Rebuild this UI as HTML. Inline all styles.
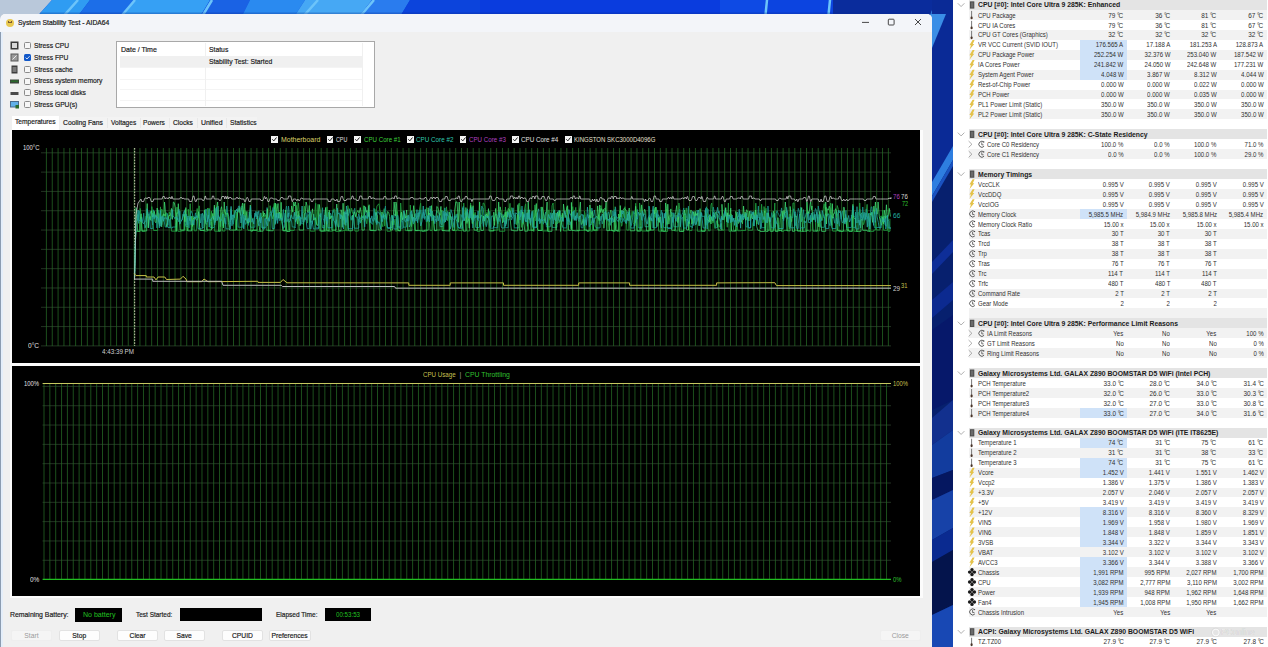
<!DOCTYPE html>
<html><head><meta charset="utf-8"><style>
html,body{margin:0;padding:0;width:1268px;height:647px;overflow:hidden;background:#0a3ede}
body{position:relative;font-family:"Liberation Sans",sans-serif;}
</style></head><body>
<svg style="position:absolute;left:0;top:0" width="953" height="20"><rect x="0" y="0" width="953" height="20" fill="#0a3ede"/><polygon points="0,0 52,0 34,20 0,20" fill="#b9c8da"/><polygon points="52,0 90,0 75,20 34,20" fill="#2f9cf2"/><polygon points="90,0 135,0 120,20 75,20" fill="#1c6ee8"/><polygon points="135,0 210,0 198,20 120,20" fill="#36a0f4"/><polygon points="210,0 250,0 240,20 198,20" fill="#1a62e4"/><polygon points="250,0 305,0 292,20 240,20" fill="#2a8af0"/><polygon points="305,0 372,0 356,20 292,20" fill="#46a8f4"/><polygon points="372,0 410,0 398,20 356,20" fill="#2a7cee"/><polygon points="410,0 480,0 480,20 398,20" fill="#0c44dc"/><rect x="480" y="0" width="240" height="20" fill="#0a3cde"/><rect x="720" y="0" width="45" height="20" fill="#0e4ae4"/><rect x="765" y="0" width="68" height="20" fill="#0c44e0"/><rect x="833" y="0" width="120" height="20" fill="#0a2c9c"/><polygon points="936,0 946,0 937,20 928,20" fill="#3a8ee6"/><path d="M78,0 L60,20 M135,0 L118,20 M212,0 L200,20 M318,0 L300,20 M374,0 L357,20 M767,0 L765,20 M830,0 L828,20" stroke="#6cc4fa" stroke-width="2.5"/><rect x="40" y="12.5" width="913" height="1.5" fill="#0a2a90" opacity="0.3"/></svg><svg style="position:absolute;left:932px;top:0" width="21" height="647"><rect x="0" y="0" width="21" height="647" fill="#0a2a96"/><polygon points="0,14 14,14 0,48" fill="#3a8ee6"/><polygon points="0,190 21,150 21,647 0,647" fill="#07206e"/><polygon points="0,182 21,146 21,160 0,196" fill="#2e7ee0"/><polygon points="0,196 21,160 21,166 0,202" fill="#1a52c0"/><polygon points="0,262 21,240 21,252 0,274" fill="#0e2e98"/><polygon points="0,300 21,282 21,300 0,318" fill="#0c2a90"/><polygon points="0,330 21,315 21,400 0,410" fill="#06186a"/><polygon points="0,418 21,400 21,430 0,445" fill="#12308e"/><polygon points="0,445 21,430 21,470 0,478" fill="#123c9e"/><polygon points="0,478 21,470 21,490 0,500" fill="#051760"/><polygon points="0,500 21,490 21,528 0,540" fill="#1742a8"/><polygon points="0,540 21,528 21,550 0,562" fill="#0a2a90"/><polygon points="0,562 21,550 21,605 0,615" fill="#04144c"/><polygon points="0,615 21,605 21,647 0,647" fill="#1848b4"/></svg><div style="position:absolute;left:0px;top:14px;width:932px;height:633px;background:#f0f0f0;border-top-left-radius:5px;border-top-right-radius:5px;border-left:1px solid #8c9cb0;box-sizing:border-box;"></div><div style="position:absolute;left:0px;top:14px;width:932px;height:18px;background:#f3f5f9;border-top-left-radius:5px;border-top-right-radius:5px;"></div><div style="position:absolute;left:1px;top:32px;width:1.6px;height:615px;background:#e4eefa;"></div><div style="position:absolute;left:6px;top:19px;width:8px;height:8px;border-radius:50%;background:#e8c850;"></div><div style="position:absolute;left:8px;top:21px;width:4px;height:2px;border-bottom:1.2px solid #7a5a30;border-left:0.8px solid #7a5a30;border-right:0.8px solid #7a5a30;box-sizing:border-box"></div><svg style="position:absolute;left:0;top:0" width="1268" height="647"><line x1="862" y1="22.4" x2="869" y2="22.4" stroke="#333" stroke-width="0.9"/><rect x="888.3" y="19.2" width="5.8" height="5.8" rx="0.8" fill="none" stroke="#333" stroke-width="0.9"/><path d="M915 19 L921 25 M921 19 L915 25" stroke="#333" stroke-width="0.9"/></svg><div style="position:absolute;left:24.3px;top:42.1px;width:7px;height:7px;border-radius:1.5px;border:0.8px solid #8a8a8a;box-sizing:border-box;background:#f6f6f6"></div><div style="position:absolute;left:24.3px;top:53.9px;width:7px;height:7px;border-radius:1.5px;background:#1258c8;"></div><svg style="position:absolute;left:24.3px;top:53.9px" width="7" height="7"><path d="M1.6 3.6 L3 5 L5.6 2.2" fill="none" stroke="#fff" stroke-width="0.8"/></svg><div style="position:absolute;left:24.3px;top:65.7px;width:7px;height:7px;border-radius:1.5px;border:0.8px solid #8a8a8a;box-sizing:border-box;background:#f6f6f6"></div><div style="position:absolute;left:24.3px;top:77.5px;width:7px;height:7px;border-radius:1.5px;border:0.8px solid #8a8a8a;box-sizing:border-box;background:#f6f6f6"></div><div style="position:absolute;left:24.3px;top:89.3px;width:7px;height:7px;border-radius:1.5px;border:0.8px solid #8a8a8a;box-sizing:border-box;background:#f6f6f6"></div><div style="position:absolute;left:24.3px;top:101.1px;width:7px;height:7px;border-radius:1.5px;border:0.8px solid #8a8a8a;box-sizing:border-box;background:#f6f6f6"></div><svg style="position:absolute;left:10px;top:41.1px" width="10" height="9"><rect x="0.5" y="0.5" width="8" height="8" fill="#3a3a3a"/><rect x="2" y="2" width="5" height="5" fill="#d8d8d8"/></svg><svg style="position:absolute;left:10px;top:52.9px" width="10" height="9"><rect x="0.5" y="0.5" width="8" height="8" fill="#5a5a5a"/><rect x="1.5" y="1.5" width="6" height="6" fill="#9a9a9a"/><path d="M2.5 6.5 L6.5 2.5" stroke="#fff" stroke-width="0.8"/></svg><svg style="position:absolute;left:10px;top:64.7px" width="10" height="9"><rect x="1.5" y="0.5" width="6" height="8" fill="#3e3e3e"/><rect x="2.5" y="2" width="4" height="5" fill="#7a7a7a"/></svg><svg style="position:absolute;left:10px;top:76.5px" width="10" height="9"><rect x="0" y="2.5" width="9" height="4" fill="#3a463a"/><rect x="1" y="3.5" width="7" height="1.5" fill="#2a6a2a"/></svg><svg style="position:absolute;left:10px;top:88.3px" width="10" height="9"><rect x="0.5" y="4" width="8" height="3" fill="#4a4a4a"/></svg><svg style="position:absolute;left:10px;top:100.1px" width="10" height="9"><rect x="0" y="1" width="9" height="6.5" fill="#4a6a8a"/><rect x="1" y="2" width="7" height="4.5" fill="#60b0e8"/><rect x="5.5" y="5" width="3.5" height="3.5" fill="#2a6a2a"/></svg><div style="position:absolute;left:116.4px;top:41.4px;width:258.6px;height:66.4px;background:#fff;border:1px solid #a8a8a8;box-sizing:border-box"></div><div style="position:absolute;left:120.2px;top:56.3px;width:241.8px;height:10.7px;background:#f0f0f0;"></div><div style="position:absolute;left:120.2px;top:67.2px;width:241.8px;height:0.6px;background:#f4f4f4;"></div><div style="position:absolute;left:120.2px;top:78.7px;width:241.8px;height:0.6px;background:#f4f4f4;"></div><div style="position:absolute;left:120.2px;top:89.3px;width:241.8px;height:0.6px;background:#f4f4f4;"></div><div style="position:absolute;left:120.2px;top:100px;width:241.8px;height:0.6px;background:#f4f4f4;"></div><div style="position:absolute;left:204.6px;top:43px;width:0.7px;height:63px;background:#f0f0f0;"></div><div style="position:absolute;left:361.8px;top:43px;width:0.7px;height:63px;background:#f0f0f0;"></div><div style="position:absolute;left:60px;top:116.5px;width:197px;height:13.6px;background:#f3f3f3;"></div><div style="position:absolute;left:12.2px;top:115.6px;width:47px;height:15px;background:#ffffff;"></div><div style="position:absolute;left:107px;top:118px;width:0.6px;height:10px;background:#e8e8e8;"></div><div style="position:absolute;left:139.5px;top:118px;width:0.6px;height:10px;background:#e8e8e8;"></div><div style="position:absolute;left:169px;top:118px;width:0.6px;height:10px;background:#e8e8e8;"></div><div style="position:absolute;left:196.5px;top:118px;width:0.6px;height:10px;background:#e8e8e8;"></div><div style="position:absolute;left:225.5px;top:118px;width:0.6px;height:10px;background:#e8e8e8;"></div><div style="position:absolute;left:9.5px;top:130px;width:913px;height:468px;background:#fcfcfc;"></div><div style="position:absolute;left:12.2px;top:130.1px;width:907.9px;height:232.6px;background:#000;"></div><div style="position:absolute;left:12.2px;top:365.8px;width:907.9px;height:230.7px;background:#000;"></div><svg style="position:absolute;left:0;top:0" width="1268" height="647" shape-rendering="auto"><line x1="41" y1="152.80" x2="891" y2="152.80" stroke="#2e442e" stroke-width="0.75"/><line x1="41" y1="172.11" x2="891" y2="172.11" stroke="#2e442e" stroke-width="0.75"/><line x1="41" y1="191.42" x2="891" y2="191.42" stroke="#2e442e" stroke-width="0.75"/><line x1="41" y1="210.73" x2="891" y2="210.73" stroke="#2e442e" stroke-width="0.75"/><line x1="41" y1="230.04" x2="891" y2="230.04" stroke="#2e442e" stroke-width="0.75"/><line x1="41" y1="249.35" x2="891" y2="249.35" stroke="#2e442e" stroke-width="0.75"/><line x1="41" y1="268.66" x2="891" y2="268.66" stroke="#2e442e" stroke-width="0.75"/><line x1="41" y1="287.97" x2="891" y2="287.97" stroke="#2e442e" stroke-width="0.75"/><line x1="41" y1="307.28" x2="891" y2="307.28" stroke="#2e442e" stroke-width="0.75"/><line x1="41" y1="326.59" x2="891" y2="326.59" stroke="#2e442e" stroke-width="0.75"/><line x1="41" y1="345.90" x2="891" y2="345.90" stroke="#2e442e" stroke-width="0.75"/><line x1="46.40" y1="148" x2="46.40" y2="346" stroke="#256a25" stroke-width="0.75"/><line x1="52.25" y1="148" x2="52.25" y2="346" stroke="#256a25" stroke-width="0.75"/><line x1="58.09" y1="148" x2="58.09" y2="346" stroke="#256a25" stroke-width="0.75"/><line x1="63.94" y1="148" x2="63.94" y2="346" stroke="#256a25" stroke-width="0.75"/><line x1="69.79" y1="148" x2="69.79" y2="346" stroke="#256a25" stroke-width="0.75"/><line x1="75.64" y1="148" x2="75.64" y2="346" stroke="#256a25" stroke-width="0.75"/><line x1="81.48" y1="148" x2="81.48" y2="346" stroke="#256a25" stroke-width="0.75"/><line x1="87.33" y1="148" x2="87.33" y2="346" stroke="#256a25" stroke-width="0.75"/><line x1="93.18" y1="148" x2="93.18" y2="346" stroke="#256a25" stroke-width="0.75"/><line x1="99.02" y1="148" x2="99.02" y2="346" stroke="#256a25" stroke-width="0.75"/><line x1="104.87" y1="148" x2="104.87" y2="346" stroke="#256a25" stroke-width="0.75"/><line x1="110.72" y1="148" x2="110.72" y2="346" stroke="#256a25" stroke-width="0.75"/><line x1="116.56" y1="148" x2="116.56" y2="346" stroke="#256a25" stroke-width="0.75"/><line x1="122.41" y1="148" x2="122.41" y2="346" stroke="#256a25" stroke-width="0.75"/><line x1="128.26" y1="148" x2="128.26" y2="346" stroke="#256a25" stroke-width="0.75"/><line x1="134.11" y1="148" x2="134.11" y2="346" stroke="#256a25" stroke-width="0.75"/><line x1="139.95" y1="148" x2="139.95" y2="346" stroke="#256a25" stroke-width="0.75"/><line x1="145.80" y1="148" x2="145.80" y2="346" stroke="#256a25" stroke-width="0.75"/><line x1="151.65" y1="148" x2="151.65" y2="346" stroke="#256a25" stroke-width="0.75"/><line x1="157.49" y1="148" x2="157.49" y2="346" stroke="#256a25" stroke-width="0.75"/><line x1="163.34" y1="148" x2="163.34" y2="346" stroke="#256a25" stroke-width="0.75"/><line x1="169.19" y1="148" x2="169.19" y2="346" stroke="#256a25" stroke-width="0.75"/><line x1="175.03" y1="148" x2="175.03" y2="346" stroke="#256a25" stroke-width="0.75"/><line x1="180.88" y1="148" x2="180.88" y2="346" stroke="#256a25" stroke-width="0.75"/><line x1="186.73" y1="148" x2="186.73" y2="346" stroke="#256a25" stroke-width="0.75"/><line x1="192.58" y1="148" x2="192.58" y2="346" stroke="#256a25" stroke-width="0.75"/><line x1="198.42" y1="148" x2="198.42" y2="346" stroke="#256a25" stroke-width="0.75"/><line x1="204.27" y1="148" x2="204.27" y2="346" stroke="#256a25" stroke-width="0.75"/><line x1="210.12" y1="148" x2="210.12" y2="346" stroke="#256a25" stroke-width="0.75"/><line x1="215.96" y1="148" x2="215.96" y2="346" stroke="#256a25" stroke-width="0.75"/><line x1="221.81" y1="148" x2="221.81" y2="346" stroke="#256a25" stroke-width="0.75"/><line x1="227.66" y1="148" x2="227.66" y2="346" stroke="#256a25" stroke-width="0.75"/><line x1="233.50" y1="148" x2="233.50" y2="346" stroke="#256a25" stroke-width="0.75"/><line x1="239.35" y1="148" x2="239.35" y2="346" stroke="#256a25" stroke-width="0.75"/><line x1="245.20" y1="148" x2="245.20" y2="346" stroke="#256a25" stroke-width="0.75"/><line x1="251.05" y1="148" x2="251.05" y2="346" stroke="#256a25" stroke-width="0.75"/><line x1="256.89" y1="148" x2="256.89" y2="346" stroke="#256a25" stroke-width="0.75"/><line x1="262.74" y1="148" x2="262.74" y2="346" stroke="#256a25" stroke-width="0.75"/><line x1="268.59" y1="148" x2="268.59" y2="346" stroke="#256a25" stroke-width="0.75"/><line x1="274.43" y1="148" x2="274.43" y2="346" stroke="#256a25" stroke-width="0.75"/><line x1="280.28" y1="148" x2="280.28" y2="346" stroke="#256a25" stroke-width="0.75"/><line x1="286.13" y1="148" x2="286.13" y2="346" stroke="#256a25" stroke-width="0.75"/><line x1="291.97" y1="148" x2="291.97" y2="346" stroke="#256a25" stroke-width="0.75"/><line x1="297.82" y1="148" x2="297.82" y2="346" stroke="#256a25" stroke-width="0.75"/><line x1="303.67" y1="148" x2="303.67" y2="346" stroke="#256a25" stroke-width="0.75"/><line x1="309.51" y1="148" x2="309.51" y2="346" stroke="#256a25" stroke-width="0.75"/><line x1="315.36" y1="148" x2="315.36" y2="346" stroke="#256a25" stroke-width="0.75"/><line x1="321.21" y1="148" x2="321.21" y2="346" stroke="#256a25" stroke-width="0.75"/><line x1="327.06" y1="148" x2="327.06" y2="346" stroke="#256a25" stroke-width="0.75"/><line x1="332.90" y1="148" x2="332.90" y2="346" stroke="#256a25" stroke-width="0.75"/><line x1="338.75" y1="148" x2="338.75" y2="346" stroke="#256a25" stroke-width="0.75"/><line x1="344.60" y1="148" x2="344.60" y2="346" stroke="#256a25" stroke-width="0.75"/><line x1="350.44" y1="148" x2="350.44" y2="346" stroke="#256a25" stroke-width="0.75"/><line x1="356.29" y1="148" x2="356.29" y2="346" stroke="#256a25" stroke-width="0.75"/><line x1="362.14" y1="148" x2="362.14" y2="346" stroke="#256a25" stroke-width="0.75"/><line x1="367.99" y1="148" x2="367.99" y2="346" stroke="#256a25" stroke-width="0.75"/><line x1="373.83" y1="148" x2="373.83" y2="346" stroke="#256a25" stroke-width="0.75"/><line x1="379.68" y1="148" x2="379.68" y2="346" stroke="#256a25" stroke-width="0.75"/><line x1="385.53" y1="148" x2="385.53" y2="346" stroke="#256a25" stroke-width="0.75"/><line x1="391.37" y1="148" x2="391.37" y2="346" stroke="#256a25" stroke-width="0.75"/><line x1="397.22" y1="148" x2="397.22" y2="346" stroke="#256a25" stroke-width="0.75"/><line x1="403.07" y1="148" x2="403.07" y2="346" stroke="#256a25" stroke-width="0.75"/><line x1="408.91" y1="148" x2="408.91" y2="346" stroke="#256a25" stroke-width="0.75"/><line x1="414.76" y1="148" x2="414.76" y2="346" stroke="#256a25" stroke-width="0.75"/><line x1="420.61" y1="148" x2="420.61" y2="346" stroke="#256a25" stroke-width="0.75"/><line x1="426.45" y1="148" x2="426.45" y2="346" stroke="#256a25" stroke-width="0.75"/><line x1="432.30" y1="148" x2="432.30" y2="346" stroke="#256a25" stroke-width="0.75"/><line x1="438.15" y1="148" x2="438.15" y2="346" stroke="#256a25" stroke-width="0.75"/><line x1="444.00" y1="148" x2="444.00" y2="346" stroke="#256a25" stroke-width="0.75"/><line x1="449.84" y1="148" x2="449.84" y2="346" stroke="#256a25" stroke-width="0.75"/><line x1="455.69" y1="148" x2="455.69" y2="346" stroke="#256a25" stroke-width="0.75"/><line x1="461.54" y1="148" x2="461.54" y2="346" stroke="#256a25" stroke-width="0.75"/><line x1="467.38" y1="148" x2="467.38" y2="346" stroke="#256a25" stroke-width="0.75"/><line x1="473.23" y1="148" x2="473.23" y2="346" stroke="#256a25" stroke-width="0.75"/><line x1="479.08" y1="148" x2="479.08" y2="346" stroke="#256a25" stroke-width="0.75"/><line x1="484.93" y1="148" x2="484.93" y2="346" stroke="#256a25" stroke-width="0.75"/><line x1="490.77" y1="148" x2="490.77" y2="346" stroke="#256a25" stroke-width="0.75"/><line x1="496.62" y1="148" x2="496.62" y2="346" stroke="#256a25" stroke-width="0.75"/><line x1="502.47" y1="148" x2="502.47" y2="346" stroke="#256a25" stroke-width="0.75"/><line x1="508.31" y1="148" x2="508.31" y2="346" stroke="#256a25" stroke-width="0.75"/><line x1="514.16" y1="148" x2="514.16" y2="346" stroke="#256a25" stroke-width="0.75"/><line x1="520.01" y1="148" x2="520.01" y2="346" stroke="#256a25" stroke-width="0.75"/><line x1="525.85" y1="148" x2="525.85" y2="346" stroke="#256a25" stroke-width="0.75"/><line x1="531.70" y1="148" x2="531.70" y2="346" stroke="#256a25" stroke-width="0.75"/><line x1="537.55" y1="148" x2="537.55" y2="346" stroke="#256a25" stroke-width="0.75"/><line x1="543.40" y1="148" x2="543.40" y2="346" stroke="#256a25" stroke-width="0.75"/><line x1="549.24" y1="148" x2="549.24" y2="346" stroke="#256a25" stroke-width="0.75"/><line x1="555.09" y1="148" x2="555.09" y2="346" stroke="#256a25" stroke-width="0.75"/><line x1="560.94" y1="148" x2="560.94" y2="346" stroke="#256a25" stroke-width="0.75"/><line x1="566.78" y1="148" x2="566.78" y2="346" stroke="#256a25" stroke-width="0.75"/><line x1="572.63" y1="148" x2="572.63" y2="346" stroke="#256a25" stroke-width="0.75"/><line x1="578.48" y1="148" x2="578.48" y2="346" stroke="#256a25" stroke-width="0.75"/><line x1="584.32" y1="148" x2="584.32" y2="346" stroke="#256a25" stroke-width="0.75"/><line x1="590.17" y1="148" x2="590.17" y2="346" stroke="#256a25" stroke-width="0.75"/><line x1="596.02" y1="148" x2="596.02" y2="346" stroke="#256a25" stroke-width="0.75"/><line x1="601.87" y1="148" x2="601.87" y2="346" stroke="#256a25" stroke-width="0.75"/><line x1="607.71" y1="148" x2="607.71" y2="346" stroke="#256a25" stroke-width="0.75"/><line x1="613.56" y1="148" x2="613.56" y2="346" stroke="#256a25" stroke-width="0.75"/><line x1="619.41" y1="148" x2="619.41" y2="346" stroke="#256a25" stroke-width="0.75"/><line x1="625.25" y1="148" x2="625.25" y2="346" stroke="#256a25" stroke-width="0.75"/><line x1="631.10" y1="148" x2="631.10" y2="346" stroke="#256a25" stroke-width="0.75"/><line x1="636.95" y1="148" x2="636.95" y2="346" stroke="#256a25" stroke-width="0.75"/><line x1="642.79" y1="148" x2="642.79" y2="346" stroke="#256a25" stroke-width="0.75"/><line x1="648.64" y1="148" x2="648.64" y2="346" stroke="#256a25" stroke-width="0.75"/><line x1="654.49" y1="148" x2="654.49" y2="346" stroke="#256a25" stroke-width="0.75"/><line x1="660.34" y1="148" x2="660.34" y2="346" stroke="#256a25" stroke-width="0.75"/><line x1="666.18" y1="148" x2="666.18" y2="346" stroke="#256a25" stroke-width="0.75"/><line x1="672.03" y1="148" x2="672.03" y2="346" stroke="#256a25" stroke-width="0.75"/><line x1="677.88" y1="148" x2="677.88" y2="346" stroke="#256a25" stroke-width="0.75"/><line x1="683.72" y1="148" x2="683.72" y2="346" stroke="#256a25" stroke-width="0.75"/><line x1="689.57" y1="148" x2="689.57" y2="346" stroke="#256a25" stroke-width="0.75"/><line x1="695.42" y1="148" x2="695.42" y2="346" stroke="#256a25" stroke-width="0.75"/><line x1="701.26" y1="148" x2="701.26" y2="346" stroke="#256a25" stroke-width="0.75"/><line x1="707.11" y1="148" x2="707.11" y2="346" stroke="#256a25" stroke-width="0.75"/><line x1="712.96" y1="148" x2="712.96" y2="346" stroke="#256a25" stroke-width="0.75"/><line x1="718.81" y1="148" x2="718.81" y2="346" stroke="#256a25" stroke-width="0.75"/><line x1="724.65" y1="148" x2="724.65" y2="346" stroke="#256a25" stroke-width="0.75"/><line x1="730.50" y1="148" x2="730.50" y2="346" stroke="#256a25" stroke-width="0.75"/><line x1="736.35" y1="148" x2="736.35" y2="346" stroke="#256a25" stroke-width="0.75"/><line x1="742.19" y1="148" x2="742.19" y2="346" stroke="#256a25" stroke-width="0.75"/><line x1="748.04" y1="148" x2="748.04" y2="346" stroke="#256a25" stroke-width="0.75"/><line x1="753.89" y1="148" x2="753.89" y2="346" stroke="#256a25" stroke-width="0.75"/><line x1="759.73" y1="148" x2="759.73" y2="346" stroke="#256a25" stroke-width="0.75"/><line x1="765.58" y1="148" x2="765.58" y2="346" stroke="#256a25" stroke-width="0.75"/><line x1="771.43" y1="148" x2="771.43" y2="346" stroke="#256a25" stroke-width="0.75"/><line x1="777.27" y1="148" x2="777.27" y2="346" stroke="#256a25" stroke-width="0.75"/><line x1="783.12" y1="148" x2="783.12" y2="346" stroke="#256a25" stroke-width="0.75"/><line x1="788.97" y1="148" x2="788.97" y2="346" stroke="#256a25" stroke-width="0.75"/><line x1="794.82" y1="148" x2="794.82" y2="346" stroke="#256a25" stroke-width="0.75"/><line x1="800.66" y1="148" x2="800.66" y2="346" stroke="#256a25" stroke-width="0.75"/><line x1="806.51" y1="148" x2="806.51" y2="346" stroke="#256a25" stroke-width="0.75"/><line x1="812.36" y1="148" x2="812.36" y2="346" stroke="#256a25" stroke-width="0.75"/><line x1="818.20" y1="148" x2="818.20" y2="346" stroke="#256a25" stroke-width="0.75"/><line x1="824.05" y1="148" x2="824.05" y2="346" stroke="#256a25" stroke-width="0.75"/><line x1="829.90" y1="148" x2="829.90" y2="346" stroke="#256a25" stroke-width="0.75"/><line x1="835.75" y1="148" x2="835.75" y2="346" stroke="#256a25" stroke-width="0.75"/><line x1="841.59" y1="148" x2="841.59" y2="346" stroke="#256a25" stroke-width="0.75"/><line x1="847.44" y1="148" x2="847.44" y2="346" stroke="#256a25" stroke-width="0.75"/><line x1="853.29" y1="148" x2="853.29" y2="346" stroke="#256a25" stroke-width="0.75"/><line x1="859.13" y1="148" x2="859.13" y2="346" stroke="#256a25" stroke-width="0.75"/><line x1="864.98" y1="148" x2="864.98" y2="346" stroke="#256a25" stroke-width="0.75"/><line x1="870.83" y1="148" x2="870.83" y2="346" stroke="#256a25" stroke-width="0.75"/><line x1="876.67" y1="148" x2="876.67" y2="346" stroke="#256a25" stroke-width="0.75"/><line x1="882.52" y1="148" x2="882.52" y2="346" stroke="#256a25" stroke-width="0.75"/><line x1="888.37" y1="148" x2="888.37" y2="346" stroke="#256a25" stroke-width="0.75"/><line x1="42.5" y1="386.40" x2="891" y2="386.40" stroke="#2e442e" stroke-width="0.75"/><line x1="42.5" y1="405.72" x2="891" y2="405.72" stroke="#2e442e" stroke-width="0.75"/><line x1="42.5" y1="425.04" x2="891" y2="425.04" stroke="#2e442e" stroke-width="0.75"/><line x1="42.5" y1="444.36" x2="891" y2="444.36" stroke="#2e442e" stroke-width="0.75"/><line x1="42.5" y1="463.68" x2="891" y2="463.68" stroke="#2e442e" stroke-width="0.75"/><line x1="42.5" y1="483.00" x2="891" y2="483.00" stroke="#2e442e" stroke-width="0.75"/><line x1="42.5" y1="502.32" x2="891" y2="502.32" stroke="#2e442e" stroke-width="0.75"/><line x1="42.5" y1="521.64" x2="891" y2="521.64" stroke="#2e442e" stroke-width="0.75"/><line x1="42.5" y1="540.96" x2="891" y2="540.96" stroke="#2e442e" stroke-width="0.75"/><line x1="42.5" y1="560.28" x2="891" y2="560.28" stroke="#2e442e" stroke-width="0.75"/><line x1="44.00" y1="384" x2="44.00" y2="579.4" stroke="#256a25" stroke-width="0.75"/><line x1="49.85" y1="384" x2="49.85" y2="579.4" stroke="#256a25" stroke-width="0.75"/><line x1="55.70" y1="384" x2="55.70" y2="579.4" stroke="#256a25" stroke-width="0.75"/><line x1="61.55" y1="384" x2="61.55" y2="579.4" stroke="#256a25" stroke-width="0.75"/><line x1="67.40" y1="384" x2="67.40" y2="579.4" stroke="#256a25" stroke-width="0.75"/><line x1="73.25" y1="384" x2="73.25" y2="579.4" stroke="#256a25" stroke-width="0.75"/><line x1="79.11" y1="384" x2="79.11" y2="579.4" stroke="#256a25" stroke-width="0.75"/><line x1="84.96" y1="384" x2="84.96" y2="579.4" stroke="#256a25" stroke-width="0.75"/><line x1="90.81" y1="384" x2="90.81" y2="579.4" stroke="#256a25" stroke-width="0.75"/><line x1="96.66" y1="384" x2="96.66" y2="579.4" stroke="#256a25" stroke-width="0.75"/><line x1="102.51" y1="384" x2="102.51" y2="579.4" stroke="#256a25" stroke-width="0.75"/><line x1="108.36" y1="384" x2="108.36" y2="579.4" stroke="#256a25" stroke-width="0.75"/><line x1="114.21" y1="384" x2="114.21" y2="579.4" stroke="#256a25" stroke-width="0.75"/><line x1="120.06" y1="384" x2="120.06" y2="579.4" stroke="#256a25" stroke-width="0.75"/><line x1="125.91" y1="384" x2="125.91" y2="579.4" stroke="#256a25" stroke-width="0.75"/><line x1="131.76" y1="384" x2="131.76" y2="579.4" stroke="#256a25" stroke-width="0.75"/><line x1="137.62" y1="384" x2="137.62" y2="579.4" stroke="#256a25" stroke-width="0.75"/><line x1="143.47" y1="384" x2="143.47" y2="579.4" stroke="#256a25" stroke-width="0.75"/><line x1="149.32" y1="384" x2="149.32" y2="579.4" stroke="#256a25" stroke-width="0.75"/><line x1="155.17" y1="384" x2="155.17" y2="579.4" stroke="#256a25" stroke-width="0.75"/><line x1="161.02" y1="384" x2="161.02" y2="579.4" stroke="#256a25" stroke-width="0.75"/><line x1="166.87" y1="384" x2="166.87" y2="579.4" stroke="#256a25" stroke-width="0.75"/><line x1="172.72" y1="384" x2="172.72" y2="579.4" stroke="#256a25" stroke-width="0.75"/><line x1="178.57" y1="384" x2="178.57" y2="579.4" stroke="#256a25" stroke-width="0.75"/><line x1="184.42" y1="384" x2="184.42" y2="579.4" stroke="#256a25" stroke-width="0.75"/><line x1="190.28" y1="384" x2="190.28" y2="579.4" stroke="#256a25" stroke-width="0.75"/><line x1="196.13" y1="384" x2="196.13" y2="579.4" stroke="#256a25" stroke-width="0.75"/><line x1="201.98" y1="384" x2="201.98" y2="579.4" stroke="#256a25" stroke-width="0.75"/><line x1="207.83" y1="384" x2="207.83" y2="579.4" stroke="#256a25" stroke-width="0.75"/><line x1="213.68" y1="384" x2="213.68" y2="579.4" stroke="#256a25" stroke-width="0.75"/><line x1="219.53" y1="384" x2="219.53" y2="579.4" stroke="#256a25" stroke-width="0.75"/><line x1="225.38" y1="384" x2="225.38" y2="579.4" stroke="#256a25" stroke-width="0.75"/><line x1="231.23" y1="384" x2="231.23" y2="579.4" stroke="#256a25" stroke-width="0.75"/><line x1="237.08" y1="384" x2="237.08" y2="579.4" stroke="#256a25" stroke-width="0.75"/><line x1="242.93" y1="384" x2="242.93" y2="579.4" stroke="#256a25" stroke-width="0.75"/><line x1="248.78" y1="384" x2="248.78" y2="579.4" stroke="#256a25" stroke-width="0.75"/><line x1="254.64" y1="384" x2="254.64" y2="579.4" stroke="#256a25" stroke-width="0.75"/><line x1="260.49" y1="384" x2="260.49" y2="579.4" stroke="#256a25" stroke-width="0.75"/><line x1="266.34" y1="384" x2="266.34" y2="579.4" stroke="#256a25" stroke-width="0.75"/><line x1="272.19" y1="384" x2="272.19" y2="579.4" stroke="#256a25" stroke-width="0.75"/><line x1="278.04" y1="384" x2="278.04" y2="579.4" stroke="#256a25" stroke-width="0.75"/><line x1="283.89" y1="384" x2="283.89" y2="579.4" stroke="#256a25" stroke-width="0.75"/><line x1="289.74" y1="384" x2="289.74" y2="579.4" stroke="#256a25" stroke-width="0.75"/><line x1="295.59" y1="384" x2="295.59" y2="579.4" stroke="#256a25" stroke-width="0.75"/><line x1="301.44" y1="384" x2="301.44" y2="579.4" stroke="#256a25" stroke-width="0.75"/><line x1="307.30" y1="384" x2="307.30" y2="579.4" stroke="#256a25" stroke-width="0.75"/><line x1="313.15" y1="384" x2="313.15" y2="579.4" stroke="#256a25" stroke-width="0.75"/><line x1="319.00" y1="384" x2="319.00" y2="579.4" stroke="#256a25" stroke-width="0.75"/><line x1="324.85" y1="384" x2="324.85" y2="579.4" stroke="#256a25" stroke-width="0.75"/><line x1="330.70" y1="384" x2="330.70" y2="579.4" stroke="#256a25" stroke-width="0.75"/><line x1="336.55" y1="384" x2="336.55" y2="579.4" stroke="#256a25" stroke-width="0.75"/><line x1="342.40" y1="384" x2="342.40" y2="579.4" stroke="#256a25" stroke-width="0.75"/><line x1="348.25" y1="384" x2="348.25" y2="579.4" stroke="#256a25" stroke-width="0.75"/><line x1="354.10" y1="384" x2="354.10" y2="579.4" stroke="#256a25" stroke-width="0.75"/><line x1="359.95" y1="384" x2="359.95" y2="579.4" stroke="#256a25" stroke-width="0.75"/><line x1="365.81" y1="384" x2="365.81" y2="579.4" stroke="#256a25" stroke-width="0.75"/><line x1="371.66" y1="384" x2="371.66" y2="579.4" stroke="#256a25" stroke-width="0.75"/><line x1="377.51" y1="384" x2="377.51" y2="579.4" stroke="#256a25" stroke-width="0.75"/><line x1="383.36" y1="384" x2="383.36" y2="579.4" stroke="#256a25" stroke-width="0.75"/><line x1="389.21" y1="384" x2="389.21" y2="579.4" stroke="#256a25" stroke-width="0.75"/><line x1="395.06" y1="384" x2="395.06" y2="579.4" stroke="#256a25" stroke-width="0.75"/><line x1="400.91" y1="384" x2="400.91" y2="579.4" stroke="#256a25" stroke-width="0.75"/><line x1="406.76" y1="384" x2="406.76" y2="579.4" stroke="#256a25" stroke-width="0.75"/><line x1="412.61" y1="384" x2="412.61" y2="579.4" stroke="#256a25" stroke-width="0.75"/><line x1="418.46" y1="384" x2="418.46" y2="579.4" stroke="#256a25" stroke-width="0.75"/><line x1="424.31" y1="384" x2="424.31" y2="579.4" stroke="#256a25" stroke-width="0.75"/><line x1="430.17" y1="384" x2="430.17" y2="579.4" stroke="#256a25" stroke-width="0.75"/><line x1="436.02" y1="384" x2="436.02" y2="579.4" stroke="#256a25" stroke-width="0.75"/><line x1="441.87" y1="384" x2="441.87" y2="579.4" stroke="#256a25" stroke-width="0.75"/><line x1="447.72" y1="384" x2="447.72" y2="579.4" stroke="#256a25" stroke-width="0.75"/><line x1="453.57" y1="384" x2="453.57" y2="579.4" stroke="#256a25" stroke-width="0.75"/><line x1="459.42" y1="384" x2="459.42" y2="579.4" stroke="#256a25" stroke-width="0.75"/><line x1="465.27" y1="384" x2="465.27" y2="579.4" stroke="#256a25" stroke-width="0.75"/><line x1="471.12" y1="384" x2="471.12" y2="579.4" stroke="#256a25" stroke-width="0.75"/><line x1="476.97" y1="384" x2="476.97" y2="579.4" stroke="#256a25" stroke-width="0.75"/><line x1="482.82" y1="384" x2="482.82" y2="579.4" stroke="#256a25" stroke-width="0.75"/><line x1="488.68" y1="384" x2="488.68" y2="579.4" stroke="#256a25" stroke-width="0.75"/><line x1="494.53" y1="384" x2="494.53" y2="579.4" stroke="#256a25" stroke-width="0.75"/><line x1="500.38" y1="384" x2="500.38" y2="579.4" stroke="#256a25" stroke-width="0.75"/><line x1="506.23" y1="384" x2="506.23" y2="579.4" stroke="#256a25" stroke-width="0.75"/><line x1="512.08" y1="384" x2="512.08" y2="579.4" stroke="#256a25" stroke-width="0.75"/><line x1="517.93" y1="384" x2="517.93" y2="579.4" stroke="#256a25" stroke-width="0.75"/><line x1="523.78" y1="384" x2="523.78" y2="579.4" stroke="#256a25" stroke-width="0.75"/><line x1="529.63" y1="384" x2="529.63" y2="579.4" stroke="#256a25" stroke-width="0.75"/><line x1="535.48" y1="384" x2="535.48" y2="579.4" stroke="#256a25" stroke-width="0.75"/><line x1="541.34" y1="384" x2="541.34" y2="579.4" stroke="#256a25" stroke-width="0.75"/><line x1="547.19" y1="384" x2="547.19" y2="579.4" stroke="#256a25" stroke-width="0.75"/><line x1="553.04" y1="384" x2="553.04" y2="579.4" stroke="#256a25" stroke-width="0.75"/><line x1="558.89" y1="384" x2="558.89" y2="579.4" stroke="#256a25" stroke-width="0.75"/><line x1="564.74" y1="384" x2="564.74" y2="579.4" stroke="#256a25" stroke-width="0.75"/><line x1="570.59" y1="384" x2="570.59" y2="579.4" stroke="#256a25" stroke-width="0.75"/><line x1="576.44" y1="384" x2="576.44" y2="579.4" stroke="#256a25" stroke-width="0.75"/><line x1="582.29" y1="384" x2="582.29" y2="579.4" stroke="#256a25" stroke-width="0.75"/><line x1="588.14" y1="384" x2="588.14" y2="579.4" stroke="#256a25" stroke-width="0.75"/><line x1="593.99" y1="384" x2="593.99" y2="579.4" stroke="#256a25" stroke-width="0.75"/><line x1="599.85" y1="384" x2="599.85" y2="579.4" stroke="#256a25" stroke-width="0.75"/><line x1="605.70" y1="384" x2="605.70" y2="579.4" stroke="#256a25" stroke-width="0.75"/><line x1="611.55" y1="384" x2="611.55" y2="579.4" stroke="#256a25" stroke-width="0.75"/><line x1="617.40" y1="384" x2="617.40" y2="579.4" stroke="#256a25" stroke-width="0.75"/><line x1="623.25" y1="384" x2="623.25" y2="579.4" stroke="#256a25" stroke-width="0.75"/><line x1="629.10" y1="384" x2="629.10" y2="579.4" stroke="#256a25" stroke-width="0.75"/><line x1="634.95" y1="384" x2="634.95" y2="579.4" stroke="#256a25" stroke-width="0.75"/><line x1="640.80" y1="384" x2="640.80" y2="579.4" stroke="#256a25" stroke-width="0.75"/><line x1="646.65" y1="384" x2="646.65" y2="579.4" stroke="#256a25" stroke-width="0.75"/><line x1="652.50" y1="384" x2="652.50" y2="579.4" stroke="#256a25" stroke-width="0.75"/><line x1="658.36" y1="384" x2="658.36" y2="579.4" stroke="#256a25" stroke-width="0.75"/><line x1="664.21" y1="384" x2="664.21" y2="579.4" stroke="#256a25" stroke-width="0.75"/><line x1="670.06" y1="384" x2="670.06" y2="579.4" stroke="#256a25" stroke-width="0.75"/><line x1="675.91" y1="384" x2="675.91" y2="579.4" stroke="#256a25" stroke-width="0.75"/><line x1="681.76" y1="384" x2="681.76" y2="579.4" stroke="#256a25" stroke-width="0.75"/><line x1="687.61" y1="384" x2="687.61" y2="579.4" stroke="#256a25" stroke-width="0.75"/><line x1="693.46" y1="384" x2="693.46" y2="579.4" stroke="#256a25" stroke-width="0.75"/><line x1="699.31" y1="384" x2="699.31" y2="579.4" stroke="#256a25" stroke-width="0.75"/><line x1="705.16" y1="384" x2="705.16" y2="579.4" stroke="#256a25" stroke-width="0.75"/><line x1="711.01" y1="384" x2="711.01" y2="579.4" stroke="#256a25" stroke-width="0.75"/><line x1="716.87" y1="384" x2="716.87" y2="579.4" stroke="#256a25" stroke-width="0.75"/><line x1="722.72" y1="384" x2="722.72" y2="579.4" stroke="#256a25" stroke-width="0.75"/><line x1="728.57" y1="384" x2="728.57" y2="579.4" stroke="#256a25" stroke-width="0.75"/><line x1="734.42" y1="384" x2="734.42" y2="579.4" stroke="#256a25" stroke-width="0.75"/><line x1="740.27" y1="384" x2="740.27" y2="579.4" stroke="#256a25" stroke-width="0.75"/><line x1="746.12" y1="384" x2="746.12" y2="579.4" stroke="#256a25" stroke-width="0.75"/><line x1="751.97" y1="384" x2="751.97" y2="579.4" stroke="#256a25" stroke-width="0.75"/><line x1="757.82" y1="384" x2="757.82" y2="579.4" stroke="#256a25" stroke-width="0.75"/><line x1="763.67" y1="384" x2="763.67" y2="579.4" stroke="#256a25" stroke-width="0.75"/><line x1="769.52" y1="384" x2="769.52" y2="579.4" stroke="#256a25" stroke-width="0.75"/><line x1="775.38" y1="384" x2="775.38" y2="579.4" stroke="#256a25" stroke-width="0.75"/><line x1="781.23" y1="384" x2="781.23" y2="579.4" stroke="#256a25" stroke-width="0.75"/><line x1="787.08" y1="384" x2="787.08" y2="579.4" stroke="#256a25" stroke-width="0.75"/><line x1="792.93" y1="384" x2="792.93" y2="579.4" stroke="#256a25" stroke-width="0.75"/><line x1="798.78" y1="384" x2="798.78" y2="579.4" stroke="#256a25" stroke-width="0.75"/><line x1="804.63" y1="384" x2="804.63" y2="579.4" stroke="#256a25" stroke-width="0.75"/><line x1="810.48" y1="384" x2="810.48" y2="579.4" stroke="#256a25" stroke-width="0.75"/><line x1="816.33" y1="384" x2="816.33" y2="579.4" stroke="#256a25" stroke-width="0.75"/><line x1="822.18" y1="384" x2="822.18" y2="579.4" stroke="#256a25" stroke-width="0.75"/><line x1="828.03" y1="384" x2="828.03" y2="579.4" stroke="#256a25" stroke-width="0.75"/><line x1="833.88" y1="384" x2="833.88" y2="579.4" stroke="#256a25" stroke-width="0.75"/><line x1="839.74" y1="384" x2="839.74" y2="579.4" stroke="#256a25" stroke-width="0.75"/><line x1="845.59" y1="384" x2="845.59" y2="579.4" stroke="#256a25" stroke-width="0.75"/><line x1="851.44" y1="384" x2="851.44" y2="579.4" stroke="#256a25" stroke-width="0.75"/><line x1="857.29" y1="384" x2="857.29" y2="579.4" stroke="#256a25" stroke-width="0.75"/><line x1="863.14" y1="384" x2="863.14" y2="579.4" stroke="#256a25" stroke-width="0.75"/><line x1="868.99" y1="384" x2="868.99" y2="579.4" stroke="#256a25" stroke-width="0.75"/><line x1="874.84" y1="384" x2="874.84" y2="579.4" stroke="#256a25" stroke-width="0.75"/><line x1="880.69" y1="384" x2="880.69" y2="579.4" stroke="#256a25" stroke-width="0.75"/><line x1="886.54" y1="384" x2="886.54" y2="579.4" stroke="#256a25" stroke-width="0.75"/><line x1="42.6" y1="383.5" x2="891" y2="383.5" stroke="#c8c860" stroke-width="1.2"/><line x1="42.6" y1="579.4" x2="891" y2="579.4" stroke="#20c020" stroke-width="1.2"/><line x1="134.7" y1="148" x2="134.7" y2="346" stroke="#e8e8c8" stroke-width="0.9" stroke-dasharray="1.6,1.3"/><polyline points="134.50,278.00 135.50,240.00 136.00,231.27 140.17,231.27 140.17,208.35 141.19,216.22 141.77,231.25 144.78,231.25 144.78,223.60 145.86,216.10 147.12,217.56 148.05,216.30 148.86,214.50 149.53,216.80 150.43,216.59 151.30,220.88 151.81,206.59 152.46,212.51 153.65,230.50 157.68,230.50 157.68,222.75 158.84,213.15 159.58,226.02 160.49,206.88 161.02,218.12 161.65,209.08 162.72,210.69 163.62,221.33 164.54,214.29 165.07,216.11 166.36,212.64 167.26,218.65 168.38,219.25 169.29,212.09 170.25,214.93 171.52,231.18 175.89,231.18 175.89,224.76 176.98,207.08 177.82,231.31 181.32,231.31 181.32,230.76 184.52,230.76 184.52,214.95 185.29,209.12 186.16,230.34 188.28,230.34 188.28,209.25 189.47,219.76 190.17,203.67 191.21,230.03 192.76,230.03 192.76,216.01 193.76,219.37 194.32,230.79 196.41,230.79 196.41,214.16 197.16,208.51 197.68,212.03 198.27,218.15 199.18,205.84 199.69,230.22 203.71,230.22 203.71,231.06 207.58,231.06 207.58,208.05 208.26,218.50 208.94,207.94 209.75,211.72 210.30,224.91 211.58,211.20 212.32,228.98 213.42,215.99 214.62,231.23 219.49,231.23 219.49,216.91 220.13,226.78 221.03,214.21 221.81,212.58 222.47,231.00 225.00,231.00 225.00,209.37 225.76,217.08 226.42,215.21 227.71,213.43 228.75,220.11 230.00,223.89 230.89,208.81 231.57,219.68 232.80,218.17 233.91,219.63 234.68,210.36 235.88,230.03 236.48,211.86 237.07,230.11 241.60,230.11 241.60,219.03 242.59,210.37 243.39,216.48 244.11,218.85 245.06,210.56 246.19,217.48 246.70,218.90 247.91,230.36 252.87,230.36 252.87,217.89 253.46,230.36 257.56,230.36 257.56,231.37 260.39,231.37 260.39,220.92 261.09,212.85 261.67,216.99 262.95,216.25 263.93,215.02 265.16,218.33 266.44,230.32 270.10,230.32 270.10,205.70 271.13,213.15 272.06,216.07 272.79,218.88 273.65,205.67 274.46,203.00 275.22,224.49 275.96,203.86 276.90,211.68 277.41,213.02 277.97,218.50 278.98,217.19 280.11,218.63 281.02,212.92 281.58,221.62 282.87,226.73 283.62,230.77 288.34,230.77 288.34,219.04 289.57,230.47 294.23,230.47 294.23,213.60 295.45,215.74 296.10,205.30 296.72,213.36 297.27,211.36 298.42,203.00 299.28,212.49 300.05,225.98 300.89,217.54 301.44,218.34 302.14,218.76 302.96,212.12 303.47,212.69 304.37,206.13 305.45,220.03 306.35,217.13 307.30,223.13 308.53,214.67 309.09,214.25 310.29,231.15 314.88,231.15 314.88,211.19 315.68,203.27 316.77,225.23 318.04,204.29 318.68,217.84 319.78,231.02 323.79,231.02 323.79,224.90 324.71,231.09 326.35,231.09 326.35,219.51 327.06,206.80 328.33,231.16 332.78,231.16 332.78,213.67 334.02,208.77 334.82,212.17 335.58,231.36 340.44,231.36 340.44,230.90 343.37,230.90 343.37,230.44 345.74,230.44 345.74,217.72 346.24,230.66 347.82,230.66 347.82,205.53 348.48,207.81 349.41,211.43 350.46,213.27 351.61,208.20 352.79,213.71 353.75,215.29 354.90,231.12 358.30,231.12 358.30,219.27 359.41,221.39 360.37,222.24 361.27,215.72 362.13,215.95 362.87,218.19 363.76,205.61 364.57,221.64 365.55,216.14 366.71,223.76 367.88,215.37 368.97,214.54 369.97,220.02 370.76,230.58 373.75,230.58 373.75,221.97 374.83,208.90 375.93,215.73 376.95,205.99 377.78,205.01 378.90,203.74 380.02,210.88 380.73,212.01 381.93,223.64 382.82,226.81 383.35,215.76 384.14,208.67 384.65,226.11 385.47,212.44 386.46,219.83 387.17,231.25 390.50,231.25 390.50,230.08 391.41,220.99 392.48,224.88 393.20,217.01 393.84,224.93 395.03,219.12 396.10,231.50 396.62,211.61 397.47,211.75 398.59,230.94 400.67,230.94 400.67,203.00 401.76,221.37 402.47,218.46 403.54,218.92 404.64,213.79 405.38,230.60 408.61,230.60 408.61,230.28 410.30,230.28 410.30,205.08 411.51,226.66 412.66,218.36 413.66,217.84 414.71,230.60 417.94,230.60 417.94,213.01 418.58,219.33 419.54,208.94 420.61,203.24 421.91,231.20 426.41,231.20 426.41,207.49 427.22,222.17 428.42,212.55 429.04,219.90 430.07,230.57 432.03,230.57 432.03,216.37 433.20,218.42 434.37,230.41 436.28,230.41 436.28,230.04 440.02,230.04 440.02,216.55 441.06,212.38 442.07,210.06 443.08,231.22 444.06,222.05 445.04,213.54 445.82,215.66 446.48,206.83 447.55,220.73 448.63,215.81 449.25,231.50 450.43,218.89 451.58,217.00 452.38,224.35 453.24,230.59 457.21,230.59 457.21,218.15 457.73,226.59 458.30,230.58 462.36,230.58 462.36,222.76 462.97,220.82 463.71,203.09 464.41,212.93 465.53,221.58 466.50,230.98 469.57,230.98 469.57,213.46 470.63,203.00 471.85,214.95 472.65,219.95 473.22,214.14 474.38,215.05 475.13,212.27 476.23,220.96 477.15,231.37 479.79,231.37 479.79,231.50 480.67,224.18 481.91,222.39 483.15,203.00 483.76,203.00 484.89,205.99 485.98,225.40 486.80,212.44 488.09,217.96 489.14,219.45 490.36,230.62 494.41,230.62 494.41,230.15 497.82,230.15 497.82,220.27 498.83,219.39 499.39,231.28 503.14,231.28 503.14,231.29 504.72,231.29 504.72,222.34 505.45,206.99 506.42,221.76 507.46,211.40 508.72,214.06 510.02,203.31 510.68,217.07 511.57,207.66 512.78,214.27 513.96,214.98 514.61,215.73 515.20,215.31 516.41,224.61 517.37,214.40 518.29,223.24 519.12,203.00 519.86,206.71 520.80,215.63 521.44,227.42 522.39,215.61 523.21,224.25 524.43,209.63 525.61,203.83 526.40,218.77 527.29,212.65 528.07,216.95 528.59,230.39 533.09,230.39 533.09,210.35 533.80,231.50 534.89,204.92 535.78,220.92 536.67,215.35 537.27,213.00 537.96,230.38 541.14,230.38 541.14,206.96 542.30,230.92 547.29,230.92 547.29,222.65 548.22,231.50 548.80,209.85 549.63,220.04 550.36,219.73 551.49,218.39 552.06,205.75 553.10,203.00 553.69,215.25 554.27,219.89 555.19,213.37 556.40,214.04 557.62,223.91 558.29,211.80 558.80,222.90 559.82,221.42 560.75,214.92 561.86,216.75 562.93,221.56 563.53,230.84 567.13,230.84 567.13,206.61 567.74,214.04 568.47,215.48 569.26,220.84 570.03,222.04 571.09,229.09 571.64,212.30 572.78,206.63 573.54,214.23 574.15,219.21 574.72,213.37 575.77,207.38 576.43,221.48 576.93,230.46 580.58,230.46 580.58,230.34 584.47,230.34 584.47,211.13 585.24,214.50 586.00,230.38 590.20,230.38 590.20,215.83 590.73,231.09 592.59,231.09 592.59,215.73 593.12,230.60 597.89,230.60 597.89,218.22 598.58,214.75 599.34,224.33 600.12,207.49 601.10,205.55 601.93,209.77 602.88,210.11 603.69,210.06 604.24,209.46 604.88,207.94 605.58,219.51 606.50,213.31 607.30,217.87 608.24,222.24 609.28,230.46 613.17,230.46 613.17,231.37 615.17,231.37 615.17,206.67 615.84,219.66 617.05,231.27 619.89,231.27 619.89,210.84 620.48,214.71 621.62,226.30 622.13,224.79 622.93,211.14 624.14,217.73 624.98,206.70 625.80,223.46 626.33,218.59 626.83,230.17 628.82,230.17 628.82,212.55 630.11,220.37 631.13,218.23 632.28,211.25 633.23,222.58 634.46,226.18 635.67,203.29 636.78,230.65 639.60,230.65 639.60,203.00 640.75,212.88 641.67,231.01 646.29,231.01 646.29,230.96 649.49,230.96 649.49,206.56 650.56,230.80 651.37,218.03 652.01,221.13 653.29,219.71 654.41,207.98 655.53,217.47 656.19,207.20 657.43,213.62 658.05,217.25 658.61,231.15 662.44,231.15 662.44,217.02 663.17,231.46 667.56,231.46 667.56,222.99 668.57,216.83 669.80,215.44 670.95,216.46 672.17,213.16 673.29,220.33 674.56,230.88 677.86,230.88 677.86,220.52 678.93,203.00 679.99,210.86 681.11,230.97 683.97,230.97 683.97,214.79 684.98,221.13 685.49,215.29 686.24,207.88 687.53,220.76 688.28,208.16 689.12,230.59 691.98,230.59 691.98,218.62 693.13,221.25 694.31,223.38 695.30,214.00 696.01,219.33 696.73,218.19 697.43,231.20 700.82,231.20 700.82,230.64 705.37,230.64 705.37,218.98 706.31,219.27 706.87,225.25 707.42,208.15 708.39,230.81 710.15,230.81 710.15,223.13 710.96,205.15 711.74,203.00 712.42,211.01 712.99,223.08 713.66,212.80 714.63,228.35 715.74,228.28 716.49,220.70 717.75,226.94 718.76,224.30 719.43,226.99 720.49,226.53 721.30,223.40 722.00,230.18 724.21,230.18 724.21,224.29 725.01,211.82 726.02,212.38 727.26,227.27 728.38,203.00 729.09,231.25 731.05,231.25 731.05,213.97 731.72,216.61 732.65,218.61 733.69,230.63 736.74,230.63 736.74,214.30 737.71,230.76 741.04,230.76 741.04,230.54 745.61,230.54 745.61,216.43 746.84,213.48 748.00,230.22 752.68,230.22 752.68,223.95 753.97,218.21 754.79,219.89 755.80,203.13 757.03,224.14 758.26,212.46 759.10,214.37 760.07,219.63 760.79,218.80 761.62,204.23 762.76,222.91 763.27,221.98 764.04,206.53 765.00,212.87 766.01,208.22 767.16,230.24 769.80,230.24 769.80,218.73 771.01,230.16 773.62,230.16 773.62,226.02 774.80,203.00 775.33,230.95 779.70,230.95 779.70,224.69 780.66,214.30 781.22,231.40 783.66,231.40 783.66,230.42 787.70,230.42 787.70,217.38 788.58,221.47 789.33,228.86 789.89,214.04 791.13,221.06 791.92,221.62 792.44,215.98 792.97,203.00 794.00,203.00 794.66,230.20 798.22,230.20 798.22,230.40 800.40,230.40 800.40,231.44 803.07,231.44 803.07,224.59 804.15,216.87 805.44,230.38 808.87,230.38 808.87,231.15 810.67,231.15 810.67,215.61 811.19,217.46 812.09,221.59 812.90,217.49 813.95,220.17 815.19,214.50 815.71,230.94 819.54,230.94 819.54,216.25 820.38,214.48 821.22,218.28 822.36,220.45 823.30,208.16 824.19,203.72 825.05,209.68 826.21,207.09 827.36,214.62 828.06,214.30 828.93,214.69 829.61,211.02 830.67,203.00 831.48,211.87 832.61,231.13 836.70,231.13 836.70,210.89 837.22,205.57 838.41,209.46 838.98,231.48 842.74,231.48 842.74,231.04 847.59,231.04 847.59,217.96 848.65,231.15 851.92,231.15 851.92,231.50 852.71,208.49 853.58,220.10 854.14,231.41 857.77,231.41 857.77,212.41 858.58,212.19 859.21,215.44 859.71,203.00 860.45,215.20 861.25,214.43 862.45,212.08 863.42,224.68 864.35,222.02 864.92,216.43 865.82,215.85 867.12,204.36 867.91,222.74 868.82,231.38 873.75,231.38 873.75,230.00 875.46,230.00 875.46,221.06 876.65,230.01 880.03,230.01 880.03,216.92 880.70,216.11 881.43,215.96 882.10,221.10 882.79,209.99 883.62,230.28 887.36,230.28 887.36,217.84 888.03,231.36 889.88,231.36 889.88,218.84" fill="none" stroke="#1e9e3e" stroke-width="0.85" stroke-linejoin="round"/><polyline points="134.50,278.00 135.50,240.00 136.00,218.62 136.57,216.45 137.66,214.56 138.64,223.37 139.27,210.71 140.56,221.97 141.50,216.85 142.02,218.34 142.78,221.75 143.73,213.16 144.24,220.90 145.54,221.52 146.19,219.36 147.41,209.21 148.55,228.00 149.17,215.48 150.25,211.30 151.49,215.90 152.65,224.95 153.52,209.80 154.76,213.47 155.52,217.30 156.15,215.75 156.90,227.94 157.96,209.79 158.93,216.19 159.60,223.40 160.16,214.19 161.24,219.97 161.79,224.71 162.51,218.68 163.42,215.33 164.12,220.84 165.19,227.04 167.29,227.04 167.29,213.42 167.86,224.98 168.38,218.28 169.53,220.10 170.34,227.99 172.37,227.99 172.37,227.02 176.02,227.02 176.02,224.01 176.61,222.35 177.72,218.05 178.94,222.07 179.82,211.05 180.85,221.37 182.05,220.26 183.02,214.23 184.29,216.74 185.27,223.35 185.88,226.55 187.95,226.55 187.95,217.72 188.96,228.00 190.25,215.79 191.11,211.12 192.25,213.21 192.95,216.51 193.48,216.92 194.07,217.13 194.72,219.29 195.39,212.80 196.40,217.95 197.63,216.30 198.54,211.71 199.08,213.88 199.65,216.50 200.45,223.05 201.18,213.75 201.98,227.53 203.83,227.53 203.83,221.03 204.34,210.71 205.17,218.73 205.73,223.44 206.53,224.43 207.18,220.88 208.00,217.11 208.59,211.99 209.16,208.98 210.21,227.49 214.43,227.49 214.43,207.19 215.33,208.37 216.05,219.39 216.93,220.88 218.10,206.07 218.78,216.69 219.83,222.27 220.79,220.86 222.09,219.66 222.93,226.11 224.22,222.48 224.82,217.86 225.86,224.40 226.78,206.00 227.89,213.89 228.80,216.52 229.67,227.60 230.49,218.34 231.11,210.61 231.63,219.32 232.54,214.87 233.36,224.21 234.24,213.97 235.01,212.40 236.19,209.89 237.19,210.15 238.19,227.20 242.18,227.20 242.18,206.00 243.20,228.00 244.29,218.29 245.51,224.42 246.63,222.43 247.72,220.24 248.33,225.43 249.18,211.87 249.84,214.74 250.40,227.23 254.83,227.23 254.83,217.17 255.87,211.24 256.59,219.01 257.69,217.35 258.79,210.81 259.92,221.23 260.53,212.89 261.26,227.34 266.15,227.34 266.15,220.78 267.08,207.54 267.82,220.56 268.71,218.72 269.87,215.98 270.89,214.15 272.06,212.90 273.07,207.42 274.20,215.14 274.95,213.49 275.67,217.96 276.26,213.54 277.02,220.28 277.88,213.12 279.10,218.48 279.95,221.02 280.53,215.10 281.18,213.71 282.32,220.34 283.47,209.46 284.24,222.46 285.48,212.51 286.58,206.00 287.77,217.31 288.50,206.00 289.54,214.55 290.81,218.90 291.69,221.94 292.29,227.03 295.05,227.03 295.05,228.00 296.25,211.24 296.94,219.43 297.75,215.15 298.51,214.82 299.08,218.08 299.92,220.65 300.69,217.43 301.46,223.85 302.58,223.02 303.42,224.67 304.03,219.56 305.14,213.25 305.96,212.58 306.95,220.55 308.12,211.71 309.41,213.73 310.58,211.81 311.12,220.21 312.42,223.97 313.65,214.11 314.39,219.36 315.17,217.13 315.79,228.00 316.81,227.85 319.16,227.85 319.16,224.28 320.10,215.24 320.76,216.98 321.92,212.76 322.53,207.72 323.14,219.68 323.68,219.17 324.48,223.83 325.56,208.60 326.79,224.27 327.79,222.68 328.60,212.21 329.41,219.22 330.56,212.97 331.68,217.70 332.36,214.69 332.88,210.05 333.54,210.69 334.55,213.54 335.61,225.22 336.77,219.54 337.74,226.79 339.62,226.79 339.62,213.91 340.89,216.12 342.11,216.11 343.27,220.31 343.99,212.32 344.82,214.83 345.69,222.61 346.40,222.40 347.07,212.15 348.00,215.82 348.66,213.94 349.51,208.77 350.29,216.91 351.17,220.25 352.05,215.88 353.03,219.85 353.71,211.36 354.75,208.27 355.42,216.76 356.62,217.76 357.37,216.70 358.14,225.02 358.98,223.54 359.58,217.75 360.57,223.11 361.80,219.64 362.70,219.47 363.44,215.56 364.68,214.08 365.65,207.25 366.57,217.41 367.60,218.74 368.60,206.00 369.41,222.18 370.22,218.00 371.37,223.09 372.63,224.39 373.45,219.60 374.03,208.34 374.99,215.91 376.08,222.64 376.68,217.88 377.44,211.61 378.70,212.21 379.64,214.42 380.25,212.30 381.28,221.40 382.05,215.40 383.04,218.01 384.30,212.36 385.44,206.00 385.96,216.23 387.13,227.51 392.13,227.51 392.13,218.29 393.06,215.48 393.91,217.75 394.45,214.12 395.72,215.06 396.94,226.87 401.20,226.87 401.20,213.30 402.02,222.17 402.58,221.32 403.23,227.11 406.48,227.11 406.48,216.05 407.39,215.66 408.22,220.69 409.08,220.77 410.36,211.64 411.21,216.45 412.35,220.51 412.95,222.73 413.47,224.05 414.43,215.99 415.28,213.49 415.96,218.84 417.22,216.14 417.96,216.18 419.24,210.09 419.94,213.80 420.73,209.83 421.67,218.76 422.54,217.16 423.45,211.79 424.55,219.41 425.52,216.36 426.39,221.87 427.38,215.99 428.44,218.38 429.05,212.58 430.07,206.00 431.22,217.11 432.45,211.04 433.58,221.06 434.61,215.84 435.48,217.84 436.73,210.58 437.37,212.02 438.13,212.89 439.37,214.02 439.94,226.55 443.17,226.55 443.17,221.24 444.05,218.42 445.33,212.79 446.01,211.99 446.64,220.13 447.72,211.33 448.45,213.67 449.62,215.35 450.27,220.01 450.95,209.59 451.64,211.90 452.27,213.88 453.15,218.42 454.21,220.01 455.38,217.68 456.05,214.41 456.55,217.60 457.20,213.74 458.37,227.82 460.94,227.82 460.94,214.49 462.20,217.44 463.35,206.00 463.90,220.62 464.78,219.17 465.92,211.28 466.44,218.34 467.04,222.02 467.92,221.40 469.04,218.10 469.73,211.03 470.74,210.22 471.37,219.48 471.95,217.45 472.85,228.00 473.84,215.06 475.11,219.11 475.63,227.46 479.64,227.46 479.64,222.98 480.75,215.94 481.79,206.00 482.52,207.99 483.11,207.94 484.33,218.65 485.07,214.60 486.28,226.76 487.23,223.13 487.92,219.71 488.77,218.73 489.79,211.25 490.82,226.84 491.46,216.18 492.51,215.77 493.35,217.66 494.28,220.90 494.85,216.42 495.88,213.93 496.95,214.70 497.64,222.44 498.46,217.52 499.28,221.57 500.37,212.73 501.06,215.47 502.32,218.49 502.94,214.32 503.68,222.23 504.74,217.24 505.39,227.69 508.22,227.69 508.22,219.23 508.93,220.26 509.62,218.66 510.45,213.04 511.62,220.07 512.77,216.72 513.73,213.07 514.29,227.89 518.89,227.89 518.89,215.01 519.46,211.36 520.47,216.94 521.15,215.61 521.99,206.00 523.21,219.32 523.76,215.13 524.38,216.38 525.05,209.48 525.59,222.03 526.33,213.23 527.41,226.29 528.37,209.90 529.27,216.31 529.79,220.83 530.61,225.29 531.27,219.76 532.00,213.59 532.65,227.05 537.56,227.05 537.56,212.55 538.60,221.20 539.43,218.29 540.24,222.10 540.98,222.76 541.61,208.74 542.89,221.59 543.41,224.18 544.51,215.90 545.76,211.93 546.35,226.81 550.37,226.81 550.37,212.66 551.49,218.18 552.19,227.38 556.94,227.38 556.94,217.23 557.53,213.52 558.36,210.56 559.57,215.69 560.09,210.87 560.78,218.57 561.83,224.26 563.05,227.93 566.59,227.93 566.59,215.49 567.79,224.52 568.40,217.01 569.29,219.36 569.96,224.97 570.91,221.68 571.65,228.00 572.18,212.20 572.75,213.24 573.54,211.28 574.54,210.58 575.12,220.24 576.13,215.11 577.00,215.13 577.89,218.78 578.91,221.51 579.57,216.02 580.54,219.54 581.30,227.87 582.96,227.87 582.96,214.60 584.21,225.49 584.87,219.39 585.46,217.49 586.44,224.91 587.53,214.32 588.76,217.97 589.83,215.19 590.76,218.30 591.88,208.03 592.97,216.47 593.47,215.87 594.49,209.96 595.46,218.45 596.74,216.05 597.95,218.68 599.06,218.62 599.90,219.86 601.08,215.99 602.28,223.91 603.25,220.36 604.14,212.76 604.89,211.88 605.97,218.34 607.04,218.86 608.05,212.23 608.60,212.00 609.19,216.13 610.29,225.35 611.50,216.30 612.13,222.68 612.85,210.88 613.66,216.10 614.27,209.55 614.82,222.00 615.52,207.15 616.17,215.79 617.02,218.71 618.20,216.89 618.86,217.44 620.02,218.25 620.94,222.60 622.21,221.97 623.13,218.23 624.05,221.53 625.22,220.23 625.86,220.85 626.46,221.96 627.22,211.76 628.22,212.60 629.51,215.71 630.21,215.65 631.47,225.56 632.14,220.04 632.79,217.82 633.78,211.29 634.75,214.32 635.45,222.53 636.60,215.63 637.47,209.58 638.23,227.77 642.36,227.77 642.36,221.49 643.20,214.53 644.40,217.66 645.10,226.74 648.86,226.74 648.86,206.00 650.12,220.69 651.35,214.13 651.94,213.39 653.10,228.00 653.99,217.56 654.94,213.13 655.92,212.49 656.73,219.04 657.65,210.31 658.69,222.28 659.53,219.22 660.76,213.74 661.27,210.09 662.48,215.56 663.65,227.75 666.06,227.75 666.06,227.72 670.96,227.72 670.96,217.88 671.66,212.05 672.81,214.18 673.52,219.80 674.02,226.78 678.27,226.78 678.27,217.36 679.48,209.29 680.00,214.87 680.75,218.32 682.03,214.57 682.86,212.37 683.73,207.98 684.55,215.15 685.70,213.70 686.91,218.63 687.63,226.35 688.43,206.17 689.13,219.27 690.14,226.64 692.29,226.64 692.29,227.99 693.06,217.52 694.31,220.26 695.21,212.61 696.40,224.16 697.14,209.98 698.26,217.90 699.51,222.15 700.43,217.93 701.64,212.94 702.24,216.48 703.26,216.48 704.38,215.84 705.43,224.77 706.39,206.81 707.32,213.17 708.07,209.25 708.76,223.15 709.84,217.58 710.73,217.24 711.67,217.73 712.49,217.36 713.25,207.05 714.25,212.17 715.40,227.68 717.48,227.68 717.48,214.18 718.52,215.89 719.06,218.69 719.64,218.49 720.48,221.66 721.63,217.56 722.58,219.66 723.66,215.28 724.38,212.61 725.49,207.91 726.01,214.43 726.77,218.76 727.60,213.71 728.21,222.89 729.21,217.14 730.48,219.28 731.10,216.46 732.14,221.99 733.04,218.16 734.15,221.79 735.20,219.89 736.23,216.68 737.40,212.01 738.38,217.13 739.25,209.15 740.08,222.27 740.70,213.85 741.37,222.00 742.19,218.47 742.83,217.14 743.66,215.91 744.78,218.54 745.44,218.89 746.04,226.86 747.68,226.86 747.68,217.32 748.45,227.57 750.80,227.57 750.80,210.84 752.09,214.96 753.02,212.04 754.08,226.07 754.77,218.87 755.65,217.11 756.46,214.49 757.34,220.66 758.35,206.00 758.98,217.95 759.83,212.75 760.57,213.76 761.74,227.81 762.30,227.72 765.28,227.72 765.28,225.32 765.94,219.56 766.73,212.83 767.34,222.99 767.94,206.00 768.45,211.05 769.18,221.55 769.74,217.91 770.61,221.93 771.72,212.59 772.80,217.49 774.06,213.83 774.62,213.35 775.29,226.99 776.20,213.71 776.99,210.65 777.90,212.98 778.83,214.65 779.54,216.44 780.37,216.06 781.57,207.92 782.40,216.17 783.10,215.61 783.65,220.82 784.68,213.86 785.71,217.46 786.65,207.30 787.81,215.60 788.90,226.71 790.44,226.71 790.44,216.06 791.59,217.06 792.68,217.75 793.69,208.75 794.80,214.29 795.42,225.62 796.66,221.45 797.74,213.36 798.29,208.29 799.24,211.04 800.04,214.73 800.82,207.22 801.60,221.79 802.58,218.72 803.44,209.67 804.39,219.22 805.15,217.47 806.29,212.84 806.91,213.04 807.63,215.41 808.53,211.46 809.26,220.05 810.43,215.29 811.38,221.81 812.37,214.78 812.96,211.86 813.93,219.93 814.51,214.34 815.44,208.47 816.42,210.44 817.43,217.09 818.26,206.00 818.92,209.83 819.79,214.34 820.62,227.29 824.42,227.29 824.42,216.84 825.64,213.70 826.91,216.44 828.11,213.65 828.73,222.50 829.92,225.72 831.04,215.82 831.62,215.72 832.71,218.51 833.48,217.13 834.70,223.19 835.76,211.34 836.44,210.72 837.34,213.51 838.51,220.48 839.45,226.27 840.58,212.15 841.29,219.13 842.22,212.83 842.88,210.98 843.74,219.74 844.78,223.29 845.94,210.39 846.75,227.59 851.40,227.59 851.40,215.02 852.63,227.38 855.52,227.38 855.52,211.91 856.18,223.13 857.01,206.65 857.92,222.99 858.53,217.53 859.79,209.23 860.59,228.00 861.18,215.28 861.81,218.68 862.78,206.97 863.67,216.68 864.93,220.37 865.58,216.93 866.28,208.97 867.43,218.54 868.20,216.31 869.03,226.25 870.06,215.12 871.24,206.97 871.87,206.75 872.66,214.35 873.46,217.62 874.40,227.72 876.89,227.72 876.89,227.44 880.74,227.44 880.74,217.86 881.82,217.56 882.33,221.89 883.40,219.84 884.22,215.88 884.77,223.87 885.45,225.67 886.10,216.68 886.92,216.42 888.21,220.04 888.87,221.08 889.47,227.98 891.00,227.98" fill="none" stroke="#1a9486" stroke-width="0.85" stroke-linejoin="round"/><polyline points="134.50,278.00 135.50,240.00 136.00,207.53 136.98,212.15 137.54,231.26 139.94,231.26 139.94,221.89 141.11,213.78 142.12,230.95 146.66,230.95 146.66,213.43 147.21,203.57 148.19,227.76 149.06,216.72 150.27,220.17 151.41,210.66 152.66,217.10 153.33,216.18 154.18,211.38 154.99,221.90 155.96,222.73 157.20,208.00 158.49,221.22 159.76,225.88 160.72,217.20 161.68,226.82 162.23,217.01 163.37,213.81 163.99,215.67 164.52,202.00 165.06,206.97 166.35,226.61 167.64,222.39 168.17,218.40 169.00,215.15 170.19,215.71 171.46,208.41 172.37,219.40 173.35,202.00 174.25,202.60 175.33,207.91 176.25,231.50 176.76,212.77 177.75,213.32 178.30,203.68 179.08,216.22 180.17,230.09 184.04,230.09 184.04,213.95 185.01,221.73 185.80,207.59 186.54,220.90 187.66,230.85 191.73,230.85 191.73,216.17 192.42,226.45 193.27,218.95 194.04,217.68 194.89,217.08 195.91,219.54 196.77,220.23 197.42,219.92 198.59,211.73 199.61,226.50 200.38,230.44 204.66,230.44 204.66,209.86 205.50,219.98 206.73,230.01 211.54,230.01 211.54,221.45 212.80,213.39 213.47,219.35 214.39,205.17 215.16,222.49 215.89,217.87 216.43,208.50 217.65,202.00 218.61,231.12 220.71,231.12 220.71,209.56 221.54,206.71 222.53,213.78 223.41,227.92 224.19,202.00 224.83,211.22 226.07,214.38 227.07,213.23 227.61,213.00 228.45,222.51 229.57,230.08 231.51,230.08 231.51,230.10 236.42,230.10 236.42,221.09 237.18,218.26 237.96,208.33 238.61,210.57 239.21,212.55 239.77,207.31 240.57,215.39 241.71,207.30 242.56,203.10 243.40,214.26 244.26,203.48 244.82,211.59 245.66,220.25 246.88,211.37 247.59,223.17 248.62,222.96 249.75,213.08 250.34,205.03 250.84,231.16 252.50,231.16 252.50,230.15 257.08,230.15 257.08,227.29 257.67,215.98 258.71,222.80 259.85,231.15 263.14,231.15 263.14,211.29 263.73,216.28 264.49,213.01 265.65,216.27 266.64,218.80 267.46,208.82 268.29,230.75 273.20,230.75 273.20,217.93 274.29,209.73 275.33,203.04 276.22,217.18 276.80,211.61 278.03,203.55 278.68,217.91 279.34,211.98 280.39,218.67 281.13,202.27 282.10,221.12 282.77,230.72 285.61,230.72 285.61,210.05 286.73,231.49 289.91,231.49 289.91,218.74 290.78,217.89 291.67,205.96 292.85,212.17 293.73,202.00 294.41,206.01 295.60,202.00 296.25,218.20 297.44,224.09 298.14,211.15 299.22,230.14 303.64,230.14 303.64,220.77 304.43,213.63 305.19,213.27 306.08,202.00 306.90,205.11 307.49,212.27 308.70,211.05 309.28,205.53 310.38,222.56 311.43,215.90 312.53,208.84 313.57,220.19 314.35,219.34 315.39,218.18 316.40,223.18 317.61,225.61 318.22,225.34 319.30,204.49 320.16,210.58 320.81,231.07 324.95,231.07 324.95,213.57 325.66,207.41 326.86,230.76 329.22,230.76 329.22,210.17 330.04,219.00 331.16,215.95 331.88,230.17 336.10,230.17 336.10,211.20 336.75,204.00 337.91,219.77 338.88,230.60 341.06,230.60 341.06,209.72 341.76,212.04 342.28,227.25 343.09,203.20 344.05,224.55 344.79,212.46 345.68,213.93 346.80,213.52 347.69,209.55 348.61,230.75 352.37,230.75 352.37,215.13 353.33,216.94 354.46,211.63 355.00,214.29 355.93,216.80 356.69,212.72 357.88,210.46 359.12,213.59 360.26,207.59 361.45,214.35 362.04,230.12 364.24,230.12 364.24,205.94 365.14,206.87 366.16,212.29 367.03,210.40 368.25,216.56 369.04,204.73 369.72,230.31 373.96,230.31 373.96,230.69 376.15,230.69 376.15,212.27 376.78,214.81 377.37,215.44 378.26,230.03 381.33,230.03 381.33,213.35 382.16,211.83 382.68,214.60 383.56,217.06 384.55,215.63 385.64,215.61 386.77,219.40 387.47,211.58 388.62,212.26 389.66,216.57 390.64,230.05 392.46,230.05 392.46,216.27 393.48,214.53 394.14,202.00 395.37,215.83 395.90,202.00 396.47,203.45 397.65,230.58 400.32,230.58 400.32,217.91 401.41,212.12 402.58,219.89 403.41,210.93 404.54,213.48 405.61,218.24 406.68,209.97 407.75,230.70 411.90,230.70 411.90,214.33 412.48,219.57 413.68,205.65 414.54,213.32 415.34,230.60 420.19,230.60 420.19,230.85 422.07,230.85 422.07,230.97 424.41,230.97 424.41,230.23 428.17,230.23 428.17,207.73 428.68,218.83 429.63,212.99 430.75,216.08 431.40,205.59 431.97,215.17 433.24,215.00 434.46,230.70 436.73,230.70 436.73,206.49 437.84,207.35 438.62,210.80 439.79,215.14 440.94,206.42 442.02,230.52 445.22,230.52 445.22,230.83 449.29,230.83 449.29,212.09 450.31,215.45 451.61,220.34 452.45,230.33 454.53,230.33 454.53,211.89 455.82,202.00 457.07,202.00 458.29,222.32 459.18,202.00 460.41,227.28 461.66,223.23 462.39,220.35 463.41,231.12 465.87,231.12 465.87,207.54 466.97,223.54 467.55,211.61 468.17,215.49 469.23,228.19 470.03,212.18 470.78,205.37 471.57,212.58 472.30,223.62 473.04,205.71 474.18,230.20 477.54,230.20 477.54,215.14 478.20,215.94 479.08,218.31 479.60,202.00 480.11,212.80 481.05,230.47 483.42,230.47 483.42,215.93 484.25,221.14 485.25,216.02 486.48,214.06 487.59,217.78 488.50,208.63 489.13,230.96 493.77,230.96 493.77,212.19 494.64,225.57 495.63,208.43 496.54,218.34 497.84,223.69 498.66,202.00 499.52,217.53 500.15,206.86 501.33,213.01 502.57,222.98 503.51,215.75 504.24,216.77 505.27,212.28 506.18,223.74 506.84,211.52 507.49,216.88 508.20,208.62 509.46,209.55 510.06,217.56 511.35,230.34 513.55,230.34 513.55,230.79 517.65,230.79 517.65,205.22 518.15,204.52 519.42,230.40 522.61,230.40 522.61,211.92 523.30,213.38 523.91,223.62 524.95,231.50 525.57,231.14 527.68,231.14 527.68,220.29 528.22,202.00 529.15,219.44 530.44,218.34 531.05,230.19 533.78,230.19 533.78,218.05 535.03,216.13 536.32,203.52 537.20,227.62 537.95,230.52 542.07,230.52 542.07,206.90 543.00,210.72 543.93,216.88 545.18,222.95 545.82,216.28 546.53,210.42 547.08,202.03 547.67,231.30 551.95,231.30 551.95,221.67 552.99,214.31 553.93,210.93 554.54,210.31 555.34,221.45 556.13,230.30 557.32,211.99 558.05,213.56 558.95,217.56 559.72,210.31 560.58,231.50 561.51,222.55 562.36,213.27 562.92,220.98 563.47,204.07 564.27,210.75 565.21,217.62 566.06,212.41 566.80,207.56 567.62,205.73 568.58,230.33 571.38,230.33 571.38,202.36 571.99,230.48 574.48,230.48 574.48,230.81 579.21,230.81 579.21,212.96 580.38,202.00 581.23,224.46 582.03,223.92 583.25,218.81 584.23,230.04 586.96,230.04 586.96,231.25 589.10,231.25 589.10,226.12 589.91,205.02 590.94,218.06 591.51,212.94 592.37,211.27 593.66,230.01 596.84,230.01 596.84,224.32 597.61,205.93 598.57,216.08 599.14,220.67 599.67,204.96 600.23,212.64 601.11,208.44 602.39,212.61 603.32,209.49 603.92,228.32 604.92,215.80 606.11,202.00 606.77,230.65 609.36,230.65 609.36,217.37 610.52,210.47 611.11,210.14 611.76,230.75 614.61,230.75 614.61,216.91 615.77,230.60 618.64,230.60 618.64,213.98 619.69,219.47 620.28,205.56 620.98,217.21 621.65,210.64 622.75,211.24 623.68,208.76 624.23,208.55 625.42,209.13 626.63,211.36 627.31,220.43 628.61,213.44 629.25,207.98 630.22,230.79 634.70,230.79 634.70,223.64 635.63,206.30 636.59,216.68 637.26,231.14 640.69,231.14 640.69,225.33 641.62,204.88 642.79,213.74 643.83,215.00 644.62,209.16 645.67,211.83 646.48,230.83 649.10,230.83 649.10,217.28 649.76,220.20 650.72,230.08 653.91,230.08 653.91,209.77 654.49,213.86 655.73,206.99 656.28,213.31 657.03,226.61 657.91,225.43 658.62,217.56 659.53,222.39 660.21,216.89 661.43,231.06 665.56,231.06 665.56,202.99 666.42,208.50 667.06,224.51 667.77,204.16 668.87,224.17 669.92,215.81 670.85,208.91 671.66,230.25 675.40,230.25 675.40,214.42 676.67,205.71 677.75,222.60 678.84,216.41 679.51,231.47 683.59,231.47 683.59,213.71 684.53,210.03 685.51,220.40 686.72,230.01 688.51,230.01 688.51,221.42 689.32,223.61 690.03,213.64 690.54,212.64 691.06,209.94 691.82,224.12 692.63,221.51 693.49,211.69 694.35,218.43 695.13,211.29 695.88,215.59 696.82,213.61 697.34,215.52 698.00,212.86 698.98,225.80 700.07,208.62 700.62,216.68 701.52,231.39 705.05,231.39 705.05,210.63 706.35,215.37 707.15,219.93 708.03,219.72 709.27,221.91 709.77,214.58 710.97,224.03 711.71,217.11 712.45,220.59 713.02,221.27 713.56,215.05 714.65,216.73 715.77,212.02 716.81,211.87 718.08,230.10 721.95,230.10 721.95,204.28 722.89,219.21 723.77,219.88 724.86,215.08 725.73,207.65 726.83,221.92 727.71,212.74 728.40,216.08 729.39,215.33 730.03,216.89 730.74,208.14 731.58,231.10 735.71,231.10 735.71,211.47 736.79,214.96 737.45,218.95 738.46,223.49 739.35,221.24 740.25,216.16 741.27,220.68 742.50,223.73 743.57,206.05 744.18,216.88 745.15,211.89 745.89,220.22 746.50,209.85 747.67,210.96 748.91,220.94 749.43,211.18 750.71,220.31 751.28,214.19 752.53,218.95 753.75,212.40 754.68,218.61 755.50,210.03 756.75,226.74 757.90,230.38 760.11,230.38 760.11,231.45 764.78,231.45 764.78,210.74 765.62,231.36 768.05,231.36 768.05,212.76 769.31,219.34 770.34,231.35 773.24,231.35 773.24,211.18 774.26,213.98 775.22,231.31 777.92,231.31 777.92,217.60 778.69,230.47 782.09,230.47 782.09,211.07 782.98,219.01 783.83,210.48 784.46,214.39 785.35,202.00 786.15,212.67 786.94,230.82 790.12,230.82 790.12,206.45 791.19,216.37 792.47,231.30 794.59,231.30 794.59,213.81 795.52,216.82 796.70,216.29 797.50,231.13 800.58,231.13 800.58,213.71 801.72,207.67 802.66,231.34 804.47,231.34 804.47,231.25 806.96,231.25 806.96,202.00 807.48,213.59 808.39,212.11 809.06,213.62 810.17,204.27 810.68,202.00 811.36,209.80 811.96,206.00 812.99,231.09 817.29,231.09 817.29,216.87 818.02,221.64 818.87,226.91 819.79,211.37 820.90,219.77 821.64,231.39 825.69,231.39 825.69,202.00 826.53,223.97 827.11,208.63 828.37,210.06 829.24,206.21 830.14,208.21 831.03,218.39 831.77,225.47 832.33,203.66 832.99,217.87 833.59,213.80 834.24,213.90 835.50,208.69 836.53,211.68 837.57,230.66 840.78,230.66 840.78,231.18 843.39,231.18 843.39,207.45 844.29,207.43 845.21,222.16 846.00,217.50 846.77,230.06 848.83,230.06 848.83,231.28 852.36,231.28 852.36,211.57 852.91,204.37 853.59,217.61 854.29,218.47 855.45,218.39 856.51,231.38 860.95,231.38 860.95,219.96 862.01,219.45 862.76,230.27 867.05,230.27 867.05,231.12 869.94,231.12 869.94,213.14 871.05,215.16 871.76,212.29 872.60,222.34 873.84,206.09 874.63,213.88 875.43,202.00 876.42,214.06 877.44,213.94 878.09,202.00 879.30,216.90 880.50,220.67 881.66,225.30 882.77,216.76 883.44,223.80 884.40,210.31 885.62,218.67 886.42,204.77 887.34,217.96 888.62,214.31 889.28,208.36 890.44,216.54" fill="none" stroke="#3ede72" stroke-width="0.75" stroke-linejoin="round"/><polyline points="134.50,278.00 135.50,240.00 136.00,222.00 136.62,221.03 137.45,220.65 138.12,209.91 138.84,220.73 140.09,220.15 141.23,219.50 142.23,222.04 143.42,223.83 144.45,221.54 145.10,227.88 146.29,224.22 147.03,208.71 148.21,213.46 149.04,215.31 149.78,219.25 150.32,228.44 152.80,228.44 152.80,213.49 154.10,218.82 154.93,215.30 155.71,215.02 156.47,219.90 157.02,216.70 158.13,218.35 158.77,222.47 159.31,227.87 160.39,210.43 160.91,226.44 161.74,216.17 162.73,217.12 163.59,221.14 164.39,217.66 164.93,218.60 166.06,217.43 167.34,220.19 168.01,227.58 170.10,227.58 170.10,218.85 170.99,219.17 172.29,209.52 173.12,216.43 174.00,216.84 174.84,218.73 176.05,216.73 176.75,218.01 177.42,219.89 177.96,215.98 178.91,209.19 179.93,224.16 181.03,220.87 182.23,219.90 183.47,213.05 184.48,210.53 185.40,216.45 186.64,214.36 187.20,225.22 187.74,216.23 188.34,217.12 188.97,216.47 189.93,221.15 190.43,216.45 190.94,224.80 192.07,224.06 193.01,220.23 193.77,225.12 194.89,216.86 195.42,217.81 196.31,215.87 197.10,216.28 198.02,228.76 202.42,228.76 202.42,213.28 203.55,216.68 204.23,220.19 204.82,217.53 206.03,208.96 207.15,221.98 208.36,214.93 209.20,227.01 209.83,219.27 210.73,220.54 211.66,217.87 212.41,217.49 213.30,216.03 213.99,218.20 214.78,224.99 215.82,217.37 216.57,207.23 217.32,220.26 218.45,215.43 219.56,218.98 220.59,220.42 221.74,219.38 222.96,213.87 223.96,215.87 224.78,221.12 225.54,224.59 226.06,228.92 230.46,228.92 230.46,222.36 231.09,206.41 231.99,225.82 233.26,214.79 234.28,217.79 235.45,211.07 236.69,209.34 237.75,211.79 238.44,206.26 239.66,206.00 240.48,216.92 240.99,223.03 241.92,214.43 243.18,214.86 243.81,229.00 245.04,215.57 245.79,217.82 247.03,221.54 248.16,218.31 249.41,222.21 250.55,206.00 251.26,214.31 251.88,222.28 252.48,218.86 253.77,224.00 254.86,213.05 256.12,216.78 257.18,211.71 258.12,223.46 259.01,225.95 259.64,217.81 260.69,222.98 261.45,216.94 262.65,228.94 264.68,228.94 264.68,218.55 265.86,218.72 266.74,224.31 267.39,225.83 268.63,217.82 269.43,221.34 270.02,212.25 271.25,211.56 272.23,228.45 274.62,228.45 274.62,209.50 275.65,223.55 276.42,213.73 277.64,223.44 278.70,213.09 279.62,216.76 280.69,219.64 281.62,218.00 282.18,221.35 283.41,228.29 284.57,227.28 285.07,213.02 285.59,213.12 286.11,220.90 287.32,221.73 288.48,212.79 289.00,222.39 290.28,220.74 291.34,214.80 292.40,218.43 293.61,218.85 294.33,212.14 295.50,221.87 296.50,216.77 297.21,217.91 298.44,218.11 299.73,215.87 300.31,224.78 301.52,214.97 302.11,206.00 302.74,222.19 303.92,222.13 304.87,217.25 306.10,219.80 307.17,228.65 309.31,228.65 309.31,215.42 309.83,211.27 310.82,229.00 312.11,220.73 313.37,229.00 314.65,228.86 318.62,228.86 318.62,219.30 319.28,216.04 320.16,213.41 321.26,216.80 322.36,227.73 324.63,227.73 324.63,215.06 325.63,216.53 326.42,221.06 327.20,216.89 327.87,227.79 332.26,227.79 332.26,223.43 332.79,215.79 333.87,221.10 334.74,221.73 335.60,226.60 336.68,219.63 337.27,208.10 338.16,214.20 339.08,212.92 340.06,213.52 340.58,218.85 341.11,215.41 341.84,215.21 342.48,224.52 343.52,229.00 344.22,214.99 345.15,211.37 345.81,225.44 346.41,206.00 347.02,209.61 348.00,228.73 352.56,228.73 352.56,226.18 353.54,214.86 354.25,228.21 358.78,228.21 358.78,213.99 359.84,218.70 361.05,217.68 361.97,218.18 363.15,216.13 363.99,218.83 364.71,226.87 365.38,215.44 366.61,218.42 367.35,218.03 368.19,213.29 369.19,212.27 370.13,222.92 370.74,220.11 371.85,215.86 372.82,221.41 373.83,220.81 374.94,217.19 375.78,212.65 376.70,224.52 377.40,220.75 378.42,223.04 379.39,222.34 380.43,229.00 381.70,215.89 382.45,221.69 383.20,213.87 384.00,218.42 384.75,219.31 385.92,213.73 386.50,218.52 387.69,228.48 391.14,228.48 391.14,218.11 391.83,215.08 392.68,220.31 393.42,218.57 393.96,228.99 396.98,228.99 396.98,215.83 397.93,215.44 398.97,228.05 403.13,228.05 403.13,221.86 404.02,210.61 404.84,221.32 405.65,222.04 406.25,218.70 407.34,221.25 408.37,215.08 409.19,226.99 410.39,224.78 411.56,210.70 412.76,221.15 413.76,217.02 414.29,222.41 415.29,218.24 416.17,221.18 416.96,209.61 417.56,222.76 418.07,218.48 419.16,212.39 419.77,217.25 420.72,225.91 422.01,221.42 423.25,206.00 424.03,218.31 425.25,209.22 426.28,215.68 427.30,215.78 427.81,220.92 428.35,214.89 429.47,221.91 430.43,209.29 430.97,210.55 431.98,220.90 433.12,215.67 433.62,215.97 434.76,223.72 435.54,218.51 436.50,221.92 437.51,215.70 438.21,220.94 439.28,214.54 440.09,218.07 440.90,223.80 442.08,224.70 443.16,211.04 444.22,222.68 444.81,207.85 445.44,222.03 446.63,213.40 447.58,215.47 448.09,214.94 449.04,215.41 450.19,229.00 451.31,225.46 452.12,216.19 453.14,221.88 454.07,227.64 454.82,215.85 455.74,218.54 456.90,221.49 457.87,226.44 459.10,228.10 462.69,228.10 462.69,207.63 463.47,218.56 464.12,220.93 465.23,217.33 465.76,217.26 466.68,212.46 467.32,208.77 468.18,217.20 469.41,218.34 470.30,208.96 470.89,217.90 472.12,207.22 473.01,222.16 473.95,220.49 474.94,214.89 475.75,217.84 476.50,215.56 477.38,219.80 478.12,210.90 478.65,221.01 479.19,221.37 479.72,226.70 480.42,218.34 480.97,215.42 481.80,215.23 482.76,221.89 483.36,226.51 484.44,217.38 485.30,218.62 486.41,215.76 487.41,218.25 488.44,216.22 488.98,216.45 490.26,228.11 493.51,228.11 493.51,226.11 494.75,227.70 497.67,227.70 497.67,219.57 498.91,211.83 500.11,217.53 501.18,226.13 501.82,228.01 504.22,228.01 504.22,224.39 505.06,220.52 505.64,226.05 506.36,223.80 506.96,219.08 507.82,212.03 508.45,213.92 509.23,217.62 510.24,210.81 511.42,217.18 512.16,214.12 512.97,207.79 514.07,214.79 514.87,224.18 515.65,212.79 516.94,213.70 517.78,214.57 518.75,213.17 519.94,220.09 521.15,209.95 522.40,222.70 523.03,221.47 524.01,214.17 525.27,220.86 526.18,220.42 526.97,221.93 527.91,212.73 528.90,219.14 529.50,209.77 530.11,223.30 530.85,221.00 531.80,211.41 532.48,211.43 533.09,227.74 536.49,227.74 536.49,220.65 537.62,212.42 538.68,208.84 539.84,223.79 540.58,219.48 541.66,218.87 542.22,220.94 543.37,219.78 544.67,220.06 545.63,221.63 546.40,224.65 547.27,222.70 548.56,214.46 549.83,218.45 551.12,218.17 552.25,212.98 553.27,223.99 554.20,209.75 554.76,214.95 555.66,221.30 556.61,213.22 557.65,214.75 558.84,220.50 559.91,221.48 560.75,217.73 561.95,217.71 563.05,221.72 563.69,216.67 564.84,210.77 565.72,214.73 566.40,216.46 567.04,219.97 568.14,221.41 568.88,209.59 570.07,214.49 570.64,214.06 571.84,219.16 573.08,211.39 574.21,220.42 575.43,215.99 576.08,220.58 577.16,212.69 578.45,218.40 579.60,218.86 580.22,217.33 581.14,214.68 582.17,214.78 583.14,214.91 584.30,225.88 584.85,219.56 585.73,220.60 586.33,225.28 587.43,207.12 588.51,216.71 589.27,226.76 590.48,224.08 591.10,224.90 592.30,217.67 593.38,222.98 594.14,217.65 595.15,226.28 596.37,227.92 600.09,227.92 600.09,221.52 601.36,217.48 602.40,213.85 603.25,219.84 604.40,219.93 605.53,210.85 606.69,216.77 607.67,220.33 608.46,218.92 609.02,221.51 610.19,217.71 611.17,220.68 611.82,220.49 612.40,218.16 612.96,219.08 613.54,222.07 614.34,215.78 615.21,211.96 616.17,218.59 617.47,221.08 618.48,221.54 619.62,218.29 620.60,218.80 621.15,219.50 621.85,210.53 622.47,214.05 623.58,210.94 624.71,219.13 625.63,223.08 626.67,223.38 627.73,214.15 628.83,221.03 629.55,211.17 630.85,228.00 634.01,228.00 634.01,225.34 634.97,226.02 636.19,216.66 637.47,219.13 638.52,212.19 639.77,215.38 640.61,212.80 641.87,220.24 642.45,210.93 643.23,216.18 644.14,213.59 645.06,214.58 646.18,222.02 647.22,224.13 648.21,217.81 649.34,215.37 650.50,217.57 651.58,220.56 652.48,211.31 653.22,206.12 653.82,227.76 656.44,227.76 656.44,213.61 657.04,220.64 657.77,214.65 658.32,214.77 659.26,216.68 660.32,219.46 661.37,228.12 662.14,212.52 663.41,223.19 664.27,213.22 664.79,218.12 665.70,212.23 666.85,226.63 667.97,228.47 672.20,228.47 672.20,216.82 672.84,222.50 673.82,212.69 675.07,218.33 676.16,221.40 676.92,215.18 677.96,216.89 678.55,213.06 679.75,213.98 680.40,226.79 681.36,218.05 682.61,217.13 683.51,228.06 686.78,228.06 686.78,218.94 687.97,220.44 688.87,222.07 689.73,214.21 690.42,216.77 691.29,219.37 692.49,211.36 693.76,225.61 694.40,215.94 695.64,225.02 696.37,223.12 697.34,221.01 698.43,209.96 699.04,213.53 699.77,225.80 700.99,212.15 702.17,219.11 703.21,227.99 705.62,227.99 705.62,208.41 706.57,217.15 707.19,229.00 707.94,216.83 708.91,216.94 709.61,214.93 710.26,215.62 711.21,216.14 711.89,219.67 712.71,220.59 713.48,212.27 714.41,214.11 715.59,218.52 716.15,215.26 716.90,212.76 717.51,207.35 718.50,213.21 719.03,211.18 719.78,215.17 720.85,229.00 721.45,216.24 722.38,219.84 723.52,218.24 724.80,211.55 725.78,216.31 726.93,215.38 727.74,222.47 728.37,217.88 729.34,214.85 730.17,217.99 730.79,222.69 731.61,216.00 732.16,215.07 732.93,220.36 733.96,218.01 734.50,225.35 735.04,221.75 735.92,220.17 736.75,227.01 737.51,216.61 738.60,221.59 739.72,211.67 740.59,228.20 741.13,214.72 742.01,219.22 742.79,213.81 743.43,219.78 744.35,216.42 745.09,216.34 745.97,213.18 746.96,219.73 747.71,217.37 748.27,228.09 750.55,228.09 750.55,218.73 751.64,217.46 752.29,213.78 753.23,211.46 753.78,226.06 754.37,215.48 755.09,217.45 756.07,219.96 757.04,215.07 757.69,218.34 758.59,224.69 759.77,217.15 760.78,229.00 761.46,210.48 762.37,213.69 763.22,219.59 764.04,216.53 765.12,220.92 765.96,223.05 766.85,220.04 767.51,213.02 768.26,217.13 769.50,217.50 770.21,217.27 771.29,227.92 774.78,227.92 774.78,217.59 776.04,220.74 776.63,223.68 777.47,223.31 778.32,228.49 783.25,228.49 783.25,220.41 784.52,213.77 785.38,212.92 786.21,211.48 787.00,210.73 787.62,218.87 788.64,217.88 789.55,217.22 790.32,227.83 794.68,227.83 794.68,212.16 795.61,211.81 796.69,228.46 798.28,228.46 798.28,223.75 799.52,214.17 800.16,228.96 801.27,227.89 804.65,227.89 804.65,220.81 805.87,222.80 807.04,219.30 808.02,213.61 808.74,222.74 809.31,222.08 810.32,223.37 811.34,213.11 812.50,216.51 813.62,219.33 814.75,214.23 815.48,221.95 816.68,212.16 817.96,222.97 818.91,214.53 819.56,216.80 820.52,221.37 821.46,220.64 822.19,210.59 822.99,213.27 824.05,218.05 824.76,217.70 825.35,228.43 828.82,228.43 828.82,220.56 830.04,214.41 831.31,225.99 831.96,228.58 835.90,228.58 835.90,221.40 836.49,218.21 837.53,223.86 838.31,212.64 838.85,210.22 839.50,212.79 840.51,210.89 841.44,219.12 842.29,222.68 843.13,222.55 844.38,218.23 844.98,224.14 845.65,214.51 846.27,222.05 846.88,220.91 847.66,219.36 848.74,215.43 849.46,222.08 850.51,219.62 851.77,216.50 853.02,206.00 853.87,215.97 855.10,217.71 855.72,228.90 856.33,228.94 858.91,228.94 858.91,219.92 859.71,225.23 860.48,214.31 861.59,213.34 862.81,220.49 863.60,216.03 864.16,212.27 864.81,217.25 865.50,219.42 866.03,212.94 866.58,217.46 867.26,227.14 868.47,213.40 869.15,219.88 869.83,229.00 870.82,217.34 871.88,212.33 873.00,219.38 873.57,225.42 874.64,211.65 875.31,222.46 876.22,208.31 877.10,216.76 878.32,222.34 879.17,227.95 881.12,227.95 881.12,222.79 881.88,222.03 882.40,219.20 883.18,219.66 884.35,222.01 885.27,218.23 885.79,229.00 886.71,224.07 887.30,215.11 888.28,228.08 891.00,228.08" fill="none" stroke="#24a8a0" stroke-width="0.8" stroke-linejoin="round"/><polyline points="134.50,279.00 136.00,215.00 138.00,203.00 141.00,199.00 141.70,201.50 143.71,201.50 144.41,199.00 145.11,198.00 146.43,198.00 147.13,199.00 147.83,197.50 149.74,197.50 150.44,199.00 151.14,201.50 153.02,201.50 153.72,199.00 153.72,199.00 156.94,199.00 156.94,199.00 162.18,199.00 162.88,196.50 164.37,196.50 165.07,199.00 165.77,198.00 167.37,198.00 168.07,199.00 168.77,197.50 170.32,197.50 171.02,199.00 171.72,196.50 172.14,196.50 172.84,199.00 172.84,199.00 175.81,199.00 175.81,199.00 179.66,199.00 180.36,197.50 181.70,197.50 182.40,199.00 183.10,198.00 183.41,198.00 184.11,199.00 184.11,199.00 188.73,199.00 189.43,201.50 191.72,201.50 192.42,199.00 193.12,196.00 193.93,196.00 194.63,199.00 195.33,201.50 196.21,201.50 196.91,199.00 196.91,199.00 201.97,199.00 202.67,200.50 203.75,200.50 204.45,199.00 205.15,196.00 205.45,196.00 206.15,199.00 206.15,199.00 211.79,199.00 212.49,196.00 213.58,196.00 214.28,199.00 214.28,199.00 218.80,199.00 219.50,200.50 220.47,200.50 221.17,199.00 221.87,196.50 224.10,196.50 224.80,199.00 225.50,196.50 226.07,196.50 226.77,199.00 227.47,196.50 227.89,196.50 228.59,199.00 229.29,197.50 230.96,197.50 231.66,199.00 231.66,199.00 235.69,199.00 236.39,197.50 237.53,197.50 238.23,199.00 238.93,198.00 240.07,198.00 240.77,199.00 240.77,199.00 243.85,199.00 244.55,201.50 245.46,201.50 246.16,199.00 246.86,197.50 247.53,197.50 248.23,199.00 248.93,201.50 250.52,201.50 251.22,199.00 251.22,199.00 257.17,199.00 257.17,199.00 260.21,199.00 260.91,200.50 262.87,200.50 263.57,199.00 264.27,196.50 264.75,196.50 265.45,199.00 266.15,197.50 266.48,197.50 267.18,199.00 267.88,201.50 269.08,201.50 269.78,199.00 270.48,198.00 272.45,198.00 273.15,199.00 273.15,199.00 276.69,199.00 277.39,200.50 279.51,200.50 280.21,199.00 280.91,197.50 282.66,197.50 283.36,199.00 283.36,199.00 287.88,199.00 288.58,196.00 290.78,196.00 291.48,199.00 292.18,201.50 292.63,201.50 293.33,199.00 293.33,199.00 295.77,199.00 296.47,200.50 297.25,200.50 297.95,199.00 298.65,200.50 299.79,200.50 300.49,199.00 301.19,198.00 302.08,198.00 302.78,199.00 302.78,199.00 307.66,199.00 307.66,199.00 310.57,199.00 311.27,201.50 312.80,201.50 313.50,199.00 313.50,199.00 319.17,199.00 319.17,199.00 321.24,199.00 321.24,199.00 325.02,199.00 325.02,199.00 327.72,199.00 328.42,201.50 330.67,201.50 331.37,199.00 331.37,199.00 333.92,199.00 334.62,200.50 336.24,200.50 336.94,199.00 337.64,201.50 339.83,201.50 340.53,199.00 341.23,196.50 342.48,196.50 343.18,199.00 343.88,200.50 346.11,200.50 346.81,199.00 346.81,199.00 351.35,199.00 352.05,196.00 352.97,196.00 353.67,199.00 353.67,199.00 355.96,199.00 356.66,200.50 358.44,200.50 359.14,199.00 359.84,196.00 361.61,196.00 362.31,199.00 362.31,199.00 368.16,199.00 368.86,196.50 370.53,196.50 371.23,199.00 371.93,198.00 374.12,198.00 374.82,199.00 374.82,199.00 378.82,199.00 378.82,199.00 383.47,199.00 384.17,196.50 385.69,196.50 386.39,199.00 386.39,199.00 390.95,199.00 391.65,198.00 393.40,198.00 394.10,199.00 394.80,196.00 396.49,196.00 397.19,199.00 397.89,198.00 399.87,198.00 400.57,199.00 400.57,199.00 405.57,199.00 405.57,199.00 409.97,199.00 410.67,197.50 412.89,197.50 413.59,199.00 413.59,199.00 418.71,199.00 419.41,198.00 420.22,198.00 420.92,199.00 420.92,199.00 424.13,199.00 424.83,197.50 426.16,197.50 426.86,199.00 427.56,200.50 429.18,200.50 429.88,199.00 430.58,197.50 431.54,197.50 432.24,199.00 432.94,197.50 434.50,197.50 435.20,199.00 435.90,197.50 437.96,197.50 438.66,199.00 439.36,201.50 441.51,201.50 442.21,199.00 442.21,199.00 444.74,199.00 445.44,196.50 447.17,196.50 447.87,199.00 448.57,200.50 450.51,200.50 451.21,199.00 451.21,199.00 455.10,199.00 455.80,198.00 456.86,198.00 457.56,199.00 458.26,196.00 459.19,196.00 459.89,199.00 460.59,201.50 461.80,201.50 462.50,199.00 462.50,199.00 464.62,199.00 465.32,196.50 466.98,196.50 467.68,199.00 467.68,199.00 471.10,199.00 471.80,201.50 472.13,201.50 472.83,199.00 472.83,199.00 476.65,199.00 476.65,199.00 481.97,199.00 481.97,199.00 484.54,199.00 484.54,199.00 489.05,199.00 489.75,196.00 491.12,196.00 491.82,199.00 492.52,200.50 494.74,200.50 495.44,199.00 496.14,197.50 498.09,197.50 498.79,199.00 498.79,199.00 503.64,199.00 504.34,201.50 506.07,201.50 506.77,199.00 506.77,199.00 509.86,199.00 510.56,196.00 512.76,196.00 513.46,199.00 514.16,197.50 515.24,197.50 515.94,199.00 516.64,197.50 517.12,197.50 517.82,199.00 518.52,196.00 519.59,196.00 520.29,199.00 520.99,197.50 522.54,197.50 523.24,199.00 523.94,198.00 525.34,198.00 526.04,199.00 526.74,201.50 528.64,201.50 529.34,199.00 530.04,198.00 530.99,198.00 531.69,199.00 532.39,196.50 534.14,196.50 534.84,199.00 535.54,196.00 537.68,196.00 538.38,199.00 538.38,199.00 541.35,199.00 542.05,196.50 544.31,196.50 545.01,199.00 545.71,200.50 546.53,200.50 547.23,199.00 547.93,196.50 548.93,196.50 549.63,199.00 549.63,199.00 553.39,199.00 554.09,200.50 555.37,200.50 556.07,199.00 556.07,199.00 561.30,199.00 561.30,199.00 566.50,199.00 566.50,199.00 569.84,199.00 570.54,197.50 571.78,197.50 572.48,199.00 573.18,196.00 574.52,196.00 575.22,199.00 575.92,198.00 578.11,198.00 578.81,199.00 579.51,196.00 579.98,196.00 580.68,199.00 580.68,199.00 584.79,199.00 584.79,199.00 589.71,199.00 590.41,201.50 591.73,201.50 592.43,199.00 593.13,200.50 594.06,200.50 594.76,199.00 595.46,201.50 596.17,201.50 596.87,199.00 597.57,201.50 598.92,201.50 599.62,199.00 600.32,197.50 601.44,197.50 602.14,199.00 602.14,199.00 604.16,199.00 604.86,201.50 607.10,201.50 607.80,199.00 608.50,198.00 609.89,198.00 610.59,199.00 611.29,196.50 612.57,196.50 613.27,199.00 613.97,196.50 616.14,196.50 616.84,199.00 617.54,198.00 618.37,198.00 619.07,199.00 619.77,197.50 620.75,197.50 621.45,199.00 622.15,198.00 623.50,198.00 624.20,199.00 624.20,199.00 627.88,199.00 627.88,199.00 630.92,199.00 631.62,196.50 631.99,196.50 632.69,199.00 632.69,199.00 634.74,199.00 634.74,199.00 639.63,199.00 639.63,199.00 643.63,199.00 644.33,201.50 644.88,201.50 645.58,199.00 646.28,200.50 648.01,200.50 648.71,199.00 649.41,198.00 649.76,198.00 650.46,199.00 651.16,201.50 652.69,201.50 653.39,199.00 654.09,196.00 655.46,196.00 656.16,199.00 656.16,199.00 659.02,199.00 659.72,201.50 661.74,201.50 662.44,199.00 662.44,199.00 667.40,199.00 668.10,197.50 669.03,197.50 669.73,199.00 670.43,197.50 671.17,197.50 671.87,199.00 672.57,196.50 673.13,196.50 673.83,199.00 673.83,199.00 678.74,199.00 678.74,199.00 681.13,199.00 681.83,198.00 683.22,198.00 683.92,199.00 684.62,197.50 685.72,197.50 686.42,199.00 687.12,196.50 687.61,196.50 688.31,199.00 689.01,200.50 691.14,200.50 691.84,199.00 692.54,196.50 694.25,196.50 694.95,199.00 695.65,200.50 696.95,200.50 697.65,199.00 698.35,197.50 700.26,197.50 700.96,199.00 701.66,196.50 702.03,196.50 702.73,199.00 703.43,201.50 705.54,201.50 706.24,199.00 706.94,197.50 707.61,197.50 708.31,199.00 708.31,199.00 713.67,199.00 714.37,196.00 714.86,196.00 715.56,199.00 715.56,199.00 721.37,199.00 722.07,196.50 723.02,196.50 723.72,199.00 724.42,201.50 725.43,201.50 726.13,199.00 726.13,199.00 729.62,199.00 730.32,196.50 732.31,196.50 733.01,199.00 733.01,199.00 736.83,199.00 737.53,198.00 739.67,198.00 740.37,199.00 741.07,196.50 742.40,196.50 743.10,199.00 743.10,199.00 748.67,199.00 749.37,196.00 751.42,196.00 752.12,199.00 752.82,198.00 754.26,198.00 754.96,199.00 754.96,199.00 759.30,199.00 760.00,200.50 760.86,200.50 761.56,199.00 761.56,199.00 766.53,199.00 766.53,199.00 772.26,199.00 772.26,199.00 775.58,199.00 776.28,200.50 778.12,200.50 778.82,199.00 779.52,198.00 780.23,198.00 780.93,199.00 780.93,199.00 786.12,199.00 786.82,196.50 787.14,196.50 787.84,199.00 788.54,196.00 790.65,196.00 791.35,199.00 791.35,199.00 794.44,199.00 795.14,200.50 796.12,200.50 796.82,199.00 797.52,201.50 798.18,201.50 798.88,199.00 798.88,199.00 802.94,199.00 803.64,197.50 805.34,197.50 806.04,199.00 806.74,201.50 807.09,201.50 807.79,199.00 808.49,196.00 809.26,196.00 809.96,199.00 810.66,201.50 811.06,201.50 811.76,199.00 811.76,199.00 815.26,199.00 815.26,199.00 818.27,199.00 818.97,201.50 820.35,201.50 821.05,199.00 821.75,201.50 823.18,201.50 823.88,199.00 824.58,196.00 825.77,196.00 826.47,199.00 827.17,201.50 828.67,201.50 829.37,199.00 830.07,196.50 831.14,196.50 831.84,199.00 832.54,198.00 833.78,198.00 834.48,199.00 834.48,199.00 838.47,199.00 839.17,196.50 840.33,196.50 841.03,199.00 841.73,200.50 843.08,200.50 843.78,199.00 844.48,200.50 845.84,200.50 846.54,199.00 847.24,200.50 848.66,200.50 849.36,199.00 849.36,199.00 854.23,199.00 854.23,199.00 856.28,199.00 856.28,199.00 858.46,199.00 858.46,199.00 863.47,199.00 864.17,200.50 865.97,200.50 866.67,199.00 866.67,199.00 872.63,199.00 873.33,196.50 875.22,196.50 875.92,199.00 875.92,199.00 880.80,199.00 880.80,199.00 885.82,199.00 885.82,199.00 888.21,199.00 888.91,198.00 889.50,198.00 890.20,199.00 890.90,197.50 891.00,197.50 891.00,199.00" fill="none" stroke="#d0d0d0" stroke-width="0.75" stroke-linejoin="round"/><polyline points="134.20,273.50 136.00,275.60 146.30,275.60 146.30,277.00 154.00,277.00 156.00,279.90 158.00,277.00 164.80,277.00 166.50,279.50 180.40,279.10 183.00,276.30 186.00,279.00 187.00,281.70 201.70,281.70 204.00,279.00 208.00,281.70 257.80,281.30 258.00,282.40 280.50,282.40 283.00,279.50 287.00,282.80 408.80,282.90 408.80,285.30 450.20,285.30 450.20,282.90 503.50,282.90 503.50,285.30 578.70,285.30 578.70,282.90 629.60,282.90 629.60,285.30 716.60,285.30 716.60,282.90 774.80,282.70 776.50,285.60 891.00,285.60" fill="none" stroke="#c8c048" stroke-width="1" stroke-linejoin="round"/><polyline points="134.20,279.10 152.70,279.10 152.70,281.30 221.60,281.30 223.00,285.30 281.20,285.30 282.50,286.50 394.60,286.50 395.50,288.20 891.00,288.20" fill="none" stroke="#c0c0c0" stroke-width="1" stroke-linejoin="round"/></svg><div style="position:absolute;left:271.3px;top:136.1px;width:6.6px;height:6.6px;background:#f4f4f4"></div><svg style="position:absolute;left:271.3px;top:136.1px" width="7" height="7"><path d="M1.3 3.3 L2.8 4.9 L5.5 1.5" fill="none" stroke="#222" stroke-width="1.0"/></svg><div style="position:absolute;left:326.8px;top:136.1px;width:6.6px;height:6.6px;background:#f4f4f4"></div><svg style="position:absolute;left:326.8px;top:136.1px" width="7" height="7"><path d="M1.3 3.3 L2.8 4.9 L5.5 1.5" fill="none" stroke="#222" stroke-width="1.0"/></svg><div style="position:absolute;left:354.1px;top:136.1px;width:6.6px;height:6.6px;background:#f4f4f4"></div><svg style="position:absolute;left:354.1px;top:136.1px" width="7" height="7"><path d="M1.3 3.3 L2.8 4.9 L5.5 1.5" fill="none" stroke="#222" stroke-width="1.0"/></svg><div style="position:absolute;left:407px;top:136.1px;width:6.6px;height:6.6px;background:#f4f4f4"></div><svg style="position:absolute;left:407px;top:136.1px" width="7" height="7"><path d="M1.3 3.3 L2.8 4.9 L5.5 1.5" fill="none" stroke="#222" stroke-width="1.0"/></svg><div style="position:absolute;left:459.6px;top:136.1px;width:6.6px;height:6.6px;background:#f4f4f4"></div><svg style="position:absolute;left:459.6px;top:136.1px" width="7" height="7"><path d="M1.3 3.3 L2.8 4.9 L5.5 1.5" fill="none" stroke="#222" stroke-width="1.0"/></svg><div style="position:absolute;left:512.1px;top:136.1px;width:6.6px;height:6.6px;background:#f4f4f4"></div><svg style="position:absolute;left:512.1px;top:136.1px" width="7" height="7"><path d="M1.3 3.3 L2.8 4.9 L5.5 1.5" fill="none" stroke="#222" stroke-width="1.0"/></svg><div style="position:absolute;left:565px;top:136.1px;width:6.6px;height:6.6px;background:#f4f4f4"></div><svg style="position:absolute;left:565px;top:136.1px" width="7" height="7"><path d="M1.3 3.3 L2.8 4.9 L5.5 1.5" fill="none" stroke="#222" stroke-width="1.0"/></svg><div style="position:absolute;left:75.3px;top:608px;width:46.9px;height:13.7px;background:#000;"></div><div style="position:absolute;left:179.5px;top:607.8px;width:82px;height:13.7px;background:#000;"></div><div style="position:absolute;left:324.6px;top:607.8px;width:46.6px;height:13.7px;background:#000;"></div><div style="position:absolute;left:11.2px;top:630px;width:41.3px;height:11.2px;background:#f5f5f5;border:0.6px solid #eeeeee;border-radius:2px;box-sizing:border-box"></div><div style="position:absolute;left:58.8px;top:630px;width:41.3px;height:11.2px;background:#fdfdfd;border:0.6px solid #e2e2e2;border-radius:2px;box-sizing:border-box"></div><div style="position:absolute;left:116.6px;top:630px;width:41.2px;height:11.2px;background:#fdfdfd;border:0.6px solid #e2e2e2;border-radius:2px;box-sizing:border-box"></div><div style="position:absolute;left:163.7px;top:630px;width:41.4px;height:11.2px;background:#fdfdfd;border:0.6px solid #e2e2e2;border-radius:2px;box-sizing:border-box"></div><div style="position:absolute;left:221.9px;top:630px;width:41.2px;height:11.2px;background:#fdfdfd;border:0.6px solid #e2e2e2;border-radius:2px;box-sizing:border-box"></div><div style="position:absolute;left:268.7px;top:630px;width:42.0px;height:11.2px;background:#fdfdfd;border:0.6px solid #e2e2e2;border-radius:2px;box-sizing:border-box"></div><div style="position:absolute;left:880.2px;top:630px;width:40.4px;height:11.2px;background:#f5f5f5;border:0.6px solid #eeeeee;border-radius:2px;box-sizing:border-box"></div><div style="position:absolute;left:953px;top:0px;width:315px;height:647px;background:#ffffff;"></div><div style="position:absolute;left:968.5px;top:0.0px;width:298.5px;height:9.95px;background:#e4e4e4;"></div><div style="position:absolute;left:968.5px;top:9.95px;width:298.5px;height:9.95px;background:#f2f2f2;"></div><div style="position:absolute;left:968.5px;top:29.849999999999998px;width:298.5px;height:9.95px;background:#f2f2f2;"></div><div style="position:absolute;left:968.5px;top:49.75px;width:298.5px;height:9.95px;background:#f2f2f2;"></div><div style="position:absolute;left:968.5px;top:69.64999999999999px;width:298.5px;height:9.95px;background:#f2f2f2;"></div><div style="position:absolute;left:968.5px;top:89.55px;width:298.5px;height:9.95px;background:#f2f2f2;"></div><div style="position:absolute;left:968.5px;top:109.44999999999999px;width:298.5px;height:9.95px;background:#f2f2f2;"></div><div style="position:absolute;left:968.5px;top:129.35px;width:298.5px;height:9.95px;background:#e4e4e4;"></div><div style="position:absolute;left:968.5px;top:149.25px;width:298.5px;height:9.95px;background:#f2f2f2;"></div><div style="position:absolute;left:968.5px;top:169.14999999999998px;width:298.5px;height:9.95px;background:#e4e4e4;"></div><div style="position:absolute;left:968.5px;top:189.04999999999998px;width:298.5px;height:9.95px;background:#f2f2f2;"></div><div style="position:absolute;left:968.5px;top:208.95px;width:298.5px;height:9.95px;background:#f2f2f2;"></div><div style="position:absolute;left:968.5px;top:228.85px;width:298.5px;height:9.95px;background:#f2f2f2;"></div><div style="position:absolute;left:968.5px;top:248.74999999999997px;width:298.5px;height:9.95px;background:#f2f2f2;"></div><div style="position:absolute;left:968.5px;top:268.65px;width:298.5px;height:9.95px;background:#f2f2f2;"></div><div style="position:absolute;left:968.5px;top:288.54999999999995px;width:298.5px;height:9.95px;background:#f2f2f2;"></div><div style="position:absolute;left:968.5px;top:308.45px;width:298.5px;height:9.95px;background:#f2f2f2;"></div><div style="position:absolute;left:968.5px;top:318.4px;width:298.5px;height:9.95px;background:#e4e4e4;"></div><div style="position:absolute;left:968.5px;top:328.34999999999997px;width:298.5px;height:9.95px;background:#f2f2f2;"></div><div style="position:absolute;left:968.5px;top:348.25px;width:298.5px;height:9.95px;background:#f2f2f2;"></div><div style="position:absolute;left:968.5px;top:368.15px;width:298.5px;height:9.95px;background:#e4e4e4;"></div><div style="position:absolute;left:968.5px;top:388.04999999999995px;width:298.5px;height:9.95px;background:#f2f2f2;"></div><div style="position:absolute;left:968.5px;top:407.95px;width:298.5px;height:9.95px;background:#f2f2f2;"></div><div style="position:absolute;left:968.5px;top:427.84999999999997px;width:298.5px;height:9.95px;background:#e4e4e4;"></div><div style="position:absolute;left:968.5px;top:447.74999999999994px;width:298.5px;height:9.95px;background:#f2f2f2;"></div><div style="position:absolute;left:968.5px;top:467.65px;width:298.5px;height:9.95px;background:#f2f2f2;"></div><div style="position:absolute;left:968.5px;top:487.54999999999995px;width:298.5px;height:9.95px;background:#f2f2f2;"></div><div style="position:absolute;left:968.5px;top:507.45px;width:298.5px;height:9.95px;background:#f2f2f2;"></div><div style="position:absolute;left:968.5px;top:527.3499999999999px;width:298.5px;height:9.95px;background:#f2f2f2;"></div><div style="position:absolute;left:968.5px;top:547.25px;width:298.5px;height:9.95px;background:#f2f2f2;"></div><div style="position:absolute;left:968.5px;top:567.15px;width:298.5px;height:9.95px;background:#f2f2f2;"></div><div style="position:absolute;left:968.5px;top:587.05px;width:298.5px;height:9.95px;background:#f2f2f2;"></div><div style="position:absolute;left:968.5px;top:606.9499999999999px;width:298.5px;height:9.95px;background:#f2f2f2;"></div><div style="position:absolute;left:968.5px;top:626.8499999999999px;width:298.5px;height:9.95px;background:#e4e4e4;"></div><div style="position:absolute;left:1080.2px;top:39.8px;width:46.4px;height:39.8px;background:#cfe2f8;"></div><div style="position:absolute;left:1080.2px;top:208.95px;width:46.4px;height:9.95px;background:#cfe2f8;"></div><div style="position:absolute;left:1080.2px;top:407.95px;width:46.4px;height:9.95px;background:#cfe2f8;"></div><div style="position:absolute;left:1080.2px;top:437.8px;width:46.4px;height:9.95px;background:#cfe2f8;"></div><div style="position:absolute;left:1080.2px;top:457.7px;width:46.4px;height:19.9px;background:#cfe2f8;"></div><div style="position:absolute;left:1080.2px;top:507.45px;width:46.4px;height:39.8px;background:#cfe2f8;"></div><div style="position:absolute;left:1080.2px;top:557.2px;width:46.4px;height:49.75px;background:#cfe2f8;"></div><svg style="position:absolute;left:0;top:0" width="1268" height="647"><path d="M957.8 3.27 L961.1 6.57 L964.4 3.27" fill="none" stroke="#9a9a9a" stroke-width="0.8"/><rect x="969.9" y="1.37" width="4.4" height="7.2" fill="#4a4a4a"/><rect x="970.8" y="2.37" width="2.6" height="5.2" fill="#6a6a6a"/><line x1="971.60" y1="10.92" x2="971.60" y2="17.42" stroke="#6a6a6a" stroke-width="0.9"/><ellipse cx="971.60" cy="17.92" rx="1.1" ry="1.4" fill="#4a3428"/><line x1="971.60" y1="20.88" x2="971.60" y2="27.38" stroke="#6a6a6a" stroke-width="0.9"/><ellipse cx="971.60" cy="27.88" rx="1.1" ry="1.4" fill="#4a3428"/><line x1="971.60" y1="30.82" x2="971.60" y2="37.32" stroke="#6a6a6a" stroke-width="0.9"/><ellipse cx="971.60" cy="37.82" rx="1.1" ry="1.4" fill="#4a3428"/><path d="M972.60 39.98 L974.60 39.98 L972.80 43.88 L974.30 43.88 L969.60 49.57 L971.00 45.27 L969.40 45.27 Z" fill="#e4c24a"/><path d="M972.60 49.93 L974.60 49.93 L972.80 53.83 L974.30 53.83 L969.60 59.52 L971.00 55.23 L969.40 55.23 Z" fill="#e4c24a"/><path d="M972.60 59.88 L974.60 59.88 L972.80 63.77 L974.30 63.77 L969.60 69.47 L971.00 65.17 L969.40 65.17 Z" fill="#e4c24a"/><path d="M972.60 69.82 L974.60 69.82 L972.80 73.72 L974.30 73.72 L969.60 79.42 L971.00 75.12 L969.40 75.12 Z" fill="#e4c24a"/><path d="M972.60 79.77 L974.60 79.77 L972.80 83.67 L974.30 83.67 L969.60 89.37 L971.00 85.07 L969.40 85.07 Z" fill="#e4c24a"/><path d="M972.60 89.72 L974.60 89.72 L972.80 93.62 L974.30 93.62 L969.60 99.32 L971.00 95.02 L969.40 95.02 Z" fill="#e4c24a"/><path d="M972.60 99.67 L974.60 99.67 L972.80 103.57 L974.30 103.57 L969.60 109.27 L971.00 104.97 L969.40 104.97 Z" fill="#e4c24a"/><path d="M972.60 109.62 L974.60 109.62 L972.80 113.52 L974.30 113.52 L969.60 119.22 L971.00 114.92 L969.40 114.92 Z" fill="#e4c24a"/><path d="M957.8 132.62 L961.1 135.92 L964.4 132.62" fill="none" stroke="#9a9a9a" stroke-width="0.8"/><rect x="969.9" y="130.72" width="4.4" height="7.2" fill="#4a4a4a"/><rect x="970.8" y="131.72" width="2.6" height="5.2" fill="#6a6a6a"/><path d="M968.6 141.07 L971.9 144.27 L968.6 147.47" fill="none" stroke="#8a8a8a" stroke-width="0.7"/><path d="M984.10 142.27 A3 3 0 1 0 984.10 146.27" fill="none" stroke="#444" stroke-width="0.85"/><path d="M981.80 142.27 L981.80 144.87 L983.60 144.87" fill="none" stroke="#444" stroke-width="0.75"/><circle cx="983.80" cy="141.87" r="0.6" fill="#444"/><path d="M968.6 151.03 L971.9 154.22 L968.6 157.42" fill="none" stroke="#8a8a8a" stroke-width="0.7"/><path d="M984.10 152.22 A3 3 0 1 0 984.10 156.22" fill="none" stroke="#444" stroke-width="0.85"/><path d="M981.80 152.22 L981.80 154.82 L983.60 154.82" fill="none" stroke="#444" stroke-width="0.75"/><circle cx="983.80" cy="151.82" r="0.6" fill="#444"/><path d="M957.8 172.42 L961.1 175.72 L964.4 172.42" fill="none" stroke="#9a9a9a" stroke-width="0.8"/><rect x="969.9" y="170.52" width="4.4" height="7.2" fill="#4a4a4a"/><rect x="970.8" y="171.52" width="2.6" height="5.2" fill="#6a6a6a"/><path d="M972.60 179.27 L974.60 179.27 L972.80 183.17 L974.30 183.17 L969.60 188.88 L971.00 184.57 L969.40 184.57 Z" fill="#e4c24a"/><path d="M972.60 189.22 L974.60 189.22 L972.80 193.12 L974.30 193.12 L969.60 198.82 L971.00 194.52 L969.40 194.52 Z" fill="#e4c24a"/><path d="M972.60 199.17 L974.60 199.17 L972.80 203.07 L974.30 203.07 L969.60 208.78 L971.00 204.47 L969.40 204.47 Z" fill="#e4c24a"/><path d="M974.90 211.92 A3 3 0 1 0 974.90 215.92" fill="none" stroke="#444" stroke-width="0.85"/><path d="M972.60 211.92 L972.60 214.52 L974.40 214.52" fill="none" stroke="#444" stroke-width="0.75"/><circle cx="974.60" cy="211.52" r="0.6" fill="#444"/><path d="M974.90 221.87 A3 3 0 1 0 974.90 225.87" fill="none" stroke="#444" stroke-width="0.85"/><path d="M972.60 221.87 L972.60 224.47 L974.40 224.47" fill="none" stroke="#444" stroke-width="0.75"/><circle cx="974.60" cy="221.47" r="0.6" fill="#444"/><path d="M974.90 231.82 A3 3 0 1 0 974.90 235.82" fill="none" stroke="#444" stroke-width="0.85"/><path d="M972.60 231.82 L972.60 234.42 L974.40 234.42" fill="none" stroke="#444" stroke-width="0.75"/><circle cx="974.60" cy="231.42" r="0.6" fill="#444"/><path d="M974.90 241.77 A3 3 0 1 0 974.90 245.77" fill="none" stroke="#444" stroke-width="0.85"/><path d="M972.60 241.77 L972.60 244.37 L974.40 244.37" fill="none" stroke="#444" stroke-width="0.75"/><circle cx="974.60" cy="241.37" r="0.6" fill="#444"/><path d="M974.90 251.72 A3 3 0 1 0 974.90 255.72" fill="none" stroke="#444" stroke-width="0.85"/><path d="M972.60 251.72 L972.60 254.32 L974.40 254.32" fill="none" stroke="#444" stroke-width="0.75"/><circle cx="974.60" cy="251.32" r="0.6" fill="#444"/><path d="M974.90 261.68 A3 3 0 1 0 974.90 265.68" fill="none" stroke="#444" stroke-width="0.85"/><path d="M972.60 261.68 L972.60 264.28 L974.40 264.28" fill="none" stroke="#444" stroke-width="0.75"/><circle cx="974.60" cy="261.28" r="0.6" fill="#444"/><path d="M974.90 271.62 A3 3 0 1 0 974.90 275.62" fill="none" stroke="#444" stroke-width="0.85"/><path d="M972.60 271.62 L972.60 274.23 L974.40 274.23" fill="none" stroke="#444" stroke-width="0.75"/><circle cx="974.60" cy="271.23" r="0.6" fill="#444"/><path d="M974.90 281.57 A3 3 0 1 0 974.90 285.57" fill="none" stroke="#444" stroke-width="0.85"/><path d="M972.60 281.57 L972.60 284.18 L974.40 284.18" fill="none" stroke="#444" stroke-width="0.75"/><circle cx="974.60" cy="281.18" r="0.6" fill="#444"/><path d="M974.90 291.52 A3 3 0 1 0 974.90 295.52" fill="none" stroke="#444" stroke-width="0.85"/><path d="M972.60 291.52 L972.60 294.12 L974.40 294.12" fill="none" stroke="#444" stroke-width="0.75"/><circle cx="974.60" cy="291.12" r="0.6" fill="#444"/><path d="M974.90 301.48 A3 3 0 1 0 974.90 305.48" fill="none" stroke="#444" stroke-width="0.85"/><path d="M972.60 301.48 L972.60 304.08 L974.40 304.08" fill="none" stroke="#444" stroke-width="0.75"/><circle cx="974.60" cy="301.08" r="0.6" fill="#444"/><path d="M957.8 321.68 L961.1 324.98 L964.4 321.68" fill="none" stroke="#9a9a9a" stroke-width="0.8"/><rect x="969.9" y="319.77" width="4.4" height="7.2" fill="#4a4a4a"/><rect x="970.8" y="320.77" width="2.6" height="5.2" fill="#6a6a6a"/><path d="M968.6 330.12 L971.9 333.32 L968.6 336.52" fill="none" stroke="#8a8a8a" stroke-width="0.7"/><path d="M984.10 331.32 A3 3 0 1 0 984.10 335.32" fill="none" stroke="#444" stroke-width="0.85"/><path d="M981.80 331.32 L981.80 333.93 L983.60 333.93" fill="none" stroke="#444" stroke-width="0.75"/><circle cx="983.80" cy="330.93" r="0.6" fill="#444"/><path d="M968.6 340.07 L971.9 343.27 L968.6 346.47" fill="none" stroke="#8a8a8a" stroke-width="0.7"/><path d="M984.10 341.27 A3 3 0 1 0 984.10 345.27" fill="none" stroke="#444" stroke-width="0.85"/><path d="M981.80 341.27 L981.80 343.88 L983.60 343.88" fill="none" stroke="#444" stroke-width="0.75"/><circle cx="983.80" cy="340.88" r="0.6" fill="#444"/><path d="M968.6 350.03 L971.9 353.23 L968.6 356.43" fill="none" stroke="#8a8a8a" stroke-width="0.7"/><path d="M984.10 351.23 A3 3 0 1 0 984.10 355.23" fill="none" stroke="#444" stroke-width="0.85"/><path d="M981.80 351.23 L981.80 353.83 L983.60 353.83" fill="none" stroke="#444" stroke-width="0.75"/><circle cx="983.80" cy="350.83" r="0.6" fill="#444"/><path d="M957.8 371.43 L961.1 374.73 L964.4 371.43" fill="none" stroke="#9a9a9a" stroke-width="0.8"/><rect x="969.9" y="369.52" width="4.4" height="7.2" fill="#4a4a4a"/><rect x="970.8" y="370.52" width="2.6" height="5.2" fill="#6a6a6a"/><line x1="971.60" y1="379.07" x2="971.60" y2="385.57" stroke="#6a6a6a" stroke-width="0.9"/><ellipse cx="971.60" cy="386.07" rx="1.1" ry="1.4" fill="#4a3428"/><line x1="971.60" y1="389.02" x2="971.60" y2="395.52" stroke="#6a6a6a" stroke-width="0.9"/><ellipse cx="971.60" cy="396.02" rx="1.1" ry="1.4" fill="#4a3428"/><line x1="971.60" y1="398.98" x2="971.60" y2="405.48" stroke="#6a6a6a" stroke-width="0.9"/><ellipse cx="971.60" cy="405.98" rx="1.1" ry="1.4" fill="#4a3428"/><line x1="971.60" y1="408.93" x2="971.60" y2="415.43" stroke="#6a6a6a" stroke-width="0.9"/><ellipse cx="971.60" cy="415.93" rx="1.1" ry="1.4" fill="#4a3428"/><path d="M957.8 431.12 L961.1 434.43 L964.4 431.12" fill="none" stroke="#9a9a9a" stroke-width="0.8"/><rect x="969.9" y="429.22" width="4.4" height="7.2" fill="#4a4a4a"/><rect x="970.8" y="430.22" width="2.6" height="5.2" fill="#6a6a6a"/><line x1="971.60" y1="438.77" x2="971.60" y2="445.27" stroke="#6a6a6a" stroke-width="0.9"/><ellipse cx="971.60" cy="445.77" rx="1.1" ry="1.4" fill="#4a3428"/><line x1="971.60" y1="448.72" x2="971.60" y2="455.22" stroke="#6a6a6a" stroke-width="0.9"/><ellipse cx="971.60" cy="455.72" rx="1.1" ry="1.4" fill="#4a3428"/><line x1="971.60" y1="458.68" x2="971.60" y2="465.18" stroke="#6a6a6a" stroke-width="0.9"/><ellipse cx="971.60" cy="465.68" rx="1.1" ry="1.4" fill="#4a3428"/><path d="M972.60 467.82 L974.60 467.82 L972.80 471.73 L974.30 471.73 L969.60 477.43 L971.00 473.12 L969.40 473.12 Z" fill="#e4c24a"/><path d="M972.60 477.77 L974.60 477.77 L972.80 481.68 L974.30 481.68 L969.60 487.38 L971.00 483.07 L969.40 483.07 Z" fill="#e4c24a"/><path d="M972.60 487.72 L974.60 487.72 L972.80 491.62 L974.30 491.62 L969.60 497.32 L971.00 493.02 L969.40 493.02 Z" fill="#e4c24a"/><path d="M972.60 497.67 L974.60 497.67 L972.80 501.57 L974.30 501.57 L969.60 507.27 L971.00 502.97 L969.40 502.97 Z" fill="#e4c24a"/><path d="M972.60 507.62 L974.60 507.62 L972.80 511.52 L974.30 511.52 L969.60 517.22 L971.00 512.92 L969.40 512.92 Z" fill="#e4c24a"/><path d="M972.60 517.58 L974.60 517.58 L972.80 521.48 L974.30 521.48 L969.60 527.17 L971.00 522.88 L969.40 522.88 Z" fill="#e4c24a"/><path d="M972.60 527.52 L974.60 527.52 L972.80 531.42 L974.30 531.42 L969.60 537.12 L971.00 532.82 L969.40 532.82 Z" fill="#e4c24a"/><path d="M972.60 537.48 L974.60 537.48 L972.80 541.38 L974.30 541.38 L969.60 547.07 L971.00 542.77 L969.40 542.77 Z" fill="#e4c24a"/><path d="M972.60 547.43 L974.60 547.43 L972.80 551.33 L974.30 551.33 L969.60 557.02 L971.00 552.73 L969.40 552.73 Z" fill="#e4c24a"/><path d="M972.60 557.38 L974.60 557.38 L972.80 561.27 L974.30 561.27 L969.60 566.97 L971.00 562.67 L969.40 562.67 Z" fill="#e4c24a"/><circle cx="972.00" cy="569.73" r="1.7" fill="#1a1a1a"/><circle cx="972.00" cy="574.52" r="1.7" fill="#1a1a1a"/><circle cx="969.60" cy="572.12" r="1.7" fill="#1a1a1a"/><circle cx="974.40" cy="572.12" r="1.7" fill="#1a1a1a"/><circle cx="972.00" cy="572.12" r="1" fill="#444"/><circle cx="972.00" cy="579.67" r="1.7" fill="#1a1a1a"/><circle cx="972.00" cy="584.47" r="1.7" fill="#1a1a1a"/><circle cx="969.60" cy="582.07" r="1.7" fill="#1a1a1a"/><circle cx="974.40" cy="582.07" r="1.7" fill="#1a1a1a"/><circle cx="972.00" cy="582.07" r="1" fill="#444"/><circle cx="972.00" cy="589.62" r="1.7" fill="#1a1a1a"/><circle cx="972.00" cy="594.42" r="1.7" fill="#1a1a1a"/><circle cx="969.60" cy="592.02" r="1.7" fill="#1a1a1a"/><circle cx="974.40" cy="592.02" r="1.7" fill="#1a1a1a"/><circle cx="972.00" cy="592.02" r="1" fill="#444"/><circle cx="972.00" cy="599.58" r="1.7" fill="#1a1a1a"/><circle cx="972.00" cy="604.38" r="1.7" fill="#1a1a1a"/><circle cx="969.60" cy="601.98" r="1.7" fill="#1a1a1a"/><circle cx="974.40" cy="601.98" r="1.7" fill="#1a1a1a"/><circle cx="972.00" cy="601.98" r="1" fill="#444"/><path d="M974.90 609.92 A3 3 0 1 0 974.90 613.92" fill="none" stroke="#444" stroke-width="0.85"/><path d="M972.60 609.92 L972.60 612.52 L974.40 612.52" fill="none" stroke="#444" stroke-width="0.75"/><circle cx="974.60" cy="609.52" r="0.6" fill="#444"/><path d="M957.8 630.12 L961.1 633.42 L964.4 630.12" fill="none" stroke="#9a9a9a" stroke-width="0.8"/><rect x="969.9" y="628.22" width="4.4" height="7.2" fill="#4a4a4a"/><rect x="970.8" y="629.22" width="2.6" height="5.2" fill="#6a6a6a"/><line x1="971.60" y1="637.77" x2="971.60" y2="644.27" stroke="#6a6a6a" stroke-width="0.9"/><ellipse cx="971.60" cy="644.77" rx="1.1" ry="1.4" fill="#4a3428"/></svg><svg style="position:absolute;left:1211px;top:627px" width="10" height="11"><circle cx="4.8" cy="5.5" r="3.4" fill="none" stroke="#f8f8f8" stroke-width="1.3"/><circle cx="4.8" cy="5.5" r="4.3" fill="none" stroke="#c8c8c8" stroke-width="0.4"/></svg>
<div style="position:absolute;top:17.74px;height:9.52px;line-height:9.52px;font-size:6.8px;font-weight:400;color:#1a1a1a;white-space:pre;-webkit-text-stroke:0.2px #1a1a1a;left:18.20px;transform-origin:0 50%;transform:scaleX(0.997);">System Stability Test - AIDA64</div><div style="position:absolute;top:40.00px;height:11.20px;line-height:11.20px;font-size:8px;font-weight:400;color:#1a1a1a;white-space:pre;-webkit-text-stroke:0.2px #1a1a1a;left:33.60px;transform-origin:0 50%;transform:scaleX(0.840);">Stress CPU</div><div style="position:absolute;top:51.80px;height:11.20px;line-height:11.20px;font-size:8px;font-weight:400;color:#1a1a1a;white-space:pre;-webkit-text-stroke:0.2px #1a1a1a;left:33.60px;transform-origin:0 50%;transform:scaleX(0.840);">Stress FPU</div><div style="position:absolute;top:63.60px;height:11.20px;line-height:11.20px;font-size:8px;font-weight:400;color:#1a1a1a;white-space:pre;-webkit-text-stroke:0.2px #1a1a1a;left:33.60px;transform-origin:0 50%;transform:scaleX(0.840);">Stress cache</div><div style="position:absolute;top:75.40px;height:11.20px;line-height:11.20px;font-size:8px;font-weight:400;color:#1a1a1a;white-space:pre;-webkit-text-stroke:0.2px #1a1a1a;left:33.60px;transform-origin:0 50%;transform:scaleX(0.840);">Stress system memory</div><div style="position:absolute;top:87.20px;height:11.20px;line-height:11.20px;font-size:8px;font-weight:400;color:#1a1a1a;white-space:pre;-webkit-text-stroke:0.2px #1a1a1a;left:33.60px;transform-origin:0 50%;transform:scaleX(0.840);">Stress local disks</div><div style="position:absolute;top:99.00px;height:11.20px;line-height:11.20px;font-size:8px;font-weight:400;color:#1a1a1a;white-space:pre;-webkit-text-stroke:0.2px #1a1a1a;left:33.60px;transform-origin:0 50%;transform:scaleX(0.840);">Stress GPU(s)</div><div style="position:absolute;top:43.80px;height:11.20px;line-height:11.20px;font-size:8px;font-weight:400;color:#1a1a1a;white-space:pre;-webkit-text-stroke:0.2px #1a1a1a;left:121.10px;transform-origin:0 50%;transform:scaleX(0.875);">Date / Time</div><div style="position:absolute;top:43.80px;height:11.20px;line-height:11.20px;font-size:8px;font-weight:400;color:#1a1a1a;white-space:pre;-webkit-text-stroke:0.2px #1a1a1a;left:208.70px;transform-origin:0 50%;transform:scaleX(0.850);">Status</div><div style="position:absolute;top:56.40px;height:11.20px;line-height:11.20px;font-size:8px;font-weight:400;color:#1a1a1a;white-space:pre;-webkit-text-stroke:0.2px #1a1a1a;left:208.70px;transform-origin:0 50%;transform:scaleX(0.843);">Stability Test: Started</div><div style="position:absolute;top:116.10px;height:11.20px;line-height:11.20px;font-size:8px;font-weight:400;color:#1a1a1a;white-space:pre;-webkit-text-stroke:0.2px #1a1a1a;left:15.30px;transform-origin:0 50%;transform:scaleX(0.830);">Temperatures</div><div style="position:absolute;top:117.10px;height:11.20px;line-height:11.20px;font-size:8px;font-weight:400;color:#1a1a1a;white-space:pre;-webkit-text-stroke:0.2px #1a1a1a;left:63.40px;transform-origin:0 50%;transform:scaleX(0.849);">Cooling Fans</div><div style="position:absolute;top:117.10px;height:11.20px;line-height:11.20px;font-size:8px;font-weight:400;color:#1a1a1a;white-space:pre;-webkit-text-stroke:0.2px #1a1a1a;left:110.60px;transform-origin:0 50%;transform:scaleX(0.821);">Voltages</div><div style="position:absolute;top:117.10px;height:11.20px;line-height:11.20px;font-size:8px;font-weight:400;color:#1a1a1a;white-space:pre;-webkit-text-stroke:0.2px #1a1a1a;left:143.40px;transform-origin:0 50%;transform:scaleX(0.821);">Powers</div><div style="position:absolute;top:117.10px;height:11.20px;line-height:11.20px;font-size:8px;font-weight:400;color:#1a1a1a;white-space:pre;-webkit-text-stroke:0.2px #1a1a1a;left:172.70px;transform-origin:0 50%;transform:scaleX(0.829);">Clocks</div><div style="position:absolute;top:117.10px;height:11.20px;line-height:11.20px;font-size:8px;font-weight:400;color:#1a1a1a;white-space:pre;-webkit-text-stroke:0.2px #1a1a1a;left:200.80px;transform-origin:0 50%;transform:scaleX(0.863);">Unified</div><div style="position:absolute;top:117.10px;height:11.20px;line-height:11.20px;font-size:8px;font-weight:400;color:#1a1a1a;white-space:pre;-webkit-text-stroke:0.2px #1a1a1a;left:229.50px;transform-origin:0 50%;transform:scaleX(0.834);">Statistics</div><div style="position:absolute;top:134.60px;height:9.80px;line-height:9.80px;font-size:7px;font-weight:400;color:#dcd468;white-space:pre;left:280.80px;transform-origin:0 50%;transform:scaleX(0.992);">Motherboard</div><div style="position:absolute;top:134.60px;height:9.80px;line-height:9.80px;font-size:7px;font-weight:400;color:#e0e0e0;white-space:pre;left:336.00px;transform-origin:0 50%;transform:scaleX(0.764);">CPU</div><div style="position:absolute;top:134.60px;height:9.80px;line-height:9.80px;font-size:7px;font-weight:400;color:#3cd03c;white-space:pre;left:363.60px;transform-origin:0 50%;transform:scaleX(0.881);">CPU Core #1</div><div style="position:absolute;top:134.60px;height:9.80px;line-height:9.80px;font-size:7px;font-weight:400;color:#30c8b0;white-space:pre;left:415.60px;transform-origin:0 50%;transform:scaleX(0.898);">CPU Core #2</div><div style="position:absolute;top:134.60px;height:9.80px;line-height:9.80px;font-size:7px;font-weight:400;color:#b040c0;white-space:pre;left:469.10px;transform-origin:0 50%;transform:scaleX(0.886);">CPU Core #3</div><div style="position:absolute;top:134.60px;height:9.80px;line-height:9.80px;font-size:7px;font-weight:400;color:#e0e0e0;white-space:pre;left:521.20px;transform-origin:0 50%;transform:scaleX(0.896);">CPU Core #4</div><div style="position:absolute;top:134.60px;height:9.80px;line-height:9.80px;font-size:7px;font-weight:400;color:#e8e0d0;white-space:pre;left:573.90px;transform-origin:0 50%;transform:scaleX(0.862);">KINGSTON SKC3000D4096G</div><div style="position:absolute;top:143.40px;height:9.80px;line-height:9.80px;font-size:7px;font-weight:400;color:#e0e0e0;white-space:pre;left:22.50px;transform-origin:0 50%;transform:scaleX(0.844);">100°C</div><div style="position:absolute;top:341.00px;height:9.80px;line-height:9.80px;font-size:7px;font-weight:400;color:#e0e0e0;white-space:pre;left:28.00px;transform-origin:0 50%;transform:scaleX(0.936);">0°C</div><div style="position:absolute;top:347.10px;height:9.80px;line-height:9.80px;font-size:7px;font-weight:400;color:#d0d0d0;white-space:pre;left:102.00px;transform-origin:0 50%;transform:scaleX(0.894);">4:43:39 PM</div><div style="position:absolute;top:191.90px;height:9.80px;line-height:9.80px;font-size:7px;font-weight:400;color:#b040c0;white-space:pre;left:892.80px;transform-origin:0 50%;transform:scaleX(0.872);">76</div><div style="position:absolute;top:191.90px;height:9.80px;line-height:9.80px;font-size:7px;font-weight:400;color:#d8d8d8;white-space:pre;left:901.40px;transform-origin:0 50%;transform:scaleX(0.872);">76</div><div style="position:absolute;top:199.30px;height:9.80px;line-height:9.80px;font-size:7px;font-weight:400;color:#30c030;white-space:pre;left:902.00px;transform-origin:0 50%;transform:scaleX(0.795);">72</div><div style="position:absolute;top:210.90px;height:9.80px;line-height:9.80px;font-size:7px;font-weight:400;color:#20b0a0;white-space:pre;left:892.50px;transform-origin:0 50%;transform:scaleX(0.949);">66</div><div style="position:absolute;top:284.10px;height:9.80px;line-height:9.80px;font-size:7px;font-weight:400;color:#d0d0d0;white-space:pre;left:892.70px;transform-origin:0 50%;transform:scaleX(0.911);">29</div><div style="position:absolute;top:281.10px;height:9.80px;line-height:9.80px;font-size:7px;font-weight:400;color:#c8c050;white-space:pre;left:901.20px;transform-origin:0 50%;transform:scaleX(0.821);">31</div><div style="position:absolute;top:370.00px;height:9.80px;line-height:9.80px;font-size:7px;font-weight:400;color:#c8c050;white-space:pre;left:422.60px;transform-origin:0 50%;transform:scaleX(0.885);">CPU Usage</div><div style="position:absolute;top:370.00px;height:9.80px;line-height:9.80px;font-size:7px;font-weight:400;color:#a0a0a0;white-space:pre;left:459.50px;transform-origin:0 50%;transform:scaleX(1.000);">|</div><div style="position:absolute;top:370.00px;height:9.80px;line-height:9.80px;font-size:7px;font-weight:400;color:#30c030;white-space:pre;left:464.50px;transform-origin:0 50%;transform:scaleX(0.979);">CPU Throttling</div><div style="position:absolute;top:378.80px;height:9.80px;line-height:9.80px;font-size:7px;font-weight:400;color:#e0e0e0;white-space:pre;left:23.70px;transform-origin:0 50%;transform:scaleX(0.843);">100%</div><div style="position:absolute;top:378.80px;height:9.80px;line-height:9.80px;font-size:7px;font-weight:400;color:#c8c050;white-space:pre;left:893.00px;transform-origin:0 50%;transform:scaleX(0.838);">100%</div><div style="position:absolute;top:574.60px;height:9.80px;line-height:9.80px;font-size:7px;font-weight:400;color:#e0e0e0;white-space:pre;left:30.00px;transform-origin:0 50%;transform:scaleX(0.919);">0%</div><div style="position:absolute;top:574.60px;height:9.80px;line-height:9.80px;font-size:7px;font-weight:400;color:#30c030;white-space:pre;left:892.50px;transform-origin:0 50%;transform:scaleX(0.840);">0%</div><div style="position:absolute;top:609.20px;height:11.20px;line-height:11.20px;font-size:8px;font-weight:400;color:#1a1a1a;white-space:pre;-webkit-text-stroke:0.2px #1a1a1a;left:9.70px;transform-origin:0 50%;transform:scaleX(0.860);">Remaining Battery:</div><div style="position:absolute;top:609.90px;height:9.80px;line-height:9.80px;font-size:7px;font-weight:400;color:#20c020;white-space:pre;left:82.50px;transform-origin:0 50%;transform:scaleX(1.006);">No battery</div><div style="position:absolute;top:609.20px;height:11.20px;line-height:11.20px;font-size:8px;font-weight:400;color:#1a1a1a;white-space:pre;-webkit-text-stroke:0.2px #1a1a1a;left:136.00px;transform-origin:0 50%;transform:scaleX(0.808);">Test Started:</div><div style="position:absolute;top:609.20px;height:11.20px;line-height:11.20px;font-size:8px;font-weight:400;color:#1a1a1a;white-space:pre;-webkit-text-stroke:0.2px #1a1a1a;left:275.80px;transform-origin:0 50%;transform:scaleX(0.818);">Elapsed Time:</div><div style="position:absolute;top:609.90px;height:9.80px;line-height:9.80px;font-size:7px;font-weight:400;color:#20c020;white-space:pre;left:336.00px;transform-origin:0 50%;transform:scaleX(0.881);">00:53:53</div><div style="position:absolute;top:630.20px;height:11.20px;line-height:11.20px;font-size:8px;font-weight:400;color:#9a9a9a;white-space:pre;left:23.40px;width:16.91px;transform-origin:50% 50%;transform:scaleX(0.840);">Start</div><div style="position:absolute;top:630.20px;height:11.20px;line-height:11.20px;font-size:8px;font-weight:400;color:#1a1a1a;white-space:pre;-webkit-text-stroke:0.2px #1a1a1a;left:71.22px;width:16.47px;transform-origin:50% 50%;transform:scaleX(0.840);">Stop</div><div style="position:absolute;top:630.20px;height:11.20px;line-height:11.20px;font-size:8px;font-weight:400;color:#1a1a1a;white-space:pre;-webkit-text-stroke:0.2px #1a1a1a;left:127.64px;width:19.12px;transform-origin:50% 50%;transform:scaleX(0.840);">Clear</div><div style="position:absolute;top:630.20px;height:11.20px;line-height:11.20px;font-size:8px;font-weight:400;color:#1a1a1a;white-space:pre;-webkit-text-stroke:0.2px #1a1a1a;left:175.28px;width:18.23px;transform-origin:50% 50%;transform:scaleX(0.840);">Save</div><div style="position:absolute;top:630.20px;height:11.20px;line-height:11.20px;font-size:8px;font-weight:400;color:#1a1a1a;white-space:pre;-webkit-text-stroke:0.2px #1a1a1a;left:230.05px;width:24.89px;transform-origin:50% 50%;transform:scaleX(0.840);">CPUID</div><div style="position:absolute;top:630.20px;height:11.20px;line-height:11.20px;font-size:8px;font-weight:400;color:#1a1a1a;white-space:pre;-webkit-text-stroke:0.2px #1a1a1a;left:268.13px;width:43.14px;transform-origin:50% 50%;transform:scaleX(0.840);">Preferences</div><div style="position:absolute;top:630.20px;height:11.20px;line-height:11.20px;font-size:8px;font-weight:400;color:#9a9a9a;white-space:pre;left:890.17px;width:20.45px;transform-origin:50% 50%;transform:scaleX(0.840);">Close</div><div style="position:absolute;top:0.43px;height:10.08px;line-height:10.08px;font-size:7.2px;font-weight:700;color:#1a1a1a;white-space:pre;left:977.80px;transform-origin:0 50%;transform:scaleX(0.950);">CPU [#0]: Intel Core Ultra 9 285K: Enhanced</div><div style="position:absolute;top:10.59px;height:9.66px;line-height:9.66px;font-size:6.9px;font-weight:400;color:#303030;white-space:pre;left:977.80px;transform-origin:0 50%;transform:scaleX(0.870);">CPU Package</div><div style="position:absolute;top:10.59px;height:9.66px;line-height:9.66px;font-size:6.9px;font-weight:400;color:#303030;white-space:pre;left:1107.26px;width:16.14px;text-align:right;transform-origin:100% 50%;transform:scaleX(0.930);">79 <span style="letter-spacing:-1.2px">°</span>C</div><div style="position:absolute;top:10.59px;height:9.66px;line-height:9.66px;font-size:6.9px;font-weight:400;color:#303030;white-space:pre;left:1153.86px;width:16.14px;text-align:right;transform-origin:100% 50%;transform:scaleX(0.930);">36 <span style="letter-spacing:-1.2px">°</span>C</div><div style="position:absolute;top:10.59px;height:9.66px;line-height:9.66px;font-size:6.9px;font-weight:400;color:#303030;white-space:pre;left:1200.46px;width:16.14px;text-align:right;transform-origin:100% 50%;transform:scaleX(0.930);">81 <span style="letter-spacing:-1.2px">°</span>C</div><div style="position:absolute;top:10.59px;height:9.66px;line-height:9.66px;font-size:6.9px;font-weight:400;color:#303030;white-space:pre;left:1247.36px;width:16.14px;text-align:right;transform-origin:100% 50%;transform:scaleX(0.930);">67 <span style="letter-spacing:-1.2px">°</span>C</div><div style="position:absolute;top:20.55px;height:9.66px;line-height:9.66px;font-size:6.9px;font-weight:400;color:#303030;white-space:pre;left:977.80px;transform-origin:0 50%;transform:scaleX(0.870);">CPU IA Cores</div><div style="position:absolute;top:20.55px;height:9.66px;line-height:9.66px;font-size:6.9px;font-weight:400;color:#303030;white-space:pre;left:1107.26px;width:16.14px;text-align:right;transform-origin:100% 50%;transform:scaleX(0.930);">79 <span style="letter-spacing:-1.2px">°</span>C</div><div style="position:absolute;top:20.55px;height:9.66px;line-height:9.66px;font-size:6.9px;font-weight:400;color:#303030;white-space:pre;left:1153.86px;width:16.14px;text-align:right;transform-origin:100% 50%;transform:scaleX(0.930);">36 <span style="letter-spacing:-1.2px">°</span>C</div><div style="position:absolute;top:20.55px;height:9.66px;line-height:9.66px;font-size:6.9px;font-weight:400;color:#303030;white-space:pre;left:1200.46px;width:16.14px;text-align:right;transform-origin:100% 50%;transform:scaleX(0.930);">81 <span style="letter-spacing:-1.2px">°</span>C</div><div style="position:absolute;top:20.55px;height:9.66px;line-height:9.66px;font-size:6.9px;font-weight:400;color:#303030;white-space:pre;left:1247.36px;width:16.14px;text-align:right;transform-origin:100% 50%;transform:scaleX(0.930);">67 <span style="letter-spacing:-1.2px">°</span>C</div><div style="position:absolute;top:30.49px;height:9.66px;line-height:9.66px;font-size:6.9px;font-weight:400;color:#303030;white-space:pre;left:977.80px;transform-origin:0 50%;transform:scaleX(0.870);">CPU GT Cores (Graphics)</div><div style="position:absolute;top:30.49px;height:9.66px;line-height:9.66px;font-size:6.9px;font-weight:400;color:#303030;white-space:pre;left:1107.26px;width:16.14px;text-align:right;transform-origin:100% 50%;transform:scaleX(0.930);">32 <span style="letter-spacing:-1.2px">°</span>C</div><div style="position:absolute;top:30.49px;height:9.66px;line-height:9.66px;font-size:6.9px;font-weight:400;color:#303030;white-space:pre;left:1153.86px;width:16.14px;text-align:right;transform-origin:100% 50%;transform:scaleX(0.930);">32 <span style="letter-spacing:-1.2px">°</span>C</div><div style="position:absolute;top:30.49px;height:9.66px;line-height:9.66px;font-size:6.9px;font-weight:400;color:#303030;white-space:pre;left:1200.46px;width:16.14px;text-align:right;transform-origin:100% 50%;transform:scaleX(0.930);">32 <span style="letter-spacing:-1.2px">°</span>C</div><div style="position:absolute;top:30.49px;height:9.66px;line-height:9.66px;font-size:6.9px;font-weight:400;color:#303030;white-space:pre;left:1247.36px;width:16.14px;text-align:right;transform-origin:100% 50%;transform:scaleX(0.930);">32 <span style="letter-spacing:-1.2px">°</span>C</div><div style="position:absolute;top:40.45px;height:9.66px;line-height:9.66px;font-size:6.9px;font-weight:400;color:#303030;white-space:pre;left:977.80px;transform-origin:0 50%;transform:scaleX(0.870);">VR VCC Current (SVID IOUT)</div><div style="position:absolute;top:40.45px;height:9.66px;line-height:9.66px;font-size:6.9px;font-weight:400;color:#303030;white-space:pre;left:1092.35px;width:31.05px;text-align:right;transform-origin:100% 50%;transform:scaleX(0.880);">176.565 A</div><div style="position:absolute;top:40.45px;height:9.66px;line-height:9.66px;font-size:6.9px;font-weight:400;color:#303030;white-space:pre;left:1142.78px;width:27.22px;text-align:right;transform-origin:100% 50%;transform:scaleX(0.880);">17.188 A</div><div style="position:absolute;top:40.45px;height:9.66px;line-height:9.66px;font-size:6.9px;font-weight:400;color:#303030;white-space:pre;left:1185.55px;width:31.05px;text-align:right;transform-origin:100% 50%;transform:scaleX(0.880);">181.253 A</div><div style="position:absolute;top:40.45px;height:9.66px;line-height:9.66px;font-size:6.9px;font-weight:400;color:#303030;white-space:pre;left:1232.45px;width:31.05px;text-align:right;transform-origin:100% 50%;transform:scaleX(0.880);">128.873 A</div><div style="position:absolute;top:50.40px;height:9.66px;line-height:9.66px;font-size:6.9px;font-weight:400;color:#303030;white-space:pre;left:977.80px;transform-origin:0 50%;transform:scaleX(0.870);">CPU Package Power</div><div style="position:absolute;top:50.40px;height:9.66px;line-height:9.66px;font-size:6.9px;font-weight:400;color:#303030;white-space:pre;left:1090.07px;width:33.33px;text-align:right;transform-origin:100% 50%;transform:scaleX(0.880);">252.254 W</div><div style="position:absolute;top:50.40px;height:9.66px;line-height:9.66px;font-size:6.9px;font-weight:400;color:#303030;white-space:pre;left:1140.50px;width:29.50px;text-align:right;transform-origin:100% 50%;transform:scaleX(0.880);">32.376 W</div><div style="position:absolute;top:50.40px;height:9.66px;line-height:9.66px;font-size:6.9px;font-weight:400;color:#303030;white-space:pre;left:1183.27px;width:33.33px;text-align:right;transform-origin:100% 50%;transform:scaleX(0.880);">253.040 W</div><div style="position:absolute;top:50.40px;height:9.66px;line-height:9.66px;font-size:6.9px;font-weight:400;color:#303030;white-space:pre;left:1230.17px;width:33.33px;text-align:right;transform-origin:100% 50%;transform:scaleX(0.880);">187.542 W</div><div style="position:absolute;top:60.34px;height:9.66px;line-height:9.66px;font-size:6.9px;font-weight:400;color:#303030;white-space:pre;left:977.80px;transform-origin:0 50%;transform:scaleX(0.870);">IA Cores Power</div><div style="position:absolute;top:60.34px;height:9.66px;line-height:9.66px;font-size:6.9px;font-weight:400;color:#303030;white-space:pre;left:1090.07px;width:33.33px;text-align:right;transform-origin:100% 50%;transform:scaleX(0.880);">241.842 W</div><div style="position:absolute;top:60.34px;height:9.66px;line-height:9.66px;font-size:6.9px;font-weight:400;color:#303030;white-space:pre;left:1140.50px;width:29.50px;text-align:right;transform-origin:100% 50%;transform:scaleX(0.880);">24.050 W</div><div style="position:absolute;top:60.34px;height:9.66px;line-height:9.66px;font-size:6.9px;font-weight:400;color:#303030;white-space:pre;left:1183.27px;width:33.33px;text-align:right;transform-origin:100% 50%;transform:scaleX(0.880);">242.648 W</div><div style="position:absolute;top:60.34px;height:9.66px;line-height:9.66px;font-size:6.9px;font-weight:400;color:#303030;white-space:pre;left:1230.17px;width:33.33px;text-align:right;transform-origin:100% 50%;transform:scaleX(0.880);">177.231 W</div><div style="position:absolute;top:70.29px;height:9.66px;line-height:9.66px;font-size:6.9px;font-weight:400;color:#303030;white-space:pre;left:977.80px;transform-origin:0 50%;transform:scaleX(0.870);">System Agent Power</div><div style="position:absolute;top:70.29px;height:9.66px;line-height:9.66px;font-size:6.9px;font-weight:400;color:#303030;white-space:pre;left:1097.73px;width:25.67px;text-align:right;transform-origin:100% 50%;transform:scaleX(0.880);">4.048 W</div><div style="position:absolute;top:70.29px;height:9.66px;line-height:9.66px;font-size:6.9px;font-weight:400;color:#303030;white-space:pre;left:1144.33px;width:25.67px;text-align:right;transform-origin:100% 50%;transform:scaleX(0.880);">3.867 W</div><div style="position:absolute;top:70.29px;height:9.66px;line-height:9.66px;font-size:6.9px;font-weight:400;color:#303030;white-space:pre;left:1190.93px;width:25.67px;text-align:right;transform-origin:100% 50%;transform:scaleX(0.880);">8.312 W</div><div style="position:absolute;top:70.29px;height:9.66px;line-height:9.66px;font-size:6.9px;font-weight:400;color:#303030;white-space:pre;left:1237.83px;width:25.67px;text-align:right;transform-origin:100% 50%;transform:scaleX(0.880);">4.044 W</div><div style="position:absolute;top:80.24px;height:9.66px;line-height:9.66px;font-size:6.9px;font-weight:400;color:#303030;white-space:pre;left:977.80px;transform-origin:0 50%;transform:scaleX(0.870);">Rest-of-Chip Power</div><div style="position:absolute;top:80.24px;height:9.66px;line-height:9.66px;font-size:6.9px;font-weight:400;color:#303030;white-space:pre;left:1097.73px;width:25.67px;text-align:right;transform-origin:100% 50%;transform:scaleX(0.880);">0.000 W</div><div style="position:absolute;top:80.24px;height:9.66px;line-height:9.66px;font-size:6.9px;font-weight:400;color:#303030;white-space:pre;left:1144.33px;width:25.67px;text-align:right;transform-origin:100% 50%;transform:scaleX(0.880);">0.000 W</div><div style="position:absolute;top:80.24px;height:9.66px;line-height:9.66px;font-size:6.9px;font-weight:400;color:#303030;white-space:pre;left:1190.93px;width:25.67px;text-align:right;transform-origin:100% 50%;transform:scaleX(0.880);">0.022 W</div><div style="position:absolute;top:80.24px;height:9.66px;line-height:9.66px;font-size:6.9px;font-weight:400;color:#303030;white-space:pre;left:1237.83px;width:25.67px;text-align:right;transform-origin:100% 50%;transform:scaleX(0.880);">0.000 W</div><div style="position:absolute;top:90.19px;height:9.66px;line-height:9.66px;font-size:6.9px;font-weight:400;color:#303030;white-space:pre;left:977.80px;transform-origin:0 50%;transform:scaleX(0.870);">PCH Power</div><div style="position:absolute;top:90.19px;height:9.66px;line-height:9.66px;font-size:6.9px;font-weight:400;color:#303030;white-space:pre;left:1097.73px;width:25.67px;text-align:right;transform-origin:100% 50%;transform:scaleX(0.880);">0.000 W</div><div style="position:absolute;top:90.19px;height:9.66px;line-height:9.66px;font-size:6.9px;font-weight:400;color:#303030;white-space:pre;left:1144.33px;width:25.67px;text-align:right;transform-origin:100% 50%;transform:scaleX(0.880);">0.000 W</div><div style="position:absolute;top:90.19px;height:9.66px;line-height:9.66px;font-size:6.9px;font-weight:400;color:#303030;white-space:pre;left:1190.93px;width:25.67px;text-align:right;transform-origin:100% 50%;transform:scaleX(0.880);">0.035 W</div><div style="position:absolute;top:90.19px;height:9.66px;line-height:9.66px;font-size:6.9px;font-weight:400;color:#303030;white-space:pre;left:1237.83px;width:25.67px;text-align:right;transform-origin:100% 50%;transform:scaleX(0.880);">0.000 W</div><div style="position:absolute;top:100.14px;height:9.66px;line-height:9.66px;font-size:6.9px;font-weight:400;color:#303030;white-space:pre;left:977.80px;transform-origin:0 50%;transform:scaleX(0.870);">PL1 Power Limit (Static)</div><div style="position:absolute;top:100.14px;height:9.66px;line-height:9.66px;font-size:6.9px;font-weight:400;color:#303030;white-space:pre;left:1097.73px;width:25.67px;text-align:right;transform-origin:100% 50%;transform:scaleX(0.880);">350.0 W</div><div style="position:absolute;top:100.14px;height:9.66px;line-height:9.66px;font-size:6.9px;font-weight:400;color:#303030;white-space:pre;left:1144.33px;width:25.67px;text-align:right;transform-origin:100% 50%;transform:scaleX(0.880);">350.0 W</div><div style="position:absolute;top:100.14px;height:9.66px;line-height:9.66px;font-size:6.9px;font-weight:400;color:#303030;white-space:pre;left:1190.93px;width:25.67px;text-align:right;transform-origin:100% 50%;transform:scaleX(0.880);">350.0 W</div><div style="position:absolute;top:100.14px;height:9.66px;line-height:9.66px;font-size:6.9px;font-weight:400;color:#303030;white-space:pre;left:1237.83px;width:25.67px;text-align:right;transform-origin:100% 50%;transform:scaleX(0.880);">350.0 W</div><div style="position:absolute;top:110.09px;height:9.66px;line-height:9.66px;font-size:6.9px;font-weight:400;color:#303030;white-space:pre;left:977.80px;transform-origin:0 50%;transform:scaleX(0.870);">PL2 Power Limit (Static)</div><div style="position:absolute;top:110.09px;height:9.66px;line-height:9.66px;font-size:6.9px;font-weight:400;color:#303030;white-space:pre;left:1097.73px;width:25.67px;text-align:right;transform-origin:100% 50%;transform:scaleX(0.880);">350.0 W</div><div style="position:absolute;top:110.09px;height:9.66px;line-height:9.66px;font-size:6.9px;font-weight:400;color:#303030;white-space:pre;left:1144.33px;width:25.67px;text-align:right;transform-origin:100% 50%;transform:scaleX(0.880);">350.0 W</div><div style="position:absolute;top:110.09px;height:9.66px;line-height:9.66px;font-size:6.9px;font-weight:400;color:#303030;white-space:pre;left:1190.93px;width:25.67px;text-align:right;transform-origin:100% 50%;transform:scaleX(0.880);">350.0 W</div><div style="position:absolute;top:110.09px;height:9.66px;line-height:9.66px;font-size:6.9px;font-weight:400;color:#303030;white-space:pre;left:1237.83px;width:25.67px;text-align:right;transform-origin:100% 50%;transform:scaleX(0.880);">350.0 W</div><div style="position:absolute;top:129.78px;height:10.08px;line-height:10.08px;font-size:7.2px;font-weight:700;color:#1a1a1a;white-space:pre;left:977.80px;transform-origin:0 50%;transform:scaleX(0.950);">CPU [#0]: Intel Core Ultra 9 285K: C-State Residency</div><div style="position:absolute;top:139.94px;height:9.66px;line-height:9.66px;font-size:6.9px;font-weight:400;color:#303030;white-space:pre;left:987.20px;transform-origin:0 50%;transform:scaleX(0.870);">Core C0 Residency</div><div style="position:absolute;top:139.94px;height:9.66px;line-height:9.66px;font-size:6.9px;font-weight:400;color:#303030;white-space:pre;left:1098.10px;width:25.30px;text-align:right;transform-origin:100% 50%;transform:scaleX(0.880);">100.0 %</div><div style="position:absolute;top:139.94px;height:9.66px;line-height:9.66px;font-size:6.9px;font-weight:400;color:#303030;white-space:pre;left:1152.38px;width:17.62px;text-align:right;transform-origin:100% 50%;transform:scaleX(0.880);">0.0 %</div><div style="position:absolute;top:139.94px;height:9.66px;line-height:9.66px;font-size:6.9px;font-weight:400;color:#303030;white-space:pre;left:1191.30px;width:25.30px;text-align:right;transform-origin:100% 50%;transform:scaleX(0.880);">100.0 %</div><div style="position:absolute;top:139.94px;height:9.66px;line-height:9.66px;font-size:6.9px;font-weight:400;color:#303030;white-space:pre;left:1242.05px;width:21.45px;text-align:right;transform-origin:100% 50%;transform:scaleX(0.880);">71.0 %</div><div style="position:absolute;top:149.89px;height:9.66px;line-height:9.66px;font-size:6.9px;font-weight:400;color:#303030;white-space:pre;left:987.20px;transform-origin:0 50%;transform:scaleX(0.870);">Core C1 Residency</div><div style="position:absolute;top:149.89px;height:9.66px;line-height:9.66px;font-size:6.9px;font-weight:400;color:#303030;white-space:pre;left:1105.78px;width:17.62px;text-align:right;transform-origin:100% 50%;transform:scaleX(0.880);">0.0 %</div><div style="position:absolute;top:149.89px;height:9.66px;line-height:9.66px;font-size:6.9px;font-weight:400;color:#303030;white-space:pre;left:1152.38px;width:17.62px;text-align:right;transform-origin:100% 50%;transform:scaleX(0.880);">0.0 %</div><div style="position:absolute;top:149.89px;height:9.66px;line-height:9.66px;font-size:6.9px;font-weight:400;color:#303030;white-space:pre;left:1191.30px;width:25.30px;text-align:right;transform-origin:100% 50%;transform:scaleX(0.880);">100.0 %</div><div style="position:absolute;top:149.89px;height:9.66px;line-height:9.66px;font-size:6.9px;font-weight:400;color:#303030;white-space:pre;left:1242.05px;width:21.45px;text-align:right;transform-origin:100% 50%;transform:scaleX(0.880);">29.0 %</div><div style="position:absolute;top:169.58px;height:10.08px;line-height:10.08px;font-size:7.2px;font-weight:700;color:#1a1a1a;white-space:pre;left:977.80px;transform-origin:0 50%;transform:scaleX(0.950);">Memory Timings</div><div style="position:absolute;top:179.74px;height:9.66px;line-height:9.66px;font-size:6.9px;font-weight:400;color:#303030;white-space:pre;left:977.80px;transform-origin:0 50%;transform:scaleX(0.870);">VccCLK</div><div style="position:absolute;top:179.74px;height:9.66px;line-height:9.66px;font-size:6.9px;font-weight:400;color:#303030;white-space:pre;left:1099.63px;width:23.77px;text-align:right;transform-origin:100% 50%;transform:scaleX(0.880);">0.995 V</div><div style="position:absolute;top:179.74px;height:9.66px;line-height:9.66px;font-size:6.9px;font-weight:400;color:#303030;white-space:pre;left:1146.23px;width:23.77px;text-align:right;transform-origin:100% 50%;transform:scaleX(0.880);">0.995 V</div><div style="position:absolute;top:179.74px;height:9.66px;line-height:9.66px;font-size:6.9px;font-weight:400;color:#303030;white-space:pre;left:1192.83px;width:23.77px;text-align:right;transform-origin:100% 50%;transform:scaleX(0.880);">0.995 V</div><div style="position:absolute;top:179.74px;height:9.66px;line-height:9.66px;font-size:6.9px;font-weight:400;color:#303030;white-space:pre;left:1239.73px;width:23.77px;text-align:right;transform-origin:100% 50%;transform:scaleX(0.880);">0.995 V</div><div style="position:absolute;top:189.69px;height:9.66px;line-height:9.66px;font-size:6.9px;font-weight:400;color:#303030;white-space:pre;left:977.80px;transform-origin:0 50%;transform:scaleX(0.870);">VccDDQ</div><div style="position:absolute;top:189.69px;height:9.66px;line-height:9.66px;font-size:6.9px;font-weight:400;color:#303030;white-space:pre;left:1099.63px;width:23.77px;text-align:right;transform-origin:100% 50%;transform:scaleX(0.880);">0.995 V</div><div style="position:absolute;top:189.69px;height:9.66px;line-height:9.66px;font-size:6.9px;font-weight:400;color:#303030;white-space:pre;left:1146.23px;width:23.77px;text-align:right;transform-origin:100% 50%;transform:scaleX(0.880);">0.995 V</div><div style="position:absolute;top:189.69px;height:9.66px;line-height:9.66px;font-size:6.9px;font-weight:400;color:#303030;white-space:pre;left:1192.83px;width:23.77px;text-align:right;transform-origin:100% 50%;transform:scaleX(0.880);">0.995 V</div><div style="position:absolute;top:189.69px;height:9.66px;line-height:9.66px;font-size:6.9px;font-weight:400;color:#303030;white-space:pre;left:1239.73px;width:23.77px;text-align:right;transform-origin:100% 50%;transform:scaleX(0.880);">0.995 V</div><div style="position:absolute;top:199.64px;height:9.66px;line-height:9.66px;font-size:6.9px;font-weight:400;color:#303030;white-space:pre;left:977.80px;transform-origin:0 50%;transform:scaleX(0.870);">VccIOG</div><div style="position:absolute;top:199.64px;height:9.66px;line-height:9.66px;font-size:6.9px;font-weight:400;color:#303030;white-space:pre;left:1099.63px;width:23.77px;text-align:right;transform-origin:100% 50%;transform:scaleX(0.880);">0.995 V</div><div style="position:absolute;top:199.64px;height:9.66px;line-height:9.66px;font-size:6.9px;font-weight:400;color:#303030;white-space:pre;left:1146.23px;width:23.77px;text-align:right;transform-origin:100% 50%;transform:scaleX(0.880);">0.995 V</div><div style="position:absolute;top:199.64px;height:9.66px;line-height:9.66px;font-size:6.9px;font-weight:400;color:#303030;white-space:pre;left:1192.83px;width:23.77px;text-align:right;transform-origin:100% 50%;transform:scaleX(0.880);">0.995 V</div><div style="position:absolute;top:199.64px;height:9.66px;line-height:9.66px;font-size:6.9px;font-weight:400;color:#303030;white-space:pre;left:1239.73px;width:23.77px;text-align:right;transform-origin:100% 50%;transform:scaleX(0.880);">0.995 V</div><div style="position:absolute;top:209.59px;height:9.66px;line-height:9.66px;font-size:6.9px;font-weight:400;color:#303030;white-space:pre;left:977.80px;transform-origin:0 50%;transform:scaleX(0.870);">Memory Clock</div><div style="position:absolute;top:209.59px;height:9.66px;line-height:9.66px;font-size:6.9px;font-weight:400;color:#303030;white-space:pre;left:1084.32px;width:39.08px;text-align:right;transform-origin:100% 50%;transform:scaleX(0.880);">5,985.5 MHz</div><div style="position:absolute;top:209.59px;height:9.66px;line-height:9.66px;font-size:6.9px;font-weight:400;color:#303030;white-space:pre;left:1130.92px;width:39.08px;text-align:right;transform-origin:100% 50%;transform:scaleX(0.880);">5,984.9 MHz</div><div style="position:absolute;top:209.59px;height:9.66px;line-height:9.66px;font-size:6.9px;font-weight:400;color:#303030;white-space:pre;left:1177.52px;width:39.08px;text-align:right;transform-origin:100% 50%;transform:scaleX(0.880);">5,985.8 MHz</div><div style="position:absolute;top:209.59px;height:9.66px;line-height:9.66px;font-size:6.9px;font-weight:400;color:#303030;white-space:pre;left:1224.42px;width:39.08px;text-align:right;transform-origin:100% 50%;transform:scaleX(0.880);">5,985.4 MHz</div><div style="position:absolute;top:219.54px;height:9.66px;line-height:9.66px;font-size:6.9px;font-weight:400;color:#303030;white-space:pre;left:977.80px;transform-origin:0 50%;transform:scaleX(0.870);">Memory Clock Ratio</div><div style="position:absolute;top:219.54px;height:9.66px;line-height:9.66px;font-size:6.9px;font-weight:400;color:#303030;white-space:pre;left:1100.79px;width:22.61px;text-align:right;transform-origin:100% 50%;transform:scaleX(0.880);">15.00 x</div><div style="position:absolute;top:219.54px;height:9.66px;line-height:9.66px;font-size:6.9px;font-weight:400;color:#303030;white-space:pre;left:1147.39px;width:22.61px;text-align:right;transform-origin:100% 50%;transform:scaleX(0.880);">15.00 x</div><div style="position:absolute;top:219.54px;height:9.66px;line-height:9.66px;font-size:6.9px;font-weight:400;color:#303030;white-space:pre;left:1193.99px;width:22.61px;text-align:right;transform-origin:100% 50%;transform:scaleX(0.880);">15.00 x</div><div style="position:absolute;top:219.54px;height:9.66px;line-height:9.66px;font-size:6.9px;font-weight:400;color:#303030;white-space:pre;left:1240.89px;width:22.61px;text-align:right;transform-origin:100% 50%;transform:scaleX(0.880);">15.00 x</div><div style="position:absolute;top:229.49px;height:9.66px;line-height:9.66px;font-size:6.9px;font-weight:400;color:#303030;white-space:pre;left:977.80px;transform-origin:0 50%;transform:scaleX(0.870);">Tcas</div><div style="position:absolute;top:229.49px;height:9.66px;line-height:9.66px;font-size:6.9px;font-weight:400;color:#303030;white-space:pre;left:1109.73px;width:13.67px;text-align:right;transform-origin:100% 50%;transform:scaleX(0.880);">30 T</div><div style="position:absolute;top:229.49px;height:9.66px;line-height:9.66px;font-size:6.9px;font-weight:400;color:#303030;white-space:pre;left:1156.33px;width:13.67px;text-align:right;transform-origin:100% 50%;transform:scaleX(0.880);">30 T</div><div style="position:absolute;top:229.49px;height:9.66px;line-height:9.66px;font-size:6.9px;font-weight:400;color:#303030;white-space:pre;left:1202.93px;width:13.67px;text-align:right;transform-origin:100% 50%;transform:scaleX(0.880);">30 T</div><div style="position:absolute;top:239.44px;height:9.66px;line-height:9.66px;font-size:6.9px;font-weight:400;color:#303030;white-space:pre;left:977.80px;transform-origin:0 50%;transform:scaleX(0.870);">Trcd</div><div style="position:absolute;top:239.44px;height:9.66px;line-height:9.66px;font-size:6.9px;font-weight:400;color:#303030;white-space:pre;left:1109.73px;width:13.67px;text-align:right;transform-origin:100% 50%;transform:scaleX(0.880);">38 T</div><div style="position:absolute;top:239.44px;height:9.66px;line-height:9.66px;font-size:6.9px;font-weight:400;color:#303030;white-space:pre;left:1156.33px;width:13.67px;text-align:right;transform-origin:100% 50%;transform:scaleX(0.880);">38 T</div><div style="position:absolute;top:239.44px;height:9.66px;line-height:9.66px;font-size:6.9px;font-weight:400;color:#303030;white-space:pre;left:1202.93px;width:13.67px;text-align:right;transform-origin:100% 50%;transform:scaleX(0.880);">38 T</div><div style="position:absolute;top:249.39px;height:9.66px;line-height:9.66px;font-size:6.9px;font-weight:400;color:#303030;white-space:pre;left:977.80px;transform-origin:0 50%;transform:scaleX(0.870);">Trp</div><div style="position:absolute;top:249.39px;height:9.66px;line-height:9.66px;font-size:6.9px;font-weight:400;color:#303030;white-space:pre;left:1109.73px;width:13.67px;text-align:right;transform-origin:100% 50%;transform:scaleX(0.880);">38 T</div><div style="position:absolute;top:249.39px;height:9.66px;line-height:9.66px;font-size:6.9px;font-weight:400;color:#303030;white-space:pre;left:1156.33px;width:13.67px;text-align:right;transform-origin:100% 50%;transform:scaleX(0.880);">38 T</div><div style="position:absolute;top:249.39px;height:9.66px;line-height:9.66px;font-size:6.9px;font-weight:400;color:#303030;white-space:pre;left:1202.93px;width:13.67px;text-align:right;transform-origin:100% 50%;transform:scaleX(0.880);">38 T</div><div style="position:absolute;top:259.35px;height:9.66px;line-height:9.66px;font-size:6.9px;font-weight:400;color:#303030;white-space:pre;left:977.80px;transform-origin:0 50%;transform:scaleX(0.870);">Tras</div><div style="position:absolute;top:259.35px;height:9.66px;line-height:9.66px;font-size:6.9px;font-weight:400;color:#303030;white-space:pre;left:1109.73px;width:13.67px;text-align:right;transform-origin:100% 50%;transform:scaleX(0.880);">76 T</div><div style="position:absolute;top:259.35px;height:9.66px;line-height:9.66px;font-size:6.9px;font-weight:400;color:#303030;white-space:pre;left:1156.33px;width:13.67px;text-align:right;transform-origin:100% 50%;transform:scaleX(0.880);">76 T</div><div style="position:absolute;top:259.35px;height:9.66px;line-height:9.66px;font-size:6.9px;font-weight:400;color:#303030;white-space:pre;left:1202.93px;width:13.67px;text-align:right;transform-origin:100% 50%;transform:scaleX(0.880);">76 T</div><div style="position:absolute;top:269.30px;height:9.66px;line-height:9.66px;font-size:6.9px;font-weight:400;color:#303030;white-space:pre;left:977.80px;transform-origin:0 50%;transform:scaleX(0.870);">Trc</div><div style="position:absolute;top:269.30px;height:9.66px;line-height:9.66px;font-size:6.9px;font-weight:400;color:#303030;white-space:pre;left:1106.42px;width:16.98px;text-align:right;transform-origin:100% 50%;transform:scaleX(0.880);">114 T</div><div style="position:absolute;top:269.30px;height:9.66px;line-height:9.66px;font-size:6.9px;font-weight:400;color:#303030;white-space:pre;left:1153.02px;width:16.98px;text-align:right;transform-origin:100% 50%;transform:scaleX(0.880);">114 T</div><div style="position:absolute;top:269.30px;height:9.66px;line-height:9.66px;font-size:6.9px;font-weight:400;color:#303030;white-space:pre;left:1199.62px;width:16.98px;text-align:right;transform-origin:100% 50%;transform:scaleX(0.880);">114 T</div><div style="position:absolute;top:279.25px;height:9.66px;line-height:9.66px;font-size:6.9px;font-weight:400;color:#303030;white-space:pre;left:977.80px;transform-origin:0 50%;transform:scaleX(0.870);">Trfc</div><div style="position:absolute;top:279.25px;height:9.66px;line-height:9.66px;font-size:6.9px;font-weight:400;color:#303030;white-space:pre;left:1105.90px;width:17.50px;text-align:right;transform-origin:100% 50%;transform:scaleX(0.880);">480 T</div><div style="position:absolute;top:279.25px;height:9.66px;line-height:9.66px;font-size:6.9px;font-weight:400;color:#303030;white-space:pre;left:1152.50px;width:17.50px;text-align:right;transform-origin:100% 50%;transform:scaleX(0.880);">480 T</div><div style="position:absolute;top:279.25px;height:9.66px;line-height:9.66px;font-size:6.9px;font-weight:400;color:#303030;white-space:pre;left:1199.10px;width:17.50px;text-align:right;transform-origin:100% 50%;transform:scaleX(0.880);">480 T</div><div style="position:absolute;top:289.19px;height:9.66px;line-height:9.66px;font-size:6.9px;font-weight:400;color:#303030;white-space:pre;left:977.80px;transform-origin:0 50%;transform:scaleX(0.870);">Command Rate</div><div style="position:absolute;top:289.19px;height:9.66px;line-height:9.66px;font-size:6.9px;font-weight:400;color:#303030;white-space:pre;left:1113.56px;width:9.84px;text-align:right;transform-origin:100% 50%;transform:scaleX(0.880);">2 T</div><div style="position:absolute;top:289.19px;height:9.66px;line-height:9.66px;font-size:6.9px;font-weight:400;color:#303030;white-space:pre;left:1160.16px;width:9.84px;text-align:right;transform-origin:100% 50%;transform:scaleX(0.880);">2 T</div><div style="position:absolute;top:289.19px;height:9.66px;line-height:9.66px;font-size:6.9px;font-weight:400;color:#303030;white-space:pre;left:1206.76px;width:9.84px;text-align:right;transform-origin:100% 50%;transform:scaleX(0.880);">2 T</div><div style="position:absolute;top:299.15px;height:9.66px;line-height:9.66px;font-size:6.9px;font-weight:400;color:#303030;white-space:pre;left:977.80px;transform-origin:0 50%;transform:scaleX(0.870);">Gear Mode</div><div style="position:absolute;top:299.15px;height:9.66px;line-height:9.66px;font-size:6.9px;font-weight:400;color:#303030;white-space:pre;left:1119.56px;width:3.84px;text-align:right;transform-origin:100% 50%;transform:scaleX(0.880);">2</div><div style="position:absolute;top:299.15px;height:9.66px;line-height:9.66px;font-size:6.9px;font-weight:400;color:#303030;white-space:pre;left:1166.16px;width:3.84px;text-align:right;transform-origin:100% 50%;transform:scaleX(0.880);">2</div><div style="position:absolute;top:299.15px;height:9.66px;line-height:9.66px;font-size:6.9px;font-weight:400;color:#303030;white-space:pre;left:1212.76px;width:3.84px;text-align:right;transform-origin:100% 50%;transform:scaleX(0.880);">2</div><div style="position:absolute;top:318.83px;height:10.08px;line-height:10.08px;font-size:7.2px;font-weight:700;color:#1a1a1a;white-space:pre;left:977.80px;transform-origin:0 50%;transform:scaleX(0.950);">CPU [#0]: Intel Core Ultra 9 285K: Performance Limit Reasons</div><div style="position:absolute;top:329.00px;height:9.66px;line-height:9.66px;font-size:6.9px;font-weight:400;color:#303030;white-space:pre;left:987.20px;transform-origin:0 50%;transform:scaleX(0.870);">IA Limit Reasons</div><div style="position:absolute;top:329.00px;height:9.66px;line-height:9.66px;font-size:6.9px;font-weight:400;color:#303030;white-space:pre;left:1112.15px;width:11.25px;text-align:right;transform-origin:100% 50%;transform:scaleX(0.880);">Yes</div><div style="position:absolute;top:329.00px;height:9.66px;line-height:9.66px;font-size:6.9px;font-weight:400;color:#303030;white-space:pre;left:1161.19px;width:8.81px;text-align:right;transform-origin:100% 50%;transform:scaleX(0.880);">No</div><div style="position:absolute;top:329.00px;height:9.66px;line-height:9.66px;font-size:6.9px;font-weight:400;color:#303030;white-space:pre;left:1205.35px;width:11.25px;text-align:right;transform-origin:100% 50%;transform:scaleX(0.880);">Yes</div><div style="position:absolute;top:329.00px;height:9.66px;line-height:9.66px;font-size:6.9px;font-weight:400;color:#303030;white-space:pre;left:1243.95px;width:19.55px;text-align:right;transform-origin:100% 50%;transform:scaleX(0.880);">100 %</div><div style="position:absolute;top:338.94px;height:9.66px;line-height:9.66px;font-size:6.9px;font-weight:400;color:#303030;white-space:pre;left:987.20px;transform-origin:0 50%;transform:scaleX(0.870);">GT Limit Reasons</div><div style="position:absolute;top:338.94px;height:9.66px;line-height:9.66px;font-size:6.9px;font-weight:400;color:#303030;white-space:pre;left:1114.59px;width:8.81px;text-align:right;transform-origin:100% 50%;transform:scaleX(0.880);">No</div><div style="position:absolute;top:338.94px;height:9.66px;line-height:9.66px;font-size:6.9px;font-weight:400;color:#303030;white-space:pre;left:1161.19px;width:8.81px;text-align:right;transform-origin:100% 50%;transform:scaleX(0.880);">No</div><div style="position:absolute;top:338.94px;height:9.66px;line-height:9.66px;font-size:6.9px;font-weight:400;color:#303030;white-space:pre;left:1207.79px;width:8.81px;text-align:right;transform-origin:100% 50%;transform:scaleX(0.880);">No</div><div style="position:absolute;top:338.94px;height:9.66px;line-height:9.66px;font-size:6.9px;font-weight:400;color:#303030;white-space:pre;left:1251.62px;width:11.88px;text-align:right;transform-origin:100% 50%;transform:scaleX(0.880);">0 %</div><div style="position:absolute;top:348.90px;height:9.66px;line-height:9.66px;font-size:6.9px;font-weight:400;color:#303030;white-space:pre;left:987.20px;transform-origin:0 50%;transform:scaleX(0.870);">Ring Limit Reasons</div><div style="position:absolute;top:348.90px;height:9.66px;line-height:9.66px;font-size:6.9px;font-weight:400;color:#303030;white-space:pre;left:1114.59px;width:8.81px;text-align:right;transform-origin:100% 50%;transform:scaleX(0.880);">No</div><div style="position:absolute;top:348.90px;height:9.66px;line-height:9.66px;font-size:6.9px;font-weight:400;color:#303030;white-space:pre;left:1161.19px;width:8.81px;text-align:right;transform-origin:100% 50%;transform:scaleX(0.880);">No</div><div style="position:absolute;top:348.90px;height:9.66px;line-height:9.66px;font-size:6.9px;font-weight:400;color:#303030;white-space:pre;left:1207.79px;width:8.81px;text-align:right;transform-origin:100% 50%;transform:scaleX(0.880);">No</div><div style="position:absolute;top:348.90px;height:9.66px;line-height:9.66px;font-size:6.9px;font-weight:400;color:#303030;white-space:pre;left:1251.62px;width:11.88px;text-align:right;transform-origin:100% 50%;transform:scaleX(0.880);">0 %</div><div style="position:absolute;top:368.58px;height:10.08px;line-height:10.08px;font-size:7.2px;font-weight:700;color:#1a1a1a;white-space:pre;left:977.80px;transform-origin:0 50%;transform:scaleX(0.950);">Galaxy Microsystems Ltd. GALAX Z890 BOOMSTAR D5 WiFi (Intel PCH)</div><div style="position:absolute;top:378.75px;height:9.66px;line-height:9.66px;font-size:6.9px;font-weight:400;color:#303030;white-space:pre;left:977.80px;transform-origin:0 50%;transform:scaleX(0.870);">PCH Temperature</div><div style="position:absolute;top:378.75px;height:9.66px;line-height:9.66px;font-size:6.9px;font-weight:400;color:#303030;white-space:pre;left:1101.53px;width:21.88px;text-align:right;transform-origin:100% 50%;transform:scaleX(0.930);">33.0 <span style="letter-spacing:-1.2px">°</span>C</div><div style="position:absolute;top:378.75px;height:9.66px;line-height:9.66px;font-size:6.9px;font-weight:400;color:#303030;white-space:pre;left:1148.12px;width:21.88px;text-align:right;transform-origin:100% 50%;transform:scaleX(0.930);">28.0 <span style="letter-spacing:-1.2px">°</span>C</div><div style="position:absolute;top:378.75px;height:9.66px;line-height:9.66px;font-size:6.9px;font-weight:400;color:#303030;white-space:pre;left:1194.72px;width:21.88px;text-align:right;transform-origin:100% 50%;transform:scaleX(0.930);">34.0 <span style="letter-spacing:-1.2px">°</span>C</div><div style="position:absolute;top:378.75px;height:9.66px;line-height:9.66px;font-size:6.9px;font-weight:400;color:#303030;white-space:pre;left:1241.62px;width:21.88px;text-align:right;transform-origin:100% 50%;transform:scaleX(0.930);">31.4 <span style="letter-spacing:-1.2px">°</span>C</div><div style="position:absolute;top:388.69px;height:9.66px;line-height:9.66px;font-size:6.9px;font-weight:400;color:#303030;white-space:pre;left:977.80px;transform-origin:0 50%;transform:scaleX(0.870);">PCH Temperature2</div><div style="position:absolute;top:388.69px;height:9.66px;line-height:9.66px;font-size:6.9px;font-weight:400;color:#303030;white-space:pre;left:1101.53px;width:21.88px;text-align:right;transform-origin:100% 50%;transform:scaleX(0.930);">32.0 <span style="letter-spacing:-1.2px">°</span>C</div><div style="position:absolute;top:388.69px;height:9.66px;line-height:9.66px;font-size:6.9px;font-weight:400;color:#303030;white-space:pre;left:1148.12px;width:21.88px;text-align:right;transform-origin:100% 50%;transform:scaleX(0.930);">26.0 <span style="letter-spacing:-1.2px">°</span>C</div><div style="position:absolute;top:388.69px;height:9.66px;line-height:9.66px;font-size:6.9px;font-weight:400;color:#303030;white-space:pre;left:1194.72px;width:21.88px;text-align:right;transform-origin:100% 50%;transform:scaleX(0.930);">33.0 <span style="letter-spacing:-1.2px">°</span>C</div><div style="position:absolute;top:388.69px;height:9.66px;line-height:9.66px;font-size:6.9px;font-weight:400;color:#303030;white-space:pre;left:1241.62px;width:21.88px;text-align:right;transform-origin:100% 50%;transform:scaleX(0.930);">30.3 <span style="letter-spacing:-1.2px">°</span>C</div><div style="position:absolute;top:398.65px;height:9.66px;line-height:9.66px;font-size:6.9px;font-weight:400;color:#303030;white-space:pre;left:977.80px;transform-origin:0 50%;transform:scaleX(0.870);">PCH Temperature3</div><div style="position:absolute;top:398.65px;height:9.66px;line-height:9.66px;font-size:6.9px;font-weight:400;color:#303030;white-space:pre;left:1101.53px;width:21.88px;text-align:right;transform-origin:100% 50%;transform:scaleX(0.930);">32.0 <span style="letter-spacing:-1.2px">°</span>C</div><div style="position:absolute;top:398.65px;height:9.66px;line-height:9.66px;font-size:6.9px;font-weight:400;color:#303030;white-space:pre;left:1148.12px;width:21.88px;text-align:right;transform-origin:100% 50%;transform:scaleX(0.930);">27.0 <span style="letter-spacing:-1.2px">°</span>C</div><div style="position:absolute;top:398.65px;height:9.66px;line-height:9.66px;font-size:6.9px;font-weight:400;color:#303030;white-space:pre;left:1194.72px;width:21.88px;text-align:right;transform-origin:100% 50%;transform:scaleX(0.930);">33.0 <span style="letter-spacing:-1.2px">°</span>C</div><div style="position:absolute;top:398.65px;height:9.66px;line-height:9.66px;font-size:6.9px;font-weight:400;color:#303030;white-space:pre;left:1241.62px;width:21.88px;text-align:right;transform-origin:100% 50%;transform:scaleX(0.930);">30.8 <span style="letter-spacing:-1.2px">°</span>C</div><div style="position:absolute;top:408.60px;height:9.66px;line-height:9.66px;font-size:6.9px;font-weight:400;color:#303030;white-space:pre;left:977.80px;transform-origin:0 50%;transform:scaleX(0.870);">PCH Temperature4</div><div style="position:absolute;top:408.60px;height:9.66px;line-height:9.66px;font-size:6.9px;font-weight:400;color:#303030;white-space:pre;left:1101.53px;width:21.88px;text-align:right;transform-origin:100% 50%;transform:scaleX(0.930);">33.0 <span style="letter-spacing:-1.2px">°</span>C</div><div style="position:absolute;top:408.60px;height:9.66px;line-height:9.66px;font-size:6.9px;font-weight:400;color:#303030;white-space:pre;left:1148.12px;width:21.88px;text-align:right;transform-origin:100% 50%;transform:scaleX(0.930);">27.0 <span style="letter-spacing:-1.2px">°</span>C</div><div style="position:absolute;top:408.60px;height:9.66px;line-height:9.66px;font-size:6.9px;font-weight:400;color:#303030;white-space:pre;left:1194.72px;width:21.88px;text-align:right;transform-origin:100% 50%;transform:scaleX(0.930);">34.0 <span style="letter-spacing:-1.2px">°</span>C</div><div style="position:absolute;top:408.60px;height:9.66px;line-height:9.66px;font-size:6.9px;font-weight:400;color:#303030;white-space:pre;left:1241.62px;width:21.88px;text-align:right;transform-origin:100% 50%;transform:scaleX(0.930);">31.6 <span style="letter-spacing:-1.2px">°</span>C</div><div style="position:absolute;top:428.28px;height:10.08px;line-height:10.08px;font-size:7.2px;font-weight:700;color:#1a1a1a;white-space:pre;left:977.80px;transform-origin:0 50%;transform:scaleX(0.950);">Galaxy Microsystems Ltd. GALAX Z890 BOOMSTAR D5 WiFi (ITE IT8625E)</div><div style="position:absolute;top:438.44px;height:9.66px;line-height:9.66px;font-size:6.9px;font-weight:400;color:#303030;white-space:pre;left:977.80px;transform-origin:0 50%;transform:scaleX(0.870);">Temperature 1</div><div style="position:absolute;top:438.44px;height:9.66px;line-height:9.66px;font-size:6.9px;font-weight:400;color:#303030;white-space:pre;left:1107.26px;width:16.14px;text-align:right;transform-origin:100% 50%;transform:scaleX(0.930);">74 <span style="letter-spacing:-1.2px">°</span>C</div><div style="position:absolute;top:438.44px;height:9.66px;line-height:9.66px;font-size:6.9px;font-weight:400;color:#303030;white-space:pre;left:1153.86px;width:16.14px;text-align:right;transform-origin:100% 50%;transform:scaleX(0.930);">31 <span style="letter-spacing:-1.2px">°</span>C</div><div style="position:absolute;top:438.44px;height:9.66px;line-height:9.66px;font-size:6.9px;font-weight:400;color:#303030;white-space:pre;left:1200.46px;width:16.14px;text-align:right;transform-origin:100% 50%;transform:scaleX(0.930);">75 <span style="letter-spacing:-1.2px">°</span>C</div><div style="position:absolute;top:438.44px;height:9.66px;line-height:9.66px;font-size:6.9px;font-weight:400;color:#303030;white-space:pre;left:1247.36px;width:16.14px;text-align:right;transform-origin:100% 50%;transform:scaleX(0.930);">61 <span style="letter-spacing:-1.2px">°</span>C</div><div style="position:absolute;top:448.39px;height:9.66px;line-height:9.66px;font-size:6.9px;font-weight:400;color:#303030;white-space:pre;left:977.80px;transform-origin:0 50%;transform:scaleX(0.870);">Temperature 2</div><div style="position:absolute;top:448.39px;height:9.66px;line-height:9.66px;font-size:6.9px;font-weight:400;color:#303030;white-space:pre;left:1107.26px;width:16.14px;text-align:right;transform-origin:100% 50%;transform:scaleX(0.930);">31 <span style="letter-spacing:-1.2px">°</span>C</div><div style="position:absolute;top:448.39px;height:9.66px;line-height:9.66px;font-size:6.9px;font-weight:400;color:#303030;white-space:pre;left:1153.86px;width:16.14px;text-align:right;transform-origin:100% 50%;transform:scaleX(0.930);">31 <span style="letter-spacing:-1.2px">°</span>C</div><div style="position:absolute;top:448.39px;height:9.66px;line-height:9.66px;font-size:6.9px;font-weight:400;color:#303030;white-space:pre;left:1200.46px;width:16.14px;text-align:right;transform-origin:100% 50%;transform:scaleX(0.930);">38 <span style="letter-spacing:-1.2px">°</span>C</div><div style="position:absolute;top:448.39px;height:9.66px;line-height:9.66px;font-size:6.9px;font-weight:400;color:#303030;white-space:pre;left:1247.36px;width:16.14px;text-align:right;transform-origin:100% 50%;transform:scaleX(0.930);">33 <span style="letter-spacing:-1.2px">°</span>C</div><div style="position:absolute;top:458.35px;height:9.66px;line-height:9.66px;font-size:6.9px;font-weight:400;color:#303030;white-space:pre;left:977.80px;transform-origin:0 50%;transform:scaleX(0.870);">Temperature 3</div><div style="position:absolute;top:458.35px;height:9.66px;line-height:9.66px;font-size:6.9px;font-weight:400;color:#303030;white-space:pre;left:1107.26px;width:16.14px;text-align:right;transform-origin:100% 50%;transform:scaleX(0.930);">74 <span style="letter-spacing:-1.2px">°</span>C</div><div style="position:absolute;top:458.35px;height:9.66px;line-height:9.66px;font-size:6.9px;font-weight:400;color:#303030;white-space:pre;left:1153.86px;width:16.14px;text-align:right;transform-origin:100% 50%;transform:scaleX(0.930);">31 <span style="letter-spacing:-1.2px">°</span>C</div><div style="position:absolute;top:458.35px;height:9.66px;line-height:9.66px;font-size:6.9px;font-weight:400;color:#303030;white-space:pre;left:1200.46px;width:16.14px;text-align:right;transform-origin:100% 50%;transform:scaleX(0.930);">75 <span style="letter-spacing:-1.2px">°</span>C</div><div style="position:absolute;top:458.35px;height:9.66px;line-height:9.66px;font-size:6.9px;font-weight:400;color:#303030;white-space:pre;left:1247.36px;width:16.14px;text-align:right;transform-origin:100% 50%;transform:scaleX(0.930);">61 <span style="letter-spacing:-1.2px">°</span>C</div><div style="position:absolute;top:468.30px;height:9.66px;line-height:9.66px;font-size:6.9px;font-weight:400;color:#303030;white-space:pre;left:977.80px;transform-origin:0 50%;transform:scaleX(0.870);">Vcore</div><div style="position:absolute;top:468.30px;height:9.66px;line-height:9.66px;font-size:6.9px;font-weight:400;color:#303030;white-space:pre;left:1099.63px;width:23.77px;text-align:right;transform-origin:100% 50%;transform:scaleX(0.880);">1.452 V</div><div style="position:absolute;top:468.30px;height:9.66px;line-height:9.66px;font-size:6.9px;font-weight:400;color:#303030;white-space:pre;left:1146.23px;width:23.77px;text-align:right;transform-origin:100% 50%;transform:scaleX(0.880);">1.441 V</div><div style="position:absolute;top:468.30px;height:9.66px;line-height:9.66px;font-size:6.9px;font-weight:400;color:#303030;white-space:pre;left:1192.83px;width:23.77px;text-align:right;transform-origin:100% 50%;transform:scaleX(0.880);">1.551 V</div><div style="position:absolute;top:468.30px;height:9.66px;line-height:9.66px;font-size:6.9px;font-weight:400;color:#303030;white-space:pre;left:1239.73px;width:23.77px;text-align:right;transform-origin:100% 50%;transform:scaleX(0.880);">1.462 V</div><div style="position:absolute;top:478.25px;height:9.66px;line-height:9.66px;font-size:6.9px;font-weight:400;color:#303030;white-space:pre;left:977.80px;transform-origin:0 50%;transform:scaleX(0.870);">Vccp2</div><div style="position:absolute;top:478.25px;height:9.66px;line-height:9.66px;font-size:6.9px;font-weight:400;color:#303030;white-space:pre;left:1099.63px;width:23.77px;text-align:right;transform-origin:100% 50%;transform:scaleX(0.880);">1.386 V</div><div style="position:absolute;top:478.25px;height:9.66px;line-height:9.66px;font-size:6.9px;font-weight:400;color:#303030;white-space:pre;left:1146.23px;width:23.77px;text-align:right;transform-origin:100% 50%;transform:scaleX(0.880);">1.375 V</div><div style="position:absolute;top:478.25px;height:9.66px;line-height:9.66px;font-size:6.9px;font-weight:400;color:#303030;white-space:pre;left:1192.83px;width:23.77px;text-align:right;transform-origin:100% 50%;transform:scaleX(0.880);">1.386 V</div><div style="position:absolute;top:478.25px;height:9.66px;line-height:9.66px;font-size:6.9px;font-weight:400;color:#303030;white-space:pre;left:1239.73px;width:23.77px;text-align:right;transform-origin:100% 50%;transform:scaleX(0.880);">1.383 V</div><div style="position:absolute;top:488.19px;height:9.66px;line-height:9.66px;font-size:6.9px;font-weight:400;color:#303030;white-space:pre;left:977.80px;transform-origin:0 50%;transform:scaleX(0.870);">+3.3V</div><div style="position:absolute;top:488.19px;height:9.66px;line-height:9.66px;font-size:6.9px;font-weight:400;color:#303030;white-space:pre;left:1099.63px;width:23.77px;text-align:right;transform-origin:100% 50%;transform:scaleX(0.880);">2.057 V</div><div style="position:absolute;top:488.19px;height:9.66px;line-height:9.66px;font-size:6.9px;font-weight:400;color:#303030;white-space:pre;left:1146.23px;width:23.77px;text-align:right;transform-origin:100% 50%;transform:scaleX(0.880);">2.046 V</div><div style="position:absolute;top:488.19px;height:9.66px;line-height:9.66px;font-size:6.9px;font-weight:400;color:#303030;white-space:pre;left:1192.83px;width:23.77px;text-align:right;transform-origin:100% 50%;transform:scaleX(0.880);">2.057 V</div><div style="position:absolute;top:488.19px;height:9.66px;line-height:9.66px;font-size:6.9px;font-weight:400;color:#303030;white-space:pre;left:1239.73px;width:23.77px;text-align:right;transform-origin:100% 50%;transform:scaleX(0.880);">2.057 V</div><div style="position:absolute;top:498.14px;height:9.66px;line-height:9.66px;font-size:6.9px;font-weight:400;color:#303030;white-space:pre;left:977.80px;transform-origin:0 50%;transform:scaleX(0.870);">+5V</div><div style="position:absolute;top:498.14px;height:9.66px;line-height:9.66px;font-size:6.9px;font-weight:400;color:#303030;white-space:pre;left:1099.63px;width:23.77px;text-align:right;transform-origin:100% 50%;transform:scaleX(0.880);">3.419 V</div><div style="position:absolute;top:498.14px;height:9.66px;line-height:9.66px;font-size:6.9px;font-weight:400;color:#303030;white-space:pre;left:1146.23px;width:23.77px;text-align:right;transform-origin:100% 50%;transform:scaleX(0.880);">3.419 V</div><div style="position:absolute;top:498.14px;height:9.66px;line-height:9.66px;font-size:6.9px;font-weight:400;color:#303030;white-space:pre;left:1192.83px;width:23.77px;text-align:right;transform-origin:100% 50%;transform:scaleX(0.880);">3.419 V</div><div style="position:absolute;top:498.14px;height:9.66px;line-height:9.66px;font-size:6.9px;font-weight:400;color:#303030;white-space:pre;left:1239.73px;width:23.77px;text-align:right;transform-origin:100% 50%;transform:scaleX(0.880);">3.419 V</div><div style="position:absolute;top:508.09px;height:9.66px;line-height:9.66px;font-size:6.9px;font-weight:400;color:#303030;white-space:pre;left:977.80px;transform-origin:0 50%;transform:scaleX(0.870);">+12V</div><div style="position:absolute;top:508.09px;height:9.66px;line-height:9.66px;font-size:6.9px;font-weight:400;color:#303030;white-space:pre;left:1099.63px;width:23.77px;text-align:right;transform-origin:100% 50%;transform:scaleX(0.880);">8.316 V</div><div style="position:absolute;top:508.09px;height:9.66px;line-height:9.66px;font-size:6.9px;font-weight:400;color:#303030;white-space:pre;left:1146.23px;width:23.77px;text-align:right;transform-origin:100% 50%;transform:scaleX(0.880);">8.316 V</div><div style="position:absolute;top:508.09px;height:9.66px;line-height:9.66px;font-size:6.9px;font-weight:400;color:#303030;white-space:pre;left:1192.83px;width:23.77px;text-align:right;transform-origin:100% 50%;transform:scaleX(0.880);">8.360 V</div><div style="position:absolute;top:508.09px;height:9.66px;line-height:9.66px;font-size:6.9px;font-weight:400;color:#303030;white-space:pre;left:1239.73px;width:23.77px;text-align:right;transform-origin:100% 50%;transform:scaleX(0.880);">8.329 V</div><div style="position:absolute;top:518.04px;height:9.66px;line-height:9.66px;font-size:6.9px;font-weight:400;color:#303030;white-space:pre;left:977.80px;transform-origin:0 50%;transform:scaleX(0.870);">VIN5</div><div style="position:absolute;top:518.04px;height:9.66px;line-height:9.66px;font-size:6.9px;font-weight:400;color:#303030;white-space:pre;left:1099.63px;width:23.77px;text-align:right;transform-origin:100% 50%;transform:scaleX(0.880);">1.969 V</div><div style="position:absolute;top:518.04px;height:9.66px;line-height:9.66px;font-size:6.9px;font-weight:400;color:#303030;white-space:pre;left:1146.23px;width:23.77px;text-align:right;transform-origin:100% 50%;transform:scaleX(0.880);">1.958 V</div><div style="position:absolute;top:518.04px;height:9.66px;line-height:9.66px;font-size:6.9px;font-weight:400;color:#303030;white-space:pre;left:1192.83px;width:23.77px;text-align:right;transform-origin:100% 50%;transform:scaleX(0.880);">1.980 V</div><div style="position:absolute;top:518.04px;height:9.66px;line-height:9.66px;font-size:6.9px;font-weight:400;color:#303030;white-space:pre;left:1239.73px;width:23.77px;text-align:right;transform-origin:100% 50%;transform:scaleX(0.880);">1.969 V</div><div style="position:absolute;top:527.99px;height:9.66px;line-height:9.66px;font-size:6.9px;font-weight:400;color:#303030;white-space:pre;left:977.80px;transform-origin:0 50%;transform:scaleX(0.870);">VIN6</div><div style="position:absolute;top:527.99px;height:9.66px;line-height:9.66px;font-size:6.9px;font-weight:400;color:#303030;white-space:pre;left:1099.63px;width:23.77px;text-align:right;transform-origin:100% 50%;transform:scaleX(0.880);">1.848 V</div><div style="position:absolute;top:527.99px;height:9.66px;line-height:9.66px;font-size:6.9px;font-weight:400;color:#303030;white-space:pre;left:1146.23px;width:23.77px;text-align:right;transform-origin:100% 50%;transform:scaleX(0.880);">1.848 V</div><div style="position:absolute;top:527.99px;height:9.66px;line-height:9.66px;font-size:6.9px;font-weight:400;color:#303030;white-space:pre;left:1192.83px;width:23.77px;text-align:right;transform-origin:100% 50%;transform:scaleX(0.880);">1.859 V</div><div style="position:absolute;top:527.99px;height:9.66px;line-height:9.66px;font-size:6.9px;font-weight:400;color:#303030;white-space:pre;left:1239.73px;width:23.77px;text-align:right;transform-origin:100% 50%;transform:scaleX(0.880);">1.851 V</div><div style="position:absolute;top:537.94px;height:9.66px;line-height:9.66px;font-size:6.9px;font-weight:400;color:#303030;white-space:pre;left:977.80px;transform-origin:0 50%;transform:scaleX(0.870);">3VSB</div><div style="position:absolute;top:537.94px;height:9.66px;line-height:9.66px;font-size:6.9px;font-weight:400;color:#303030;white-space:pre;left:1099.63px;width:23.77px;text-align:right;transform-origin:100% 50%;transform:scaleX(0.880);">3.344 V</div><div style="position:absolute;top:537.94px;height:9.66px;line-height:9.66px;font-size:6.9px;font-weight:400;color:#303030;white-space:pre;left:1146.23px;width:23.77px;text-align:right;transform-origin:100% 50%;transform:scaleX(0.880);">3.322 V</div><div style="position:absolute;top:537.94px;height:9.66px;line-height:9.66px;font-size:6.9px;font-weight:400;color:#303030;white-space:pre;left:1192.83px;width:23.77px;text-align:right;transform-origin:100% 50%;transform:scaleX(0.880);">3.344 V</div><div style="position:absolute;top:537.94px;height:9.66px;line-height:9.66px;font-size:6.9px;font-weight:400;color:#303030;white-space:pre;left:1239.73px;width:23.77px;text-align:right;transform-origin:100% 50%;transform:scaleX(0.880);">3.343 V</div><div style="position:absolute;top:547.89px;height:9.66px;line-height:9.66px;font-size:6.9px;font-weight:400;color:#303030;white-space:pre;left:977.80px;transform-origin:0 50%;transform:scaleX(0.870);">VBAT</div><div style="position:absolute;top:547.89px;height:9.66px;line-height:9.66px;font-size:6.9px;font-weight:400;color:#303030;white-space:pre;left:1099.63px;width:23.77px;text-align:right;transform-origin:100% 50%;transform:scaleX(0.880);">3.102 V</div><div style="position:absolute;top:547.89px;height:9.66px;line-height:9.66px;font-size:6.9px;font-weight:400;color:#303030;white-space:pre;left:1146.23px;width:23.77px;text-align:right;transform-origin:100% 50%;transform:scaleX(0.880);">3.102 V</div><div style="position:absolute;top:547.89px;height:9.66px;line-height:9.66px;font-size:6.9px;font-weight:400;color:#303030;white-space:pre;left:1192.83px;width:23.77px;text-align:right;transform-origin:100% 50%;transform:scaleX(0.880);">3.102 V</div><div style="position:absolute;top:547.89px;height:9.66px;line-height:9.66px;font-size:6.9px;font-weight:400;color:#303030;white-space:pre;left:1239.73px;width:23.77px;text-align:right;transform-origin:100% 50%;transform:scaleX(0.880);">3.102 V</div><div style="position:absolute;top:557.84px;height:9.66px;line-height:9.66px;font-size:6.9px;font-weight:400;color:#303030;white-space:pre;left:977.80px;transform-origin:0 50%;transform:scaleX(0.870);">AVCC3</div><div style="position:absolute;top:557.84px;height:9.66px;line-height:9.66px;font-size:6.9px;font-weight:400;color:#303030;white-space:pre;left:1099.63px;width:23.77px;text-align:right;transform-origin:100% 50%;transform:scaleX(0.880);">3.366 V</div><div style="position:absolute;top:557.84px;height:9.66px;line-height:9.66px;font-size:6.9px;font-weight:400;color:#303030;white-space:pre;left:1146.23px;width:23.77px;text-align:right;transform-origin:100% 50%;transform:scaleX(0.880);">3.344 V</div><div style="position:absolute;top:557.84px;height:9.66px;line-height:9.66px;font-size:6.9px;font-weight:400;color:#303030;white-space:pre;left:1192.83px;width:23.77px;text-align:right;transform-origin:100% 50%;transform:scaleX(0.880);">3.388 V</div><div style="position:absolute;top:557.84px;height:9.66px;line-height:9.66px;font-size:6.9px;font-weight:400;color:#303030;white-space:pre;left:1239.73px;width:23.77px;text-align:right;transform-origin:100% 50%;transform:scaleX(0.880);">3.366 V</div><div style="position:absolute;top:567.79px;height:9.66px;line-height:9.66px;font-size:6.9px;font-weight:400;color:#303030;white-space:pre;left:977.80px;transform-origin:0 50%;transform:scaleX(0.870);">Chassis</div><div style="position:absolute;top:567.79px;height:9.66px;line-height:9.66px;font-size:6.9px;font-weight:400;color:#303030;white-space:pre;left:1088.92px;width:34.48px;text-align:right;transform-origin:100% 50%;transform:scaleX(0.880);">1,991 RPM</div><div style="position:absolute;top:567.79px;height:9.66px;line-height:9.66px;font-size:6.9px;font-weight:400;color:#303030;white-space:pre;left:1141.27px;width:28.73px;text-align:right;transform-origin:100% 50%;transform:scaleX(0.880);">995 RPM</div><div style="position:absolute;top:567.79px;height:9.66px;line-height:9.66px;font-size:6.9px;font-weight:400;color:#303030;white-space:pre;left:1182.12px;width:34.48px;text-align:right;transform-origin:100% 50%;transform:scaleX(0.880);">2,027 RPM</div><div style="position:absolute;top:567.79px;height:9.66px;line-height:9.66px;font-size:6.9px;font-weight:400;color:#303030;white-space:pre;left:1229.02px;width:34.48px;text-align:right;transform-origin:100% 50%;transform:scaleX(0.880);">1,700 RPM</div><div style="position:absolute;top:577.74px;height:9.66px;line-height:9.66px;font-size:6.9px;font-weight:400;color:#303030;white-space:pre;left:977.80px;transform-origin:0 50%;transform:scaleX(0.870);">CPU</div><div style="position:absolute;top:577.74px;height:9.66px;line-height:9.66px;font-size:6.9px;font-weight:400;color:#303030;white-space:pre;left:1088.92px;width:34.48px;text-align:right;transform-origin:100% 50%;transform:scaleX(0.880);">3,082 RPM</div><div style="position:absolute;top:577.74px;height:9.66px;line-height:9.66px;font-size:6.9px;font-weight:400;color:#303030;white-space:pre;left:1135.52px;width:34.48px;text-align:right;transform-origin:100% 50%;transform:scaleX(0.880);">2,777 RPM</div><div style="position:absolute;top:577.74px;height:9.66px;line-height:9.66px;font-size:6.9px;font-weight:400;color:#303030;white-space:pre;left:1182.63px;width:33.97px;text-align:right;transform-origin:100% 50%;transform:scaleX(0.880);">3,110 RPM</div><div style="position:absolute;top:577.74px;height:9.66px;line-height:9.66px;font-size:6.9px;font-weight:400;color:#303030;white-space:pre;left:1229.02px;width:34.48px;text-align:right;transform-origin:100% 50%;transform:scaleX(0.880);">3,002 RPM</div><div style="position:absolute;top:587.69px;height:9.66px;line-height:9.66px;font-size:6.9px;font-weight:400;color:#303030;white-space:pre;left:977.80px;transform-origin:0 50%;transform:scaleX(0.870);">Power</div><div style="position:absolute;top:587.69px;height:9.66px;line-height:9.66px;font-size:6.9px;font-weight:400;color:#303030;white-space:pre;left:1088.92px;width:34.48px;text-align:right;transform-origin:100% 50%;transform:scaleX(0.880);">1,939 RPM</div><div style="position:absolute;top:587.69px;height:9.66px;line-height:9.66px;font-size:6.9px;font-weight:400;color:#303030;white-space:pre;left:1141.27px;width:28.73px;text-align:right;transform-origin:100% 50%;transform:scaleX(0.880);">948 RPM</div><div style="position:absolute;top:587.69px;height:9.66px;line-height:9.66px;font-size:6.9px;font-weight:400;color:#303030;white-space:pre;left:1182.12px;width:34.48px;text-align:right;transform-origin:100% 50%;transform:scaleX(0.880);">1,962 RPM</div><div style="position:absolute;top:587.69px;height:9.66px;line-height:9.66px;font-size:6.9px;font-weight:400;color:#303030;white-space:pre;left:1229.02px;width:34.48px;text-align:right;transform-origin:100% 50%;transform:scaleX(0.880);">1,648 RPM</div><div style="position:absolute;top:597.64px;height:9.66px;line-height:9.66px;font-size:6.9px;font-weight:400;color:#303030;white-space:pre;left:977.80px;transform-origin:0 50%;transform:scaleX(0.870);">Fan4</div><div style="position:absolute;top:597.64px;height:9.66px;line-height:9.66px;font-size:6.9px;font-weight:400;color:#303030;white-space:pre;left:1088.92px;width:34.48px;text-align:right;transform-origin:100% 50%;transform:scaleX(0.880);">1,945 RPM</div><div style="position:absolute;top:597.64px;height:9.66px;line-height:9.66px;font-size:6.9px;font-weight:400;color:#303030;white-space:pre;left:1135.52px;width:34.48px;text-align:right;transform-origin:100% 50%;transform:scaleX(0.880);">1,008 RPM</div><div style="position:absolute;top:597.64px;height:9.66px;line-height:9.66px;font-size:6.9px;font-weight:400;color:#303030;white-space:pre;left:1182.12px;width:34.48px;text-align:right;transform-origin:100% 50%;transform:scaleX(0.880);">1,950 RPM</div><div style="position:absolute;top:597.64px;height:9.66px;line-height:9.66px;font-size:6.9px;font-weight:400;color:#303030;white-space:pre;left:1229.02px;width:34.48px;text-align:right;transform-origin:100% 50%;transform:scaleX(0.880);">1,662 RPM</div><div style="position:absolute;top:607.59px;height:9.66px;line-height:9.66px;font-size:6.9px;font-weight:400;color:#303030;white-space:pre;left:977.80px;transform-origin:0 50%;transform:scaleX(0.870);">Chassis Intrusion</div><div style="position:absolute;top:607.59px;height:9.66px;line-height:9.66px;font-size:6.9px;font-weight:400;color:#303030;white-space:pre;left:1112.15px;width:11.25px;text-align:right;transform-origin:100% 50%;transform:scaleX(0.880);">Yes</div><div style="position:absolute;top:607.59px;height:9.66px;line-height:9.66px;font-size:6.9px;font-weight:400;color:#303030;white-space:pre;left:1158.75px;width:11.25px;text-align:right;transform-origin:100% 50%;transform:scaleX(0.880);">Yes</div><div style="position:absolute;top:607.59px;height:9.66px;line-height:9.66px;font-size:6.9px;font-weight:400;color:#303030;white-space:pre;left:1205.35px;width:11.25px;text-align:right;transform-origin:100% 50%;transform:scaleX(0.880);">Yes</div><div style="position:absolute;top:627.28px;height:10.08px;line-height:10.08px;font-size:7.2px;font-weight:700;color:#1a1a1a;white-space:pre;left:977.80px;transform-origin:0 50%;transform:scaleX(0.950);">ACPI: Galaxy Microsystems Ltd. GALAX Z890 BOOMSTAR D5 WiFi</div><div style="position:absolute;top:637.44px;height:9.66px;line-height:9.66px;font-size:6.9px;font-weight:400;color:#303030;white-space:pre;left:977.80px;transform-origin:0 50%;transform:scaleX(0.870);">TZ.TZ00</div><div style="position:absolute;top:637.44px;height:9.66px;line-height:9.66px;font-size:6.9px;font-weight:400;color:#303030;white-space:pre;left:1101.53px;width:21.88px;text-align:right;transform-origin:100% 50%;transform:scaleX(0.930);">27.9 <span style="letter-spacing:-1.2px">°</span>C</div><div style="position:absolute;top:637.44px;height:9.66px;line-height:9.66px;font-size:6.9px;font-weight:400;color:#303030;white-space:pre;left:1148.12px;width:21.88px;text-align:right;transform-origin:100% 50%;transform:scaleX(0.930);">27.9 <span style="letter-spacing:-1.2px">°</span>C</div><div style="position:absolute;top:637.44px;height:9.66px;line-height:9.66px;font-size:6.9px;font-weight:400;color:#303030;white-space:pre;left:1194.72px;width:21.88px;text-align:right;transform-origin:100% 50%;transform:scaleX(0.930);">27.9 <span style="letter-spacing:-1.2px">°</span>C</div><div style="position:absolute;top:637.44px;height:9.66px;line-height:9.66px;font-size:6.9px;font-weight:400;color:#303030;white-space:pre;left:1241.62px;width:21.88px;text-align:right;transform-origin:100% 50%;transform:scaleX(0.930);">27.8 <span style="letter-spacing:-1.2px">°</span>C</div><div style="position:absolute;top:626.65px;height:11.90px;line-height:11.90px;font-size:8.5px;font-weight:400;color:#f6f6f6;white-space:pre;text-shadow:0 0 0.6px #9a9a9a;left:1221.00px;transform-origin:0 50%;transform:scaleX(0.971);">PConline</div>
</body></html>
